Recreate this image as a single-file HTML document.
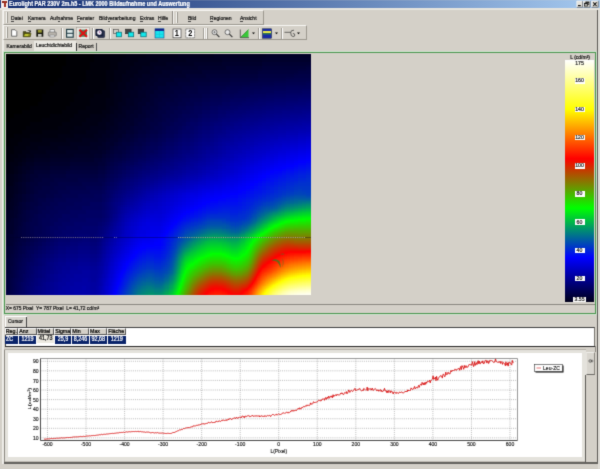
<!DOCTYPE html>
<html><head><meta charset="utf-8"><title>Eurolight PAR 230V 2m.h5 - LMK 2000 Bildaufnahme und Auswertung</title>
<style>
html,body{margin:0;padding:0}
body{width:600px;height:469px;overflow:hidden;background:#d4d0c8;position:relative;font-family:"Liberation Sans",sans-serif;font-size:5.25px;color:#141414;line-height:1;-webkit-text-stroke:0.2px}
div,span,svg{position:absolute;box-sizing:border-box}
.t{white-space:nowrap;transform:scaleY(1.22);transform-origin:0 50%}
#title{left:0;top:0;width:600px;height:8.2px;background:linear-gradient(90deg,#0a246a 0%,#a6caf0 100%)}
#title .t{left:9px;top:1.5px;color:#fff;font-weight:bold;font-size:5.48px}
.wb{top:1px;width:7px;height:7px;background:#d4d0c8;border:0.5px solid;border-color:#fff #404040 #404040 #fff}
.menu{top:16.4px;font-size:5.05px}
.menu u{text-decoration-thickness:0.35px;text-underline-offset:0.3px;text-decoration-color:#666}
.hm{left:6px;top:54px;overflow:hidden}
.chart{left:0;top:0}
.ct{font-family:"Liberation Sans",sans-serif;font-size:5.1px;fill:#111;stroke:#111;stroke-width:0.12px}
.cbl{left:574.5px;width:10px;height:5.6px;background:#fff;font-size:5.2px;text-align:center;line-height:5.8px;color:#222}
.sep{width:1px;background:#9c9890;box-shadow:1px 0 0 #fff}
.tab{font-size:5.0px}
.cell{top:335.8px;height:7.8px;background:#0a246a;color:#fff;font-size:5.4px;line-height:7.6px;text-align:center}
.hd{top:328.1px;height:6.8px;background:#d4d0c8;font-size:5.3px;line-height:5.6px;color:#000;border-right:0.6px solid #555;border-bottom:0.6px solid #555;border-left:0.5px solid #fff;border-top:0.5px solid #fff;padding-left:0.2px;white-space:nowrap}
#w{left:-8px;top:-8px;width:616px;height:485px;background:#d4d0c8;filter:url(#soft)}
#p{left:8px;top:8px;width:600px;height:469px}
.hd span,.cell span,.cbl span{position:static;display:block;transform:scaleY(1.2);line-height:1}
.cell,.cbl{display:flex;align-items:center;justify-content:center}
.cell span{transform:translateY(-0.45px) scaleY(1.2)}
.hd span{transform:translateY(0.2px) scaleY(1.15);margin-left:-0.4px}
.hd{display:flex;align-items:center;justify-content:flex-start}
</style></head><body>
<svg width="0" height="0" style="left:0;top:0"><defs><filter id="soft" x="0" y="0" width="100%" height="100%" color-interpolation-filters="sRGB"><feConvolveMatrix order="3" kernelMatrix="1 6 1 6 36 6 1 6 1" divisor="64" edgeMode="duplicate" preserveAlpha="true"/></filter></defs></svg>
<div id="w"><div id="p">

<!-- window frame bits -->
<div style="left:0;top:9px;width:1px;height:460px;background:#d4d0c8"></div>
<div style="left:2px;top:9px;width:1.8px;height:455px;background:#eeece8"></div>
<div style="left:597px;top:8.2px;width:1.4px;height:455.4px;background:#5c5a56"></div>
<div style="left:598.4px;top:8.2px;width:1.6px;height:461px;background:#e0ded8"></div>

<!-- title bar -->
<div id="title">
  <div style="left:1px;top:0.4px;width:7.2px;height:7.6px;background:#f8f0f0"></div>
  <div style="left:2.4px;top:1px;width:4.8px;height:1.5px;background:#8c2418"></div>
  <div style="left:3.9px;top:1px;width:1.8px;height:5.6px;background:#a03020"></div>
  <div class="t">Eurolight PAR 230V 2m.h5 - LMK 2000 Bildaufnahme und Auswertung</div>
</div>
<svg width="24" height="9" viewBox="576 0 24 9" style="left:576px;top:0">
  <rect x="576.8" y="1" width="5.8" height="6.2" fill="#e4e2dc"/><path d="M576.8 7.2h5.8v-6.2" stroke="#505050" stroke-width="0.7" fill="none"/><path d="M576.8 7.2v-6.2h5.8" stroke="#fff" stroke-width="0.6" fill="none"/>
  <rect x="578" y="5" width="2.8" height="1.1" fill="#111"/>
  <rect x="583.4" y="1" width="6.6" height="6.2" fill="#dcdad4"/><path d="M583.4 7.2h6.6v-6.2" stroke="#505050" stroke-width="0.7" fill="none"/><path d="M583.4 7.2v-6.2h6.6" stroke="#fff" stroke-width="0.6" fill="none"/>
  <rect x="585.8" y="2" width="3" height="2.6" fill="none" stroke="#111" stroke-width="0.7"/><rect x="585.8" y="1.9" width="3" height="0.9" fill="#111"/>
  <rect x="584.6" y="3.4" width="3" height="2.6" fill="#dcdad4" stroke="#111" stroke-width="0.7"/><rect x="584.6" y="3.3" width="3" height="0.9" fill="#111"/>
  <rect x="591.6" y="1" width="6.6" height="6.2" fill="#e4e2dc"/><path d="M591.6 7.2h6.6v-6.2" stroke="#505050" stroke-width="0.7" fill="none"/><path d="M591.6 7.2v-6.2h6.6" stroke="#fff" stroke-width="0.6" fill="none"/>
  <path d="M593.2 2.3l3.4 3.7M596.6 2.3l-3.4 3.7" stroke="#111" stroke-width="1.1"/>
</svg>
<!-- menu band -->
<div style="left:0;top:8.2px;width:600px;height:1.6px;background:#e6e4de"></div>
<div style="left:3.4px;top:10px;width:260.4px;height:14.6px;border:0.7px solid;border-color:#f6f5f2 #9c988f #9c988f #f6f5f2"></div>
<div style="left:5.6px;top:12px;width:0.9px;height:11px;background:#f8f8f4"></div><div style="left:6.5px;top:12px;width:0.8px;height:11px;background:#9a968e"></div>
<div style="left:172.4px;top:10.6px;width:0.8px;height:13.6px;background:#8e8a82"></div><div style="left:173.2px;top:10.6px;width:0.8px;height:13.6px;background:#f6f5f2"></div>
<div style="left:175.6px;top:12px;width:0.9px;height:11px;background:#f8f8f4"></div><div style="left:176.5px;top:12px;width:0.8px;height:11px;background:#9a968e"></div>
<!-- toolbar band -->
<div style="left:3.4px;top:24.8px;width:303.4px;height:15.6px;border:0.7px solid;border-color:#f6f5f2 #9c988f #9c988f #f6f5f2"></div>
<div style="left:5.6px;top:27px;width:0.9px;height:11.4px;background:#f8f8f4"></div><div style="left:6.5px;top:27px;width:0.8px;height:11.4px;background:#9a968e"></div>
<div class="t menu" style="left:11px">Datei</div>
<div class="t menu" style="left:28px">Kamera</div>
<div class="t menu" style="left:50px">Aufnahme</div>
<div class="t menu" style="left:77px">Fenster</div>
<div class="t menu" style="left:99px">Bildverarbeitung</div>
<div class="t menu" style="left:140px">Extras</div>
<div class="t menu" style="left:158px">Hilfe</div>
<div class="t menu" style="left:188px">Bild</div>
<div class="t menu" style="left:210px">Regionen</div>
<div class="t menu" style="left:240px">Ansicht</div>

<div style="left:11.2px;top:21.3px;width:3.3px;height:0.45px;background:#444"></div><div style="left:28.2px;top:21.3px;width:3.0px;height:0.45px;background:#444"></div><div style="left:57.8px;top:21.3px;width:2.4px;height:0.45px;background:#444"></div><div style="left:77.2px;top:21.3px;width:2.7px;height:0.45px;background:#444"></div><div style="left:107.6px;top:21.3px;width:2.1px;height:0.45px;background:#444"></div><div style="left:140.2px;top:21.3px;width:3.0px;height:0.45px;background:#444"></div><div style="left:158.2px;top:21.3px;width:3.3px;height:0.45px;background:#444"></div><div style="left:188.2px;top:21.3px;width:3.0px;height:0.45px;background:#444"></div><div style="left:210.2px;top:21.3px;width:3.3px;height:0.45px;background:#444"></div><div style="left:240.2px;top:21.3px;width:3.0px;height:0.45px;background:#444"></div>
<!-- toolbar -->
<!--ICONS-->
<svg width="310" height="16" viewBox="0 26 310 16" style="left:0;top:25.5px">
  <!-- new -->
  <path d="M11.6 29.7h3.4l1.8 1.8v4.7h-5.2z" fill="#fff" stroke="#3a3a3a" stroke-width="0.7"/>
  <!-- open -->
  <path d="M23.2 31.6h2.6l0.9 0.9h3.6v4.2H23.2z" fill="#4e4e12" stroke="#2a2a10" stroke-width="0.5"/>
  <path d="M24.6 33.6h6.6l-1.4 3.1H23.2z" fill="#8a8a18" stroke="#2a2a10" stroke-width="0.4"/>
  <path d="M25 34.3h3.6l-0.6 1.5h-3.6z" fill="#d0d838"/>
  <path d="M26.8 30.6q2-1.3 3.6 0.2l0.6-0.8v2h-2l0.7-0.7q-1.2-1-2.9-0.7z" fill="#333"/>
  <!-- save -->
  <rect x="36.3" y="29.5" width="7" height="7.2" fill="#1a1a10" />
  <rect x="37.8" y="30" width="4" height="2.6" fill="#9a9a30"/>
  <rect x="38" y="34" width="3.6" height="2.7" fill="#c8c8c0"/>
  <!-- print -->
  <path d="M50 32V29.5h4.5V32" fill="#eee" stroke="#666" stroke-width="0.6"/>
  <rect x="48.3" y="32" width="8" height="4" rx="0.8" fill="#b8b4ac" stroke="#666" stroke-width="0.6"/>
  <rect x="50" y="35" width="4.5" height="2" fill="#ddd" stroke="#666" stroke-width="0.4"/>
  <!-- sep -->
  <path d="M61.5 28v11" stroke="#a09c94" stroke-width="1"/><path d="M62.5 28v11" stroke="#fff" stroke-width="1"/>
  <!-- film -->
  <rect x="66.6" y="29.4" width="6.6" height="7.8" fill="#dfeaea" stroke="#1c3840" stroke-width="1.1"/>
  <path d="M66.6 33.3h6.6" stroke="#1c3840" stroke-width="1"/>
  <!-- red X pressed -->
  <rect x="76.5" y="27.6" width="13" height="12" fill="#e9e7e2" stroke="#9a968e" stroke-width="0.5"/>
  <rect x="79.4" y="29.6" width="7.6" height="7.2" fill="#4a8a62"/>
  <path d="M79.4 29.8L87 36.8M87 29.8L79.4 36.8" stroke="#e01010" stroke-width="2.1"/>
  <path d="M92.5 28v11" stroke="#a09c94" stroke-width="1"/><path d="M93.5 28v11" stroke="#fff" stroke-width="1"/>
  <!-- clock -->
  <rect x="97.6" y="30.6" width="7" height="7" rx="1" fill="#27304c" stroke="#10162c" stroke-width="0.6"/>
  <rect x="95.4" y="28.9" width="7.4" height="7" rx="1" fill="#141c38"/>
  <circle cx="99.4" cy="32.6" r="2.5" fill="#f6f4ff" stroke="#223" stroke-width="0.4"/>
  <path d="M99.4 31v1.7h1.2" stroke="#802060" stroke-width="0.5" fill="none"/>
  <path d="M109.5 28v11" stroke="#a09c94" stroke-width="1"/><path d="M110.5 28v11" stroke="#fff" stroke-width="1"/>
  <!-- cyan boxes -->
  <rect x="113.3" y="29.5" width="5" height="4" fill="#d4d0c8" stroke="#444" stroke-width="0.6"/>
  <rect x="116.3" y="32.2" width="5.2" height="4.6" fill="#12e8ec" stroke="#0a6a70" stroke-width="0.7"/>
  <rect x="125.6" y="29.2" width="5.5" height="4.5" fill="#444" stroke="#222" stroke-width="0.6"/>
  <rect x="128.3" y="32.2" width="5.4" height="4.6" fill="#12e8ec" stroke="#0a6a70" stroke-width="0.7"/>
  <rect x="138.2" y="29.2" width="5.5" height="4.5" fill="#444" stroke="#222" stroke-width="0.6"/>
  <rect x="140.8" y="32.2" width="5.4" height="4.6" fill="#12e8ec" stroke="#0a6a70" stroke-width="0.7"/>
  <!-- cyan window -->
  <rect x="155" y="28.8" width="9" height="9.2" fill="#18e4ee" stroke="#1a4a8a" stroke-width="0.6"/><path d="M159.5 31v7M155 34.4h9" stroke="#10c0d0" stroke-width="0.5"/>
  <rect x="155" y="28.8" width="9" height="2.1" fill="#14208a"/>
  <!-- 1 2 -->
  <rect x="173" y="29" width="8" height="8.8" fill="#fff" stroke="#444" stroke-width="0.7"/>
  <rect x="185.8" y="29" width="8.8" height="8.8" fill="#fff" stroke="#444" stroke-width="0.7" stroke-dasharray="1 0.5"/>
  <text transform="translate(176.9 36.1) scale(1 1.18)" text-anchor="middle" font-family="Liberation Sans, sans-serif" font-weight="bold" font-size="7.4" fill="#000">1</text>
  <text transform="translate(190.2 36.1) scale(1 1.18)" text-anchor="middle" font-family="Liberation Sans, sans-serif" font-weight="bold" font-size="7.4" fill="#000">2</text>
  <path d="M203.5 28v11" stroke="#a09c94" stroke-width="1"/><path d="M204.5 28v11" stroke="#fff" stroke-width="1"/>
  <path d="M206.5 28v11" stroke="#fff" stroke-width="1"/><path d="M207.5 28v11" stroke="#a09c94" stroke-width="1"/>
  <!-- magnifiers -->
  <circle cx="214.5" cy="32.2" r="2.5" fill="#e8e8e8" stroke="#444" stroke-width="0.7"/><path d="M216.4 34.2l3 3" stroke="#333" stroke-width="1.1"/>
  <path d="M213.3 32.2h2.4M214.5 31v2.4" stroke="#444" stroke-width="0.5"/>
  <circle cx="227.5" cy="32.2" r="2.5" fill="#e8e8e8" stroke="#444" stroke-width="0.7"/><path d="M229.4 34.2l3 3" stroke="#333" stroke-width="1.1"/>
  <!-- green triangle -->
  <path d="M240.5 37.5L248.5 29.5V37.5z" fill="#38c838"/>
  <path d="M240.3 29.5V37.7H249" stroke="#333" stroke-width="0.7" fill="none"/>
  <path d="M240.5 37.5L248.5 29.5" stroke="#1a7a1a" stroke-width="0.6"/>
  <path d="M252 32.5h3l-1.5 1.8z" fill="#000"/>
  <path d="M258.5 28v11" stroke="#a09c94" stroke-width="1"/><path d="M259.5 28v11" stroke="#fff" stroke-width="1"/>
  <!-- blue yellow -->
  <rect x="262.5" y="28.8" width="9" height="9.4" fill="#1a2aa8" stroke="#123" stroke-width="0.5"/>
  <rect x="263" y="31" width="8" height="2.2" fill="#e8e84a"/>
  <rect x="263" y="33.2" width="8" height="1.3" fill="#2a7a4a"/>
  <path d="M275 32.5h3l-1.5 1.8z" fill="#000"/>
  <path d="M281.5 28v11" stroke="#a09c94" stroke-width="1"/><path d="M282.5 28v11" stroke="#fff" stroke-width="1"/>
  <!-- squiggle -->
  <path d="M284.5 32.3h6.2M294 30.2q-3.2-0.2-3.3 2.4q0 4 2.4 4q1.7 0 1.7-1.6q0-1.6-1.9-1.5" stroke="#2a2a2a" stroke-width="0.65" fill="none"/>
  <path d="M297 32.5h3l-1.5 1.8z" fill="#000"/>
</svg>

<!-- tabs -->
<div style="left:33.5px;top:41.2px;width:42px;height:10px;background:#eae8e2"></div>
<div class="t tab" style="left:6.5px;top:43.6px">Kamerabild</div>
<div class="t tab" style="left:36px;top:42.8px">Leuchtdichtebild</div>
<div class="t tab" style="left:78.6px;top:43.6px">Report</div>
<div style="left:75.6px;top:42.5px;width:0.9px;height:8.5px;background:#333"></div>
<div style="left:95.6px;top:42.5px;width:0.9px;height:8.5px;background:#555"></div>

<!-- main panel -->
<div style="left:4.2px;top:52.1px;width:592px;height:261.8px;border:1.7px solid #4c9650;box-shadow:0 0 0 0.9px #cde6cd"></div>
<svg class="hm" width="305" height="241" viewBox="0 0 305 241">
<defs><filter id="cm" x="-20" y="-20" width="345" height="281" filterUnits="userSpaceOnUse" color-interpolation-filters="sRGB">
<feGaussianBlur stdDeviation="2"/>
<feComponentTransfer><feFuncR type="table" tableValues="0 0 0 1 1 1"/><feFuncG type="table" tableValues="0 0 1 0 1 1"/><feFuncB type="table" tableValues="0 1 0 0 0 1"/><feFuncA type="table" tableValues="1 1"/></feComponentTransfer>
</filter></defs>
<rect x="-20" y="-20" width="345" height="281" fill="#000"/>
<g filter="url(#cm)" shape-rendering="crispEdges"><path fill="#000000" d="M-12 -12h4v4h-4zM-8 -12h4v4h-4zM-4 -12h4v4h-4zM0 -12h4v4h-4zM4 -12h4v4h-4zM8 -12h4v4h-4zM12 -12h4v4h-4zM16 -12h4v4h-4zM20 -12h4v4h-4zM24 -12h4v4h-4zM28 -12h4v4h-4zM32 -12h4v4h-4zM36 -12h4v4h-4zM40 -12h4v4h-4zM44 -12h4v4h-4zM48 -12h4v4h-4zM52 -12h4v4h-4zM56 -12h4v4h-4zM-12 -8h4v4h-4zM-8 -8h4v4h-4zM-4 -8h4v4h-4zM0 -8h4v4h-4zM4 -8h4v4h-4zM8 -8h4v4h-4zM12 -8h4v4h-4zM16 -8h4v4h-4zM20 -8h4v4h-4zM24 -8h4v4h-4zM28 -8h4v4h-4zM32 -8h4v4h-4zM36 -8h4v4h-4zM40 -8h4v4h-4zM44 -8h4v4h-4zM48 -8h4v4h-4zM52 -8h4v4h-4zM56 -8h4v4h-4zM-12 -4h4v4h-4zM-8 -4h4v4h-4zM-4 -4h4v4h-4zM0 -4h4v4h-4zM4 -4h4v4h-4zM8 -4h4v4h-4zM12 -4h4v4h-4zM16 -4h4v4h-4zM20 -4h4v4h-4zM24 -4h4v4h-4zM28 -4h4v4h-4zM32 -4h4v4h-4zM36 -4h4v4h-4zM40 -4h4v4h-4zM44 -4h4v4h-4zM48 -4h4v4h-4zM52 -4h4v4h-4zM56 -4h4v4h-4zM-12 0h4v4h-4zM-8 0h4v4h-4zM-4 0h4v4h-4zM0 0h4v4h-4zM4 0h4v4h-4zM8 0h4v4h-4zM12 0h4v4h-4zM16 0h4v4h-4zM20 0h4v4h-4zM24 0h4v4h-4zM28 0h4v4h-4zM32 0h4v4h-4zM36 0h4v4h-4zM40 0h4v4h-4zM44 0h4v4h-4zM48 0h4v4h-4zM52 0h4v4h-4zM56 0h4v4h-4zM-12 4h4v4h-4zM-8 4h4v4h-4zM-4 4h4v4h-4zM0 4h4v4h-4zM4 4h4v4h-4zM8 4h4v4h-4zM12 4h4v4h-4zM16 4h4v4h-4zM20 4h4v4h-4zM24 4h4v4h-4zM28 4h4v4h-4zM32 4h4v4h-4zM36 4h4v4h-4zM40 4h4v4h-4zM44 4h4v4h-4zM48 4h4v4h-4zM52 4h4v4h-4zM56 4h4v4h-4zM-12 8h4v4h-4zM-8 8h4v4h-4zM-4 8h4v4h-4zM0 8h4v4h-4zM4 8h4v4h-4zM8 8h4v4h-4zM12 8h4v4h-4zM16 8h4v4h-4zM20 8h4v4h-4zM24 8h4v4h-4zM28 8h4v4h-4zM32 8h4v4h-4zM36 8h4v4h-4zM40 8h4v4h-4zM44 8h4v4h-4zM48 8h4v4h-4zM52 8h4v4h-4zM56 8h4v4h-4zM-12 12h4v4h-4zM-8 12h4v4h-4zM-4 12h4v4h-4zM0 12h4v4h-4zM4 12h4v4h-4zM8 12h4v4h-4zM12 12h4v4h-4zM16 12h4v4h-4zM20 12h4v4h-4zM24 12h4v4h-4zM28 12h4v4h-4zM32 12h4v4h-4zM36 12h4v4h-4zM40 12h4v4h-4zM44 12h4v4h-4zM48 12h4v4h-4zM52 12h4v4h-4zM-12 16h4v4h-4zM-8 16h4v4h-4zM-4 16h4v4h-4zM0 16h4v4h-4zM4 16h4v4h-4zM8 16h4v4h-4zM12 16h4v4h-4zM16 16h4v4h-4zM20 16h4v4h-4zM24 16h4v4h-4zM28 16h4v4h-4zM32 16h4v4h-4zM36 16h4v4h-4zM40 16h4v4h-4zM44 16h4v4h-4zM48 16h4v4h-4zM52 16h4v4h-4zM-12 20h4v4h-4zM-8 20h4v4h-4zM-4 20h4v4h-4zM0 20h4v4h-4zM4 20h4v4h-4zM8 20h4v4h-4zM12 20h4v4h-4zM16 20h4v4h-4zM20 20h4v4h-4zM24 20h4v4h-4zM28 20h4v4h-4zM32 20h4v4h-4zM36 20h4v4h-4zM40 20h4v4h-4zM44 20h4v4h-4zM48 20h4v4h-4zM52 20h4v4h-4zM-12 24h4v4h-4zM-8 24h4v4h-4zM-4 24h4v4h-4zM0 24h4v4h-4zM4 24h4v4h-4zM8 24h4v4h-4zM12 24h4v4h-4zM16 24h4v4h-4zM20 24h4v4h-4zM24 24h4v4h-4zM28 24h4v4h-4zM32 24h4v4h-4zM36 24h4v4h-4zM40 24h4v4h-4zM44 24h4v4h-4zM48 24h4v4h-4zM-12 28h4v4h-4zM-8 28h4v4h-4zM-4 28h4v4h-4zM0 28h4v4h-4zM4 28h4v4h-4zM8 28h4v4h-4zM12 28h4v4h-4zM16 28h4v4h-4zM20 28h4v4h-4zM24 28h4v4h-4zM28 28h4v4h-4zM32 28h4v4h-4zM36 28h4v4h-4zM40 28h4v4h-4zM44 28h4v4h-4zM-12 32h4v4h-4zM-8 32h4v4h-4zM-4 32h4v4h-4zM0 32h4v4h-4zM4 32h4v4h-4zM8 32h4v4h-4zM12 32h4v4h-4zM16 32h4v4h-4zM20 32h4v4h-4zM24 32h4v4h-4zM28 32h4v4h-4zM32 32h4v4h-4zM36 32h4v4h-4zM40 32h4v4h-4zM-12 36h4v4h-4zM-8 36h4v4h-4zM-4 36h4v4h-4zM0 36h4v4h-4zM4 36h4v4h-4zM8 36h4v4h-4zM12 36h4v4h-4zM16 36h4v4h-4zM20 36h4v4h-4zM24 36h4v4h-4zM28 36h4v4h-4zM32 36h4v4h-4zM36 36h4v4h-4zM-12 40h4v4h-4zM-8 40h4v4h-4zM-4 40h4v4h-4zM0 40h4v4h-4zM4 40h4v4h-4zM8 40h4v4h-4zM12 40h4v4h-4zM16 40h4v4h-4zM20 40h4v4h-4zM24 40h4v4h-4zM28 40h4v4h-4zM32 40h4v4h-4zM-12 44h4v4h-4zM-8 44h4v4h-4zM-4 44h4v4h-4zM0 44h4v4h-4zM4 44h4v4h-4zM8 44h4v4h-4zM12 44h4v4h-4zM16 44h4v4h-4zM20 44h4v4h-4zM24 44h4v4h-4zM28 44h4v4h-4zM32 44h4v4h-4zM-12 48h4v4h-4zM-8 48h4v4h-4zM-4 48h4v4h-4zM0 48h4v4h-4zM4 48h4v4h-4zM8 48h4v4h-4zM12 48h4v4h-4zM16 48h4v4h-4zM20 48h4v4h-4zM24 48h4v4h-4zM28 48h4v4h-4zM-12 52h4v4h-4zM-8 52h4v4h-4zM-4 52h4v4h-4zM0 52h4v4h-4zM4 52h4v4h-4zM8 52h4v4h-4zM12 52h4v4h-4zM16 52h4v4h-4zM20 52h4v4h-4zM-12 56h4v4h-4zM-8 56h4v4h-4zM-4 56h4v4h-4zM0 56h4v4h-4zM4 56h4v4h-4zM8 56h4v4h-4zM12 56h4v4h-4zM-12 60h4v4h-4zM-8 60h4v4h-4zM-4 60h4v4h-4zM0 60h4v4h-4zM4 60h4v4h-4zM-12 64h4v4h-4zM-8 64h4v4h-4zM-4 64h4v4h-4zM0 64h4v4h-4zM-12 68h4v4h-4zM-8 68h4v4h-4zM-4 68h4v4h-4z"/><path fill="#010101" d="M60 -12h4v4h-4zM64 -12h4v4h-4zM68 -12h4v4h-4zM72 -12h4v4h-4zM76 -12h4v4h-4zM80 -12h4v4h-4zM84 -12h4v4h-4zM88 -12h4v4h-4zM60 -8h4v4h-4zM64 -8h4v4h-4zM68 -8h4v4h-4zM72 -8h4v4h-4zM76 -8h4v4h-4zM80 -8h4v4h-4zM84 -8h4v4h-4zM88 -8h4v4h-4zM60 -4h4v4h-4zM64 -4h4v4h-4zM68 -4h4v4h-4zM72 -4h4v4h-4zM76 -4h4v4h-4zM80 -4h4v4h-4zM84 -4h4v4h-4zM88 -4h4v4h-4zM60 0h4v4h-4zM64 0h4v4h-4zM68 0h4v4h-4zM72 0h4v4h-4zM76 0h4v4h-4zM80 0h4v4h-4zM84 0h4v4h-4zM60 4h4v4h-4zM64 4h4v4h-4zM68 4h4v4h-4zM72 4h4v4h-4zM76 4h4v4h-4zM80 4h4v4h-4zM84 4h4v4h-4zM60 8h4v4h-4zM64 8h4v4h-4zM68 8h4v4h-4zM72 8h4v4h-4zM76 8h4v4h-4zM80 8h4v4h-4zM56 12h4v4h-4zM60 12h4v4h-4zM64 12h4v4h-4zM68 12h4v4h-4zM72 12h4v4h-4zM76 12h4v4h-4zM80 12h4v4h-4zM56 16h4v4h-4zM60 16h4v4h-4zM64 16h4v4h-4zM68 16h4v4h-4zM72 16h4v4h-4zM76 16h4v4h-4zM56 20h4v4h-4zM60 20h4v4h-4zM64 20h4v4h-4zM68 20h4v4h-4zM72 20h4v4h-4zM76 20h4v4h-4zM52 24h4v4h-4zM56 24h4v4h-4zM60 24h4v4h-4zM64 24h4v4h-4zM68 24h4v4h-4zM72 24h4v4h-4zM76 24h4v4h-4zM48 28h4v4h-4zM52 28h4v4h-4zM56 28h4v4h-4zM60 28h4v4h-4zM64 28h4v4h-4zM68 28h4v4h-4zM72 28h4v4h-4zM44 32h4v4h-4zM48 32h4v4h-4zM52 32h4v4h-4zM56 32h4v4h-4zM60 32h4v4h-4zM64 32h4v4h-4zM68 32h4v4h-4zM40 36h4v4h-4zM44 36h4v4h-4zM48 36h4v4h-4zM52 36h4v4h-4zM56 36h4v4h-4zM60 36h4v4h-4zM64 36h4v4h-4zM68 36h4v4h-4zM36 40h4v4h-4zM40 40h4v4h-4zM44 40h4v4h-4zM48 40h4v4h-4zM52 40h4v4h-4zM56 40h4v4h-4zM60 40h4v4h-4zM64 40h4v4h-4zM36 44h4v4h-4zM40 44h4v4h-4zM44 44h4v4h-4zM48 44h4v4h-4zM52 44h4v4h-4zM56 44h4v4h-4zM60 44h4v4h-4zM64 44h4v4h-4zM32 48h4v4h-4zM36 48h4v4h-4zM40 48h4v4h-4zM44 48h4v4h-4zM48 48h4v4h-4zM52 48h4v4h-4zM56 48h4v4h-4zM60 48h4v4h-4zM24 52h4v4h-4zM28 52h4v4h-4zM32 52h4v4h-4zM36 52h4v4h-4zM40 52h4v4h-4zM44 52h4v4h-4zM48 52h4v4h-4zM52 52h4v4h-4zM56 52h4v4h-4zM16 56h4v4h-4zM20 56h4v4h-4zM24 56h4v4h-4zM28 56h4v4h-4zM32 56h4v4h-4zM36 56h4v4h-4zM40 56h4v4h-4zM44 56h4v4h-4zM48 56h4v4h-4zM52 56h4v4h-4zM8 60h4v4h-4zM12 60h4v4h-4zM16 60h4v4h-4zM20 60h4v4h-4zM24 60h4v4h-4zM28 60h4v4h-4zM32 60h4v4h-4zM36 60h4v4h-4zM40 60h4v4h-4zM4 64h4v4h-4zM8 64h4v4h-4zM12 64h4v4h-4zM16 64h4v4h-4zM20 64h4v4h-4zM24 64h4v4h-4zM28 64h4v4h-4zM32 64h4v4h-4zM0 68h4v4h-4zM4 68h4v4h-4zM8 68h4v4h-4zM12 68h4v4h-4zM16 68h4v4h-4zM20 68h4v4h-4zM-12 72h4v4h-4zM-8 72h4v4h-4zM-4 72h4v4h-4zM0 72h4v4h-4zM4 72h4v4h-4zM8 72h4v4h-4zM12 72h4v4h-4zM16 72h4v4h-4zM-12 76h4v4h-4zM-8 76h4v4h-4zM-4 76h4v4h-4zM0 76h4v4h-4zM4 76h4v4h-4zM8 76h4v4h-4zM12 76h4v4h-4zM-12 80h4v4h-4zM-8 80h4v4h-4zM-4 80h4v4h-4zM0 80h4v4h-4zM4 80h4v4h-4zM-12 84h4v4h-4zM-8 84h4v4h-4zM-4 84h4v4h-4zM0 84h4v4h-4zM-12 88h4v4h-4zM-8 88h4v4h-4zM-4 88h4v4h-4zM0 88h4v4h-4zM-12 92h4v4h-4zM-8 92h4v4h-4zM-4 92h4v4h-4z"/><path fill="#020202" d="M92 -12h4v4h-4zM96 -12h4v4h-4zM100 -12h4v4h-4zM92 -8h4v4h-4zM96 -8h4v4h-4zM100 -8h4v4h-4zM92 -4h4v4h-4zM96 -4h4v4h-4zM100 -4h4v4h-4zM88 0h4v4h-4zM92 0h4v4h-4zM96 0h4v4h-4zM100 0h4v4h-4zM88 4h4v4h-4zM92 4h4v4h-4zM96 4h4v4h-4zM100 4h4v4h-4zM84 8h4v4h-4zM88 8h4v4h-4zM92 8h4v4h-4zM96 8h4v4h-4zM100 8h4v4h-4zM84 12h4v4h-4zM88 12h4v4h-4zM92 12h4v4h-4zM96 12h4v4h-4zM100 12h4v4h-4zM80 16h4v4h-4zM84 16h4v4h-4zM88 16h4v4h-4zM92 16h4v4h-4zM96 16h4v4h-4zM80 20h4v4h-4zM84 20h4v4h-4zM88 20h4v4h-4zM92 20h4v4h-4zM96 20h4v4h-4zM80 24h4v4h-4zM84 24h4v4h-4zM88 24h4v4h-4zM92 24h4v4h-4zM96 24h4v4h-4zM76 28h4v4h-4zM80 28h4v4h-4zM84 28h4v4h-4zM88 28h4v4h-4zM92 28h4v4h-4zM96 28h4v4h-4zM72 32h4v4h-4zM76 32h4v4h-4zM80 32h4v4h-4zM84 32h4v4h-4zM88 32h4v4h-4zM92 32h4v4h-4zM96 32h4v4h-4zM72 36h4v4h-4zM76 36h4v4h-4zM80 36h4v4h-4zM84 36h4v4h-4zM88 36h4v4h-4zM92 36h4v4h-4zM68 40h4v4h-4zM72 40h4v4h-4zM76 40h4v4h-4zM80 40h4v4h-4zM84 40h4v4h-4zM68 44h4v4h-4zM72 44h4v4h-4zM76 44h4v4h-4zM80 44h4v4h-4zM64 48h4v4h-4zM68 48h4v4h-4zM72 48h4v4h-4zM76 48h4v4h-4zM80 48h4v4h-4zM60 52h4v4h-4zM64 52h4v4h-4zM68 52h4v4h-4zM72 52h4v4h-4zM76 52h4v4h-4zM56 56h4v4h-4zM60 56h4v4h-4zM64 56h4v4h-4zM68 56h4v4h-4zM44 60h4v4h-4zM48 60h4v4h-4zM52 60h4v4h-4zM56 60h4v4h-4zM60 60h4v4h-4zM64 60h4v4h-4zM36 64h4v4h-4zM40 64h4v4h-4zM44 64h4v4h-4zM48 64h4v4h-4zM52 64h4v4h-4zM56 64h4v4h-4zM60 64h4v4h-4zM24 68h4v4h-4zM28 68h4v4h-4zM32 68h4v4h-4zM36 68h4v4h-4zM40 68h4v4h-4zM44 68h4v4h-4zM48 68h4v4h-4zM52 68h4v4h-4zM20 72h4v4h-4zM24 72h4v4h-4zM28 72h4v4h-4zM32 72h4v4h-4zM36 72h4v4h-4zM40 72h4v4h-4zM44 72h4v4h-4zM48 72h4v4h-4zM16 76h4v4h-4zM20 76h4v4h-4zM24 76h4v4h-4zM28 76h4v4h-4zM32 76h4v4h-4zM8 80h4v4h-4zM12 80h4v4h-4zM16 80h4v4h-4zM20 80h4v4h-4zM4 84h4v4h-4zM8 84h4v4h-4zM12 84h4v4h-4zM4 88h4v4h-4zM8 88h4v4h-4zM0 92h4v4h-4zM4 92h4v4h-4zM-12 96h4v4h-4zM-8 96h4v4h-4zM-4 96h4v4h-4zM0 96h4v4h-4zM4 96h4v4h-4zM-12 100h4v4h-4zM-8 100h4v4h-4zM-4 100h4v4h-4zM0 100h4v4h-4zM-12 104h4v4h-4zM-8 104h4v4h-4zM-4 104h4v4h-4zM0 104h4v4h-4zM-12 108h4v4h-4zM-8 108h4v4h-4zM-4 108h4v4h-4z"/><path fill="#030303" d="M104 -12h4v4h-4zM108 -12h4v4h-4zM112 -12h4v4h-4zM116 -12h4v4h-4zM104 -8h4v4h-4zM108 -8h4v4h-4zM112 -8h4v4h-4zM116 -8h4v4h-4zM104 -4h4v4h-4zM108 -4h4v4h-4zM112 -4h4v4h-4zM116 -4h4v4h-4zM104 0h4v4h-4zM108 0h4v4h-4zM112 0h4v4h-4zM116 0h4v4h-4zM104 4h4v4h-4zM108 4h4v4h-4zM112 4h4v4h-4zM104 8h4v4h-4zM108 8h4v4h-4zM104 12h4v4h-4zM108 12h4v4h-4zM100 16h4v4h-4zM104 16h4v4h-4zM100 20h4v4h-4zM104 20h4v4h-4zM100 24h4v4h-4zM104 24h4v4h-4zM100 28h4v4h-4zM100 32h4v4h-4zM96 36h4v4h-4zM100 36h4v4h-4zM88 40h4v4h-4zM92 40h4v4h-4zM96 40h4v4h-4zM100 40h4v4h-4zM84 44h4v4h-4zM88 44h4v4h-4zM92 44h4v4h-4zM96 44h4v4h-4zM84 48h4v4h-4zM88 48h4v4h-4zM92 48h4v4h-4zM96 48h4v4h-4zM80 52h4v4h-4zM84 52h4v4h-4zM88 52h4v4h-4zM92 52h4v4h-4zM96 52h4v4h-4zM72 56h4v4h-4zM76 56h4v4h-4zM80 56h4v4h-4zM84 56h4v4h-4zM88 56h4v4h-4zM92 56h4v4h-4zM68 60h4v4h-4zM72 60h4v4h-4zM76 60h4v4h-4zM80 60h4v4h-4zM64 64h4v4h-4zM68 64h4v4h-4zM72 64h4v4h-4zM76 64h4v4h-4zM56 68h4v4h-4zM60 68h4v4h-4zM64 68h4v4h-4zM68 68h4v4h-4zM72 68h4v4h-4zM52 72h4v4h-4zM56 72h4v4h-4zM60 72h4v4h-4zM64 72h4v4h-4zM36 76h4v4h-4zM40 76h4v4h-4zM44 76h4v4h-4zM48 76h4v4h-4zM52 76h4v4h-4zM56 76h4v4h-4zM60 76h4v4h-4zM24 80h4v4h-4zM28 80h4v4h-4zM32 80h4v4h-4zM36 80h4v4h-4zM40 80h4v4h-4zM44 80h4v4h-4zM48 80h4v4h-4zM16 84h4v4h-4zM20 84h4v4h-4zM24 84h4v4h-4zM28 84h4v4h-4zM32 84h4v4h-4zM12 88h4v4h-4zM16 88h4v4h-4zM20 88h4v4h-4zM8 92h4v4h-4zM12 92h4v4h-4zM16 92h4v4h-4zM8 96h4v4h-4zM12 96h4v4h-4zM4 100h4v4h-4zM8 100h4v4h-4zM4 104h4v4h-4zM0 108h4v4h-4zM-12 112h4v4h-4zM-8 112h4v4h-4zM-4 112h4v4h-4zM0 112h4v4h-4zM-12 116h4v4h-4zM-8 116h4v4h-4zM-4 116h4v4h-4zM0 116h4v4h-4zM-12 120h4v4h-4zM-8 120h4v4h-4zM-4 120h4v4h-4zM-12 124h4v4h-4zM-8 124h4v4h-4zM-4 124h4v4h-4z"/><path fill="#040404" d="M120 -12h4v4h-4zM124 -12h4v4h-4zM128 -12h4v4h-4zM132 -12h4v4h-4zM136 -12h4v4h-4zM140 -12h4v4h-4zM144 -12h4v4h-4zM120 -8h4v4h-4zM124 -8h4v4h-4zM128 -8h4v4h-4zM132 -8h4v4h-4zM136 -8h4v4h-4zM140 -8h4v4h-4zM144 -8h4v4h-4zM120 -4h4v4h-4zM124 -4h4v4h-4zM128 -4h4v4h-4zM132 -4h4v4h-4zM136 -4h4v4h-4zM140 -4h4v4h-4zM144 -4h4v4h-4zM120 0h4v4h-4zM124 0h4v4h-4zM128 0h4v4h-4zM132 0h4v4h-4zM136 0h4v4h-4zM116 4h4v4h-4zM120 4h4v4h-4zM124 4h4v4h-4zM128 4h4v4h-4zM112 8h4v4h-4zM116 8h4v4h-4zM120 8h4v4h-4zM124 8h4v4h-4zM112 12h4v4h-4zM116 12h4v4h-4zM120 12h4v4h-4zM108 16h4v4h-4zM112 16h4v4h-4zM116 16h4v4h-4zM108 20h4v4h-4zM112 20h4v4h-4zM108 24h4v4h-4zM112 24h4v4h-4zM104 28h4v4h-4zM108 28h4v4h-4zM104 32h4v4h-4zM108 32h4v4h-4zM104 36h4v4h-4zM104 40h4v4h-4zM100 44h4v4h-4zM104 44h4v4h-4zM100 48h4v4h-4zM104 48h4v4h-4zM100 52h4v4h-4zM96 56h4v4h-4zM100 56h4v4h-4zM84 60h4v4h-4zM88 60h4v4h-4zM92 60h4v4h-4zM96 60h4v4h-4zM80 64h4v4h-4zM84 64h4v4h-4zM88 64h4v4h-4zM92 64h4v4h-4zM76 68h4v4h-4zM80 68h4v4h-4zM84 68h4v4h-4zM88 68h4v4h-4zM68 72h4v4h-4zM72 72h4v4h-4zM76 72h4v4h-4zM80 72h4v4h-4zM64 76h4v4h-4zM68 76h4v4h-4zM72 76h4v4h-4zM76 76h4v4h-4zM52 80h4v4h-4zM56 80h4v4h-4zM60 80h4v4h-4zM64 80h4v4h-4zM36 84h4v4h-4zM40 84h4v4h-4zM44 84h4v4h-4zM48 84h4v4h-4zM52 84h4v4h-4zM56 84h4v4h-4zM24 88h4v4h-4zM28 88h4v4h-4zM32 88h4v4h-4zM36 88h4v4h-4zM40 88h4v4h-4zM20 92h4v4h-4zM24 92h4v4h-4zM28 92h4v4h-4zM16 96h4v4h-4zM20 96h4v4h-4zM12 100h4v4h-4zM16 100h4v4h-4zM8 104h4v4h-4zM12 104h4v4h-4zM4 108h4v4h-4zM8 108h4v4h-4zM4 112h4v4h-4zM4 116h4v4h-4zM0 120h4v4h-4zM0 124h4v4h-4zM-12 128h4v4h-4zM-8 128h4v4h-4zM-4 128h4v4h-4zM0 128h4v4h-4zM-12 132h4v4h-4zM-8 132h4v4h-4zM-4 132h4v4h-4zM-12 136h4v4h-4zM-8 136h4v4h-4zM-4 136h4v4h-4zM-12 140h4v4h-4zM-8 140h4v4h-4zM-4 140h4v4h-4z"/><path fill="#050505" d="M148 -12h4v4h-4zM152 -12h4v4h-4zM156 -12h4v4h-4zM160 -12h4v4h-4zM164 -12h4v4h-4zM168 -12h4v4h-4zM172 -12h4v4h-4zM176 -12h4v4h-4zM180 -12h4v4h-4zM148 -8h4v4h-4zM152 -8h4v4h-4zM156 -8h4v4h-4zM160 -8h4v4h-4zM164 -8h4v4h-4zM168 -8h4v4h-4zM172 -8h4v4h-4zM176 -8h4v4h-4zM180 -8h4v4h-4zM148 -4h4v4h-4zM152 -4h4v4h-4zM156 -4h4v4h-4zM160 -4h4v4h-4zM164 -4h4v4h-4zM168 -4h4v4h-4zM172 -4h4v4h-4zM176 -4h4v4h-4zM180 -4h4v4h-4zM140 0h4v4h-4zM144 0h4v4h-4zM148 0h4v4h-4zM152 0h4v4h-4zM156 0h4v4h-4zM160 0h4v4h-4zM164 0h4v4h-4zM168 0h4v4h-4zM132 4h4v4h-4zM136 4h4v4h-4zM140 4h4v4h-4zM144 4h4v4h-4zM148 4h4v4h-4zM128 8h4v4h-4zM132 8h4v4h-4zM136 8h4v4h-4zM140 8h4v4h-4zM124 12h4v4h-4zM128 12h4v4h-4zM132 12h4v4h-4zM120 16h4v4h-4zM124 16h4v4h-4zM128 16h4v4h-4zM116 20h4v4h-4zM120 20h4v4h-4zM124 20h4v4h-4zM116 24h4v4h-4zM120 24h4v4h-4zM112 28h4v4h-4zM116 28h4v4h-4zM112 32h4v4h-4zM116 32h4v4h-4zM108 36h4v4h-4zM112 36h4v4h-4zM108 40h4v4h-4zM112 40h4v4h-4zM108 44h4v4h-4zM112 44h4v4h-4zM108 48h4v4h-4zM104 52h4v4h-4zM108 52h4v4h-4zM104 56h4v4h-4zM100 60h4v4h-4zM96 64h4v4h-4zM100 64h4v4h-4zM92 68h4v4h-4zM96 68h4v4h-4zM84 72h4v4h-4zM88 72h4v4h-4zM92 72h4v4h-4zM96 72h4v4h-4zM80 76h4v4h-4zM84 76h4v4h-4zM88 76h4v4h-4zM68 80h4v4h-4zM72 80h4v4h-4zM76 80h4v4h-4zM80 80h4v4h-4zM84 80h4v4h-4zM60 84h4v4h-4zM64 84h4v4h-4zM68 84h4v4h-4zM72 84h4v4h-4zM44 88h4v4h-4zM48 88h4v4h-4zM52 88h4v4h-4zM56 88h4v4h-4zM60 88h4v4h-4zM32 92h4v4h-4zM36 92h4v4h-4zM40 92h4v4h-4zM44 92h4v4h-4zM48 92h4v4h-4zM24 96h4v4h-4zM28 96h4v4h-4zM32 96h4v4h-4zM36 96h4v4h-4zM20 100h4v4h-4zM24 100h4v4h-4zM16 104h4v4h-4zM12 108h4v4h-4zM8 112h4v4h-4zM8 116h4v4h-4zM4 120h4v4h-4zM4 124h4v4h-4zM4 128h4v4h-4zM0 132h4v4h-4zM0 136h4v4h-4zM0 140h4v4h-4zM-12 144h4v4h-4zM-8 144h4v4h-4zM-4 144h4v4h-4zM0 144h4v4h-4zM-12 148h4v4h-4zM-8 148h4v4h-4zM-4 148h4v4h-4z"/><path fill="#060606" d="M184 -12h4v4h-4zM188 -12h4v4h-4zM192 -12h4v4h-4zM196 -12h4v4h-4zM200 -12h4v4h-4zM204 -12h4v4h-4zM208 -12h4v4h-4zM212 -12h4v4h-4zM216 -12h4v4h-4zM220 -12h4v4h-4zM224 -12h4v4h-4zM228 -12h4v4h-4zM184 -8h4v4h-4zM188 -8h4v4h-4zM192 -8h4v4h-4zM196 -8h4v4h-4zM200 -8h4v4h-4zM204 -8h4v4h-4zM208 -8h4v4h-4zM212 -8h4v4h-4zM216 -8h4v4h-4zM220 -8h4v4h-4zM224 -8h4v4h-4zM228 -8h4v4h-4zM184 -4h4v4h-4zM188 -4h4v4h-4zM192 -4h4v4h-4zM196 -4h4v4h-4zM200 -4h4v4h-4zM204 -4h4v4h-4zM208 -4h4v4h-4zM212 -4h4v4h-4zM216 -4h4v4h-4zM220 -4h4v4h-4zM224 -4h4v4h-4zM228 -4h4v4h-4zM172 0h4v4h-4zM176 0h4v4h-4zM180 0h4v4h-4zM184 0h4v4h-4zM188 0h4v4h-4zM192 0h4v4h-4zM196 0h4v4h-4zM200 0h4v4h-4zM204 0h4v4h-4zM152 4h4v4h-4zM156 4h4v4h-4zM160 4h4v4h-4zM164 4h4v4h-4zM168 4h4v4h-4zM172 4h4v4h-4zM176 4h4v4h-4zM144 8h4v4h-4zM148 8h4v4h-4zM152 8h4v4h-4zM156 8h4v4h-4zM136 12h4v4h-4zM140 12h4v4h-4zM144 12h4v4h-4zM132 16h4v4h-4zM136 16h4v4h-4zM140 16h4v4h-4zM128 20h4v4h-4zM132 20h4v4h-4zM124 24h4v4h-4zM128 24h4v4h-4zM120 28h4v4h-4zM124 28h4v4h-4zM128 28h4v4h-4zM120 32h4v4h-4zM124 32h4v4h-4zM116 36h4v4h-4zM120 36h4v4h-4zM116 40h4v4h-4zM120 40h4v4h-4zM116 44h4v4h-4zM112 48h4v4h-4zM116 48h4v4h-4zM112 52h4v4h-4zM108 56h4v4h-4zM112 56h4v4h-4zM104 60h4v4h-4zM108 60h4v4h-4zM104 64h4v4h-4zM100 68h4v4h-4zM104 68h4v4h-4zM100 72h4v4h-4zM92 76h4v4h-4zM96 76h4v4h-4zM88 80h4v4h-4zM92 80h4v4h-4zM76 84h4v4h-4zM80 84h4v4h-4zM84 84h4v4h-4zM88 84h4v4h-4zM64 88h4v4h-4zM68 88h4v4h-4zM72 88h4v4h-4zM76 88h4v4h-4zM80 88h4v4h-4zM52 92h4v4h-4zM56 92h4v4h-4zM60 92h4v4h-4zM64 92h4v4h-4zM68 92h4v4h-4zM40 96h4v4h-4zM44 96h4v4h-4zM48 96h4v4h-4zM52 96h4v4h-4zM56 96h4v4h-4zM28 100h4v4h-4zM32 100h4v4h-4zM36 100h4v4h-4zM40 100h4v4h-4zM20 104h4v4h-4zM24 104h4v4h-4zM16 108h4v4h-4zM12 112h4v4h-4zM12 116h4v4h-4zM8 120h4v4h-4zM8 124h4v4h-4zM4 132h4v4h-4zM4 136h4v4h-4zM4 140h4v4h-4zM0 148h4v4h-4zM-12 152h4v4h-4zM-8 152h4v4h-4zM-4 152h4v4h-4zM0 152h4v4h-4zM-12 156h4v4h-4zM-8 156h4v4h-4zM-4 156h4v4h-4zM-12 160h4v4h-4zM-8 160h4v4h-4zM-4 160h4v4h-4z"/><path fill="#070707" d="M232 -12h4v4h-4zM236 -12h4v4h-4zM240 -12h4v4h-4zM244 -12h4v4h-4zM248 -12h4v4h-4zM252 -12h4v4h-4zM256 -12h4v4h-4zM260 -12h4v4h-4zM264 -12h4v4h-4zM268 -12h4v4h-4zM272 -12h4v4h-4zM276 -12h4v4h-4zM280 -12h4v4h-4zM284 -12h4v4h-4zM288 -12h4v4h-4zM292 -12h4v4h-4zM296 -12h4v4h-4zM232 -8h4v4h-4zM236 -8h4v4h-4zM240 -8h4v4h-4zM244 -8h4v4h-4zM248 -8h4v4h-4zM252 -8h4v4h-4zM256 -8h4v4h-4zM260 -8h4v4h-4zM264 -8h4v4h-4zM268 -8h4v4h-4zM272 -8h4v4h-4zM276 -8h4v4h-4zM280 -8h4v4h-4zM284 -8h4v4h-4zM288 -8h4v4h-4zM292 -8h4v4h-4zM296 -8h4v4h-4zM232 -4h4v4h-4zM236 -4h4v4h-4zM240 -4h4v4h-4zM244 -4h4v4h-4zM248 -4h4v4h-4zM252 -4h4v4h-4zM256 -4h4v4h-4zM260 -4h4v4h-4zM264 -4h4v4h-4zM268 -4h4v4h-4zM272 -4h4v4h-4zM276 -4h4v4h-4zM280 -4h4v4h-4zM284 -4h4v4h-4zM288 -4h4v4h-4zM292 -4h4v4h-4zM296 -4h4v4h-4zM208 0h4v4h-4zM212 0h4v4h-4zM216 0h4v4h-4zM220 0h4v4h-4zM224 0h4v4h-4zM228 0h4v4h-4zM232 0h4v4h-4zM236 0h4v4h-4zM240 0h4v4h-4zM244 0h4v4h-4zM248 0h4v4h-4zM252 0h4v4h-4zM256 0h4v4h-4zM180 4h4v4h-4zM184 4h4v4h-4zM188 4h4v4h-4zM192 4h4v4h-4zM196 4h4v4h-4zM200 4h4v4h-4zM204 4h4v4h-4zM208 4h4v4h-4zM212 4h4v4h-4zM160 8h4v4h-4zM164 8h4v4h-4zM168 8h4v4h-4zM172 8h4v4h-4zM176 8h4v4h-4zM180 8h4v4h-4zM184 8h4v4h-4zM148 12h4v4h-4zM152 12h4v4h-4zM156 12h4v4h-4zM160 12h4v4h-4zM164 12h4v4h-4zM144 16h4v4h-4zM148 16h4v4h-4zM152 16h4v4h-4zM136 20h4v4h-4zM140 20h4v4h-4zM144 20h4v4h-4zM132 24h4v4h-4zM136 24h4v4h-4zM140 24h4v4h-4zM132 28h4v4h-4zM136 28h4v4h-4zM128 32h4v4h-4zM132 32h4v4h-4zM124 36h4v4h-4zM128 36h4v4h-4zM124 40h4v4h-4zM128 40h4v4h-4zM120 44h4v4h-4zM124 44h4v4h-4zM120 48h4v4h-4zM124 48h4v4h-4zM116 52h4v4h-4zM120 52h4v4h-4zM116 56h4v4h-4zM112 60h4v4h-4zM116 60h4v4h-4zM108 64h4v4h-4zM112 64h4v4h-4zM108 68h4v4h-4zM104 72h4v4h-4zM108 72h4v4h-4zM100 76h4v4h-4zM104 76h4v4h-4zM96 80h4v4h-4zM100 80h4v4h-4zM92 84h4v4h-4zM96 84h4v4h-4zM84 88h4v4h-4zM88 88h4v4h-4zM92 88h4v4h-4zM72 92h4v4h-4zM76 92h4v4h-4zM80 92h4v4h-4zM84 92h4v4h-4zM88 92h4v4h-4zM60 96h4v4h-4zM64 96h4v4h-4zM68 96h4v4h-4zM72 96h4v4h-4zM76 96h4v4h-4zM80 96h4v4h-4zM44 100h4v4h-4zM48 100h4v4h-4zM52 100h4v4h-4zM56 100h4v4h-4zM60 100h4v4h-4zM64 100h4v4h-4zM28 104h4v4h-4zM32 104h4v4h-4zM36 104h4v4h-4zM40 104h4v4h-4zM20 108h4v4h-4zM24 108h4v4h-4zM16 112h4v4h-4zM20 112h4v4h-4zM16 116h4v4h-4zM12 120h4v4h-4zM12 124h4v4h-4zM8 128h4v4h-4zM8 132h4v4h-4zM8 136h4v4h-4zM4 144h4v4h-4zM4 148h4v4h-4zM4 152h4v4h-4zM0 156h4v4h-4zM0 160h4v4h-4zM-12 164h4v4h-4zM-8 164h4v4h-4zM-4 164h4v4h-4zM0 164h4v4h-4zM-12 168h4v4h-4zM-8 168h4v4h-4zM-4 168h4v4h-4zM-12 172h4v4h-4zM-8 172h4v4h-4zM-4 172h4v4h-4z"/><path fill="#080808" d="M300 -12h4v4h-4zM304 -12h4v4h-4zM308 -12h4v4h-4zM312 -12h4v4h-4zM316 -12h4v4h-4zM300 -8h4v4h-4zM304 -8h4v4h-4zM308 -8h4v4h-4zM312 -8h4v4h-4zM316 -8h4v4h-4zM300 -4h4v4h-4zM304 -4h4v4h-4zM308 -4h4v4h-4zM312 -4h4v4h-4zM316 -4h4v4h-4zM260 0h4v4h-4zM264 0h4v4h-4zM268 0h4v4h-4zM272 0h4v4h-4zM276 0h4v4h-4zM280 0h4v4h-4zM284 0h4v4h-4zM288 0h4v4h-4zM292 0h4v4h-4zM296 0h4v4h-4zM300 0h4v4h-4zM304 0h4v4h-4zM308 0h4v4h-4zM312 0h4v4h-4zM316 0h4v4h-4zM216 4h4v4h-4zM220 4h4v4h-4zM224 4h4v4h-4zM228 4h4v4h-4zM232 4h4v4h-4zM236 4h4v4h-4zM240 4h4v4h-4zM244 4h4v4h-4zM248 4h4v4h-4zM252 4h4v4h-4zM188 8h4v4h-4zM192 8h4v4h-4zM196 8h4v4h-4zM200 8h4v4h-4zM204 8h4v4h-4zM208 8h4v4h-4zM212 8h4v4h-4zM168 12h4v4h-4zM172 12h4v4h-4zM176 12h4v4h-4zM180 12h4v4h-4zM184 12h4v4h-4zM188 12h4v4h-4zM156 16h4v4h-4zM160 16h4v4h-4zM164 16h4v4h-4zM168 16h4v4h-4zM172 16h4v4h-4zM148 20h4v4h-4zM152 20h4v4h-4zM156 20h4v4h-4zM160 20h4v4h-4zM144 24h4v4h-4zM148 24h4v4h-4zM140 28h4v4h-4zM144 28h4v4h-4zM136 32h4v4h-4zM140 32h4v4h-4zM132 36h4v4h-4zM136 36h4v4h-4zM132 40h4v4h-4zM136 40h4v4h-4zM128 44h4v4h-4zM132 44h4v4h-4zM128 48h4v4h-4zM124 52h4v4h-4zM128 52h4v4h-4zM120 56h4v4h-4zM124 56h4v4h-4zM120 60h4v4h-4zM116 64h4v4h-4zM120 64h4v4h-4zM112 68h4v4h-4zM116 68h4v4h-4zM112 72h4v4h-4zM108 76h4v4h-4zM104 80h4v4h-4zM100 84h4v4h-4zM96 88h4v4h-4zM92 92h4v4h-4zM96 92h4v4h-4zM84 96h4v4h-4zM88 96h4v4h-4zM92 96h4v4h-4zM68 100h4v4h-4zM72 100h4v4h-4zM76 100h4v4h-4zM80 100h4v4h-4zM84 100h4v4h-4zM44 104h4v4h-4zM48 104h4v4h-4zM52 104h4v4h-4zM56 104h4v4h-4zM60 104h4v4h-4zM28 108h4v4h-4zM32 108h4v4h-4zM36 108h4v4h-4zM40 108h4v4h-4zM24 112h4v4h-4zM20 116h4v4h-4zM16 120h4v4h-4zM16 124h4v4h-4zM12 128h4v4h-4zM12 132h4v4h-4zM12 136h4v4h-4zM8 140h4v4h-4zM8 144h4v4h-4zM8 148h4v4h-4zM4 156h4v4h-4zM4 160h4v4h-4zM0 168h4v4h-4zM0 172h4v4h-4zM-12 176h4v4h-4zM-8 176h4v4h-4zM-4 176h4v4h-4zM0 176h4v4h-4zM-12 180h4v4h-4zM-8 180h4v4h-4zM-4 180h4v4h-4zM-12 184h4v4h-4zM-8 184h4v4h-4zM-4 184h4v4h-4zM-12 188h4v4h-4zM-8 188h4v4h-4z"/><path fill="#090909" d="M256 4h4v4h-4zM260 4h4v4h-4zM264 4h4v4h-4zM268 4h4v4h-4zM272 4h4v4h-4zM276 4h4v4h-4zM280 4h4v4h-4zM284 4h4v4h-4zM288 4h4v4h-4zM292 4h4v4h-4zM296 4h4v4h-4zM300 4h4v4h-4zM304 4h4v4h-4zM308 4h4v4h-4zM312 4h4v4h-4zM316 4h4v4h-4zM216 8h4v4h-4zM220 8h4v4h-4zM224 8h4v4h-4zM228 8h4v4h-4zM232 8h4v4h-4zM236 8h4v4h-4zM240 8h4v4h-4zM244 8h4v4h-4zM248 8h4v4h-4zM252 8h4v4h-4zM192 12h4v4h-4zM196 12h4v4h-4zM200 12h4v4h-4zM204 12h4v4h-4zM208 12h4v4h-4zM212 12h4v4h-4zM216 12h4v4h-4zM176 16h4v4h-4zM180 16h4v4h-4zM184 16h4v4h-4zM188 16h4v4h-4zM192 16h4v4h-4zM164 20h4v4h-4zM168 20h4v4h-4zM172 20h4v4h-4zM176 20h4v4h-4zM152 24h4v4h-4zM156 24h4v4h-4zM160 24h4v4h-4zM164 24h4v4h-4zM148 28h4v4h-4zM152 28h4v4h-4zM156 28h4v4h-4zM144 32h4v4h-4zM148 32h4v4h-4zM140 36h4v4h-4zM144 36h4v4h-4zM140 40h4v4h-4zM136 44h4v4h-4zM140 44h4v4h-4zM132 48h4v4h-4zM136 48h4v4h-4zM132 52h4v4h-4zM128 56h4v4h-4zM132 56h4v4h-4zM124 60h4v4h-4zM128 60h4v4h-4zM124 64h4v4h-4zM120 68h4v4h-4zM124 68h4v4h-4zM116 72h4v4h-4zM120 72h4v4h-4zM112 76h4v4h-4zM116 76h4v4h-4zM108 80h4v4h-4zM112 80h4v4h-4zM104 84h4v4h-4zM108 84h4v4h-4zM100 88h4v4h-4zM104 88h4v4h-4zM100 92h4v4h-4zM96 96h4v4h-4zM88 100h4v4h-4zM92 100h4v4h-4zM64 104h4v4h-4zM68 104h4v4h-4zM72 104h4v4h-4zM76 104h4v4h-4zM80 104h4v4h-4zM84 104h4v4h-4zM44 108h4v4h-4zM48 108h4v4h-4zM52 108h4v4h-4zM56 108h4v4h-4zM60 108h4v4h-4zM28 112h4v4h-4zM32 112h4v4h-4zM36 112h4v4h-4zM40 112h4v4h-4zM24 116h4v4h-4zM20 120h4v4h-4zM20 124h4v4h-4zM16 128h4v4h-4zM16 132h4v4h-4zM16 136h4v4h-4zM12 140h4v4h-4zM12 144h4v4h-4zM8 152h4v4h-4zM8 156h4v4h-4zM8 160h4v4h-4zM4 164h4v4h-4zM4 168h4v4h-4zM4 172h4v4h-4zM4 176h4v4h-4zM0 180h4v4h-4zM0 184h4v4h-4zM-4 188h4v4h-4zM0 188h4v4h-4zM-12 192h4v4h-4zM-8 192h4v4h-4zM-4 192h4v4h-4zM-12 196h4v4h-4zM-8 196h4v4h-4zM-4 196h4v4h-4zM-12 200h4v4h-4zM-8 200h4v4h-4zM-4 200h4v4h-4z"/><path fill="#0a0a0a" d="M256 8h4v4h-4zM260 8h4v4h-4zM264 8h4v4h-4zM268 8h4v4h-4zM272 8h4v4h-4zM276 8h4v4h-4zM280 8h4v4h-4zM284 8h4v4h-4zM288 8h4v4h-4zM292 8h4v4h-4zM296 8h4v4h-4zM300 8h4v4h-4zM304 8h4v4h-4zM308 8h4v4h-4zM312 8h4v4h-4zM316 8h4v4h-4zM220 12h4v4h-4zM224 12h4v4h-4zM228 12h4v4h-4zM232 12h4v4h-4zM236 12h4v4h-4zM240 12h4v4h-4zM244 12h4v4h-4zM248 12h4v4h-4zM252 12h4v4h-4zM196 16h4v4h-4zM200 16h4v4h-4zM204 16h4v4h-4zM208 16h4v4h-4zM212 16h4v4h-4zM216 16h4v4h-4zM220 16h4v4h-4zM180 20h4v4h-4zM184 20h4v4h-4zM188 20h4v4h-4zM192 20h4v4h-4zM196 20h4v4h-4zM168 24h4v4h-4zM172 24h4v4h-4zM176 24h4v4h-4zM180 24h4v4h-4zM160 28h4v4h-4zM164 28h4v4h-4zM168 28h4v4h-4zM152 32h4v4h-4zM156 32h4v4h-4zM160 32h4v4h-4zM148 36h4v4h-4zM152 36h4v4h-4zM156 36h4v4h-4zM144 40h4v4h-4zM148 40h4v4h-4zM144 44h4v4h-4zM140 48h4v4h-4zM144 48h4v4h-4zM136 52h4v4h-4zM140 52h4v4h-4zM136 56h4v4h-4zM132 60h4v4h-4zM136 60h4v4h-4zM128 64h4v4h-4zM132 64h4v4h-4zM128 68h4v4h-4zM124 72h4v4h-4zM120 76h4v4h-4zM124 76h4v4h-4zM116 80h4v4h-4zM112 84h4v4h-4zM108 88h4v4h-4zM104 92h4v4h-4zM100 96h4v4h-4zM96 100h4v4h-4zM88 104h4v4h-4zM92 104h4v4h-4zM64 108h4v4h-4zM68 108h4v4h-4zM72 108h4v4h-4zM76 108h4v4h-4zM80 108h4v4h-4zM84 108h4v4h-4zM88 108h4v4h-4zM44 112h4v4h-4zM48 112h4v4h-4zM52 112h4v4h-4zM56 112h4v4h-4zM60 112h4v4h-4zM28 116h4v4h-4zM32 116h4v4h-4zM36 116h4v4h-4zM40 116h4v4h-4zM24 120h4v4h-4zM28 120h4v4h-4zM24 124h4v4h-4zM20 128h4v4h-4zM20 132h4v4h-4zM20 136h4v4h-4zM16 140h4v4h-4zM16 144h4v4h-4zM12 148h4v4h-4zM12 152h4v4h-4zM12 156h4v4h-4zM8 164h4v4h-4zM8 168h4v4h-4zM8 172h4v4h-4zM4 180h4v4h-4zM4 184h4v4h-4zM4 188h4v4h-4zM0 192h4v4h-4zM0 196h4v4h-4zM0 200h4v4h-4zM-12 204h4v4h-4zM-8 204h4v4h-4zM-4 204h4v4h-4zM-12 208h4v4h-4zM-8 208h4v4h-4zM-4 208h4v4h-4zM-12 212h4v4h-4zM-8 212h4v4h-4zM-4 212h4v4h-4z"/><path fill="#0b0b0b" d="M256 12h4v4h-4zM260 12h4v4h-4zM264 12h4v4h-4zM268 12h4v4h-4zM272 12h4v4h-4zM276 12h4v4h-4zM280 12h4v4h-4zM284 12h4v4h-4zM288 12h4v4h-4zM292 12h4v4h-4zM296 12h4v4h-4zM224 16h4v4h-4zM228 16h4v4h-4zM232 16h4v4h-4zM236 16h4v4h-4zM240 16h4v4h-4zM244 16h4v4h-4zM248 16h4v4h-4zM200 20h4v4h-4zM204 20h4v4h-4zM208 20h4v4h-4zM212 20h4v4h-4zM216 20h4v4h-4zM220 20h4v4h-4zM184 24h4v4h-4zM188 24h4v4h-4zM192 24h4v4h-4zM196 24h4v4h-4zM200 24h4v4h-4zM172 28h4v4h-4zM176 28h4v4h-4zM180 28h4v4h-4zM184 28h4v4h-4zM164 32h4v4h-4zM168 32h4v4h-4zM172 32h4v4h-4zM160 36h4v4h-4zM164 36h4v4h-4zM152 40h4v4h-4zM156 40h4v4h-4zM160 40h4v4h-4zM148 44h4v4h-4zM152 44h4v4h-4zM148 48h4v4h-4zM144 52h4v4h-4zM148 52h4v4h-4zM140 56h4v4h-4zM144 56h4v4h-4zM140 60h4v4h-4zM136 64h4v4h-4zM132 68h4v4h-4zM136 68h4v4h-4zM128 72h4v4h-4zM132 72h4v4h-4zM128 76h4v4h-4zM120 80h4v4h-4zM124 80h4v4h-4zM116 84h4v4h-4zM120 84h4v4h-4zM112 88h4v4h-4zM108 92h4v4h-4zM104 96h4v4h-4zM100 100h4v4h-4zM96 104h4v4h-4zM92 108h4v4h-4zM96 108h4v4h-4zM64 112h4v4h-4zM68 112h4v4h-4zM72 112h4v4h-4zM76 112h4v4h-4zM80 112h4v4h-4zM84 112h4v4h-4zM88 112h4v4h-4zM44 116h4v4h-4zM48 116h4v4h-4zM52 116h4v4h-4zM56 116h4v4h-4zM32 120h4v4h-4zM36 120h4v4h-4zM40 120h4v4h-4zM28 124h4v4h-4zM32 124h4v4h-4zM24 128h4v4h-4zM28 128h4v4h-4zM24 132h4v4h-4zM24 136h4v4h-4zM20 140h4v4h-4zM20 144h4v4h-4zM16 148h4v4h-4zM16 152h4v4h-4zM12 160h4v4h-4zM12 164h4v4h-4zM12 168h4v4h-4zM8 176h4v4h-4zM8 180h4v4h-4zM8 184h4v4h-4zM4 192h4v4h-4zM4 196h4v4h-4zM0 204h4v4h-4zM0 208h4v4h-4zM0 212h4v4h-4zM-12 216h4v4h-4zM-8 216h4v4h-4zM-4 216h4v4h-4zM0 216h4v4h-4zM-12 220h4v4h-4zM-8 220h4v4h-4zM-4 220h4v4h-4zM-12 224h4v4h-4zM-8 224h4v4h-4zM-4 224h4v4h-4zM-12 228h4v4h-4zM-8 228h4v4h-4zM-4 228h4v4h-4zM-12 232h4v4h-4zM-8 232h4v4h-4zM-4 232h4v4h-4z"/><path fill="#0c0c0c" d="M300 12h4v4h-4zM304 12h4v4h-4zM308 12h4v4h-4zM312 12h4v4h-4zM316 12h4v4h-4zM252 16h4v4h-4zM256 16h4v4h-4zM260 16h4v4h-4zM264 16h4v4h-4zM268 16h4v4h-4zM272 16h4v4h-4zM276 16h4v4h-4zM280 16h4v4h-4zM284 16h4v4h-4zM288 16h4v4h-4zM224 20h4v4h-4zM228 20h4v4h-4zM232 20h4v4h-4zM236 20h4v4h-4zM240 20h4v4h-4zM244 20h4v4h-4zM248 20h4v4h-4zM204 24h4v4h-4zM208 24h4v4h-4zM212 24h4v4h-4zM216 24h4v4h-4zM220 24h4v4h-4zM188 28h4v4h-4zM192 28h4v4h-4zM196 28h4v4h-4zM200 28h4v4h-4zM176 32h4v4h-4zM180 32h4v4h-4zM184 32h4v4h-4zM188 32h4v4h-4zM168 36h4v4h-4zM172 36h4v4h-4zM176 36h4v4h-4zM164 40h4v4h-4zM168 40h4v4h-4zM156 44h4v4h-4zM160 44h4v4h-4zM164 44h4v4h-4zM152 48h4v4h-4zM156 48h4v4h-4zM152 52h4v4h-4zM148 56h4v4h-4zM144 60h4v4h-4zM148 60h4v4h-4zM140 64h4v4h-4zM144 64h4v4h-4zM140 68h4v4h-4zM136 72h4v4h-4zM140 72h4v4h-4zM132 76h4v4h-4zM136 76h4v4h-4zM128 80h4v4h-4zM124 84h4v4h-4zM116 88h4v4h-4zM120 88h4v4h-4zM112 92h4v4h-4zM116 92h4v4h-4zM108 96h4v4h-4zM112 96h4v4h-4zM104 100h4v4h-4zM100 104h4v4h-4zM92 112h4v4h-4zM96 112h4v4h-4zM60 116h4v4h-4zM64 116h4v4h-4zM68 116h4v4h-4zM72 116h4v4h-4zM76 116h4v4h-4zM80 116h4v4h-4zM84 116h4v4h-4zM88 116h4v4h-4zM44 120h4v4h-4zM48 120h4v4h-4zM52 120h4v4h-4zM56 120h4v4h-4zM36 124h4v4h-4zM40 124h4v4h-4zM44 124h4v4h-4zM32 128h4v4h-4zM36 128h4v4h-4zM40 128h4v4h-4zM28 132h4v4h-4zM32 132h4v4h-4zM28 136h4v4h-4zM24 140h4v4h-4zM24 144h4v4h-4zM20 148h4v4h-4zM20 152h4v4h-4zM16 156h4v4h-4zM16 160h4v4h-4zM16 164h4v4h-4zM12 172h4v4h-4zM12 176h4v4h-4zM12 180h4v4h-4zM8 188h4v4h-4zM8 192h4v4h-4zM4 200h4v4h-4zM4 204h4v4h-4zM4 208h4v4h-4zM0 220h4v4h-4zM0 224h4v4h-4zM0 228h4v4h-4zM0 232h4v4h-4zM-12 236h4v4h-4zM-8 236h4v4h-4zM-4 236h4v4h-4zM-12 240h4v4h-4zM-8 240h4v4h-4zM-4 240h4v4h-4zM-12 244h4v4h-4zM-8 244h4v4h-4zM-4 244h4v4h-4zM-12 248h4v4h-4zM-8 248h4v4h-4zM-4 248h4v4h-4zM-12 252h4v4h-4zM-8 252h4v4h-4zM-4 252h4v4h-4z"/><path fill="#0d0d0d" d="M292 16h4v4h-4zM296 16h4v4h-4zM300 16h4v4h-4zM304 16h4v4h-4zM308 16h4v4h-4zM312 16h4v4h-4zM316 16h4v4h-4zM252 20h4v4h-4zM256 20h4v4h-4zM260 20h4v4h-4zM264 20h4v4h-4zM268 20h4v4h-4zM272 20h4v4h-4zM276 20h4v4h-4zM280 20h4v4h-4zM284 20h4v4h-4zM224 24h4v4h-4zM228 24h4v4h-4zM232 24h4v4h-4zM236 24h4v4h-4zM240 24h4v4h-4zM244 24h4v4h-4zM248 24h4v4h-4zM204 28h4v4h-4zM208 28h4v4h-4zM212 28h4v4h-4zM216 28h4v4h-4zM220 28h4v4h-4zM192 32h4v4h-4zM196 32h4v4h-4zM200 32h4v4h-4zM180 36h4v4h-4zM184 36h4v4h-4zM188 36h4v4h-4zM172 40h4v4h-4zM176 40h4v4h-4zM180 40h4v4h-4zM168 44h4v4h-4zM172 44h4v4h-4zM160 48h4v4h-4zM164 48h4v4h-4zM168 48h4v4h-4zM156 52h4v4h-4zM160 52h4v4h-4zM152 56h4v4h-4zM156 56h4v4h-4zM152 60h4v4h-4zM148 64h4v4h-4zM152 64h4v4h-4zM144 68h4v4h-4zM148 68h4v4h-4zM144 72h4v4h-4zM140 76h4v4h-4zM132 80h4v4h-4zM136 80h4v4h-4zM128 84h4v4h-4zM124 88h4v4h-4zM120 92h4v4h-4zM116 96h4v4h-4zM108 100h4v4h-4zM112 100h4v4h-4zM104 104h4v4h-4zM100 108h4v4h-4zM92 116h4v4h-4zM96 116h4v4h-4zM60 120h4v4h-4zM64 120h4v4h-4zM68 120h4v4h-4zM72 120h4v4h-4zM76 120h4v4h-4zM80 120h4v4h-4zM84 120h4v4h-4zM88 120h4v4h-4zM48 124h4v4h-4zM52 124h4v4h-4zM56 124h4v4h-4zM60 124h4v4h-4zM64 124h4v4h-4zM68 124h4v4h-4zM44 128h4v4h-4zM48 128h4v4h-4zM36 132h4v4h-4zM40 132h4v4h-4zM44 132h4v4h-4zM32 136h4v4h-4zM36 136h4v4h-4zM40 136h4v4h-4zM28 140h4v4h-4zM32 140h4v4h-4zM36 140h4v4h-4zM28 144h4v4h-4zM24 148h4v4h-4zM28 148h4v4h-4zM24 152h4v4h-4zM20 156h4v4h-4zM20 160h4v4h-4zM20 164h4v4h-4zM16 168h4v4h-4zM16 172h4v4h-4zM16 176h4v4h-4zM16 180h4v4h-4zM12 184h4v4h-4zM16 184h4v4h-4zM12 188h4v4h-4zM8 196h4v4h-4zM8 200h4v4h-4zM4 212h4v4h-4zM4 216h4v4h-4zM4 220h4v4h-4zM0 236h4v4h-4zM0 240h4v4h-4zM0 244h4v4h-4zM0 248h4v4h-4zM0 252h4v4h-4z"/><path fill="#0e0e0e" d="M288 20h4v4h-4zM292 20h4v4h-4zM296 20h4v4h-4zM300 20h4v4h-4zM304 20h4v4h-4zM308 20h4v4h-4zM312 20h4v4h-4zM316 20h4v4h-4zM252 24h4v4h-4zM256 24h4v4h-4zM260 24h4v4h-4zM264 24h4v4h-4zM268 24h4v4h-4zM272 24h4v4h-4zM276 24h4v4h-4zM224 28h4v4h-4zM228 28h4v4h-4zM232 28h4v4h-4zM236 28h4v4h-4zM240 28h4v4h-4zM204 32h4v4h-4zM208 32h4v4h-4zM212 32h4v4h-4zM216 32h4v4h-4zM192 36h4v4h-4zM196 36h4v4h-4zM200 36h4v4h-4zM184 40h4v4h-4zM188 40h4v4h-4zM192 40h4v4h-4zM176 44h4v4h-4zM180 44h4v4h-4zM172 48h4v4h-4zM176 48h4v4h-4zM164 52h4v4h-4zM168 52h4v4h-4zM160 56h4v4h-4zM164 56h4v4h-4zM156 60h4v4h-4zM160 60h4v4h-4zM156 64h4v4h-4zM152 68h4v4h-4zM148 72h4v4h-4zM152 72h4v4h-4zM144 76h4v4h-4zM148 76h4v4h-4zM140 80h4v4h-4zM132 84h4v4h-4zM136 84h4v4h-4zM128 88h4v4h-4zM132 88h4v4h-4zM124 92h4v4h-4zM120 96h4v4h-4zM116 100h4v4h-4zM108 104h4v4h-4zM112 104h4v4h-4zM104 108h4v4h-4zM100 112h4v4h-4zM92 120h4v4h-4zM96 120h4v4h-4zM72 124h4v4h-4zM76 124h4v4h-4zM80 124h4v4h-4zM84 124h4v4h-4zM88 124h4v4h-4zM52 128h4v4h-4zM56 128h4v4h-4zM60 128h4v4h-4zM64 128h4v4h-4zM68 128h4v4h-4zM72 128h4v4h-4zM48 132h4v4h-4zM52 132h4v4h-4zM56 132h4v4h-4zM44 136h4v4h-4zM48 136h4v4h-4zM40 140h4v4h-4zM44 140h4v4h-4zM32 144h4v4h-4zM36 144h4v4h-4zM32 148h4v4h-4zM28 152h4v4h-4zM24 156h4v4h-4zM28 156h4v4h-4zM24 160h4v4h-4zM20 168h4v4h-4zM20 172h4v4h-4zM20 176h4v4h-4zM20 180h4v4h-4zM20 184h4v4h-4zM16 188h4v4h-4zM12 192h4v4h-4zM12 196h4v4h-4zM8 204h4v4h-4zM8 208h4v4h-4zM8 212h4v4h-4zM4 224h4v4h-4zM4 228h4v4h-4zM4 232h4v4h-4z"/><path fill="#0f0f0f" d="M280 24h4v4h-4zM284 24h4v4h-4zM288 24h4v4h-4zM292 24h4v4h-4zM296 24h4v4h-4zM300 24h4v4h-4zM304 24h4v4h-4zM308 24h4v4h-4zM312 24h4v4h-4zM316 24h4v4h-4zM244 28h4v4h-4zM248 28h4v4h-4zM252 28h4v4h-4zM256 28h4v4h-4zM260 28h4v4h-4zM264 28h4v4h-4zM220 32h4v4h-4zM224 32h4v4h-4zM228 32h4v4h-4zM232 32h4v4h-4zM204 36h4v4h-4zM208 36h4v4h-4zM212 36h4v4h-4zM196 40h4v4h-4zM200 40h4v4h-4zM184 44h4v4h-4zM188 44h4v4h-4zM192 44h4v4h-4zM180 48h4v4h-4zM184 48h4v4h-4zM172 52h4v4h-4zM176 52h4v4h-4zM168 56h4v4h-4zM172 56h4v4h-4zM164 60h4v4h-4zM168 60h4v4h-4zM160 64h4v4h-4zM164 64h4v4h-4zM156 68h4v4h-4zM160 68h4v4h-4zM156 72h4v4h-4zM152 76h4v4h-4zM144 80h4v4h-4zM148 80h4v4h-4zM140 84h4v4h-4zM136 88h4v4h-4zM128 92h4v4h-4zM132 92h4v4h-4zM124 96h4v4h-4zM120 100h4v4h-4zM116 104h4v4h-4zM108 108h4v4h-4zM104 112h4v4h-4zM100 116h4v4h-4zM92 124h4v4h-4zM96 124h4v4h-4zM76 128h4v4h-4zM80 128h4v4h-4zM84 128h4v4h-4zM88 128h4v4h-4zM92 128h4v4h-4zM60 132h4v4h-4zM64 132h4v4h-4zM68 132h4v4h-4zM72 132h4v4h-4zM76 132h4v4h-4zM52 136h4v4h-4zM56 136h4v4h-4zM60 136h4v4h-4zM48 140h4v4h-4zM52 140h4v4h-4zM40 144h4v4h-4zM44 144h4v4h-4zM36 148h4v4h-4zM40 148h4v4h-4zM32 152h4v4h-4zM36 152h4v4h-4zM32 156h4v4h-4zM28 160h4v4h-4zM24 164h4v4h-4zM28 164h4v4h-4zM24 168h4v4h-4zM28 168h4v4h-4zM24 172h4v4h-4zM24 176h4v4h-4zM24 180h4v4h-4zM24 184h4v4h-4zM20 188h4v4h-4zM16 192h4v4h-4zM16 196h4v4h-4zM12 200h4v4h-4zM12 204h4v4h-4zM8 216h4v4h-4zM8 220h4v4h-4zM4 236h4v4h-4zM4 240h4v4h-4zM4 244h4v4h-4zM4 248h4v4h-4zM4 252h4v4h-4z"/><path fill="#101010" d="M268 28h4v4h-4zM272 28h4v4h-4zM276 28h4v4h-4zM280 28h4v4h-4zM284 28h4v4h-4zM288 28h4v4h-4zM292 28h4v4h-4zM296 28h4v4h-4zM236 32h4v4h-4zM240 32h4v4h-4zM244 32h4v4h-4zM248 32h4v4h-4zM252 32h4v4h-4zM216 36h4v4h-4zM220 36h4v4h-4zM224 36h4v4h-4zM228 36h4v4h-4zM204 40h4v4h-4zM208 40h4v4h-4zM212 40h4v4h-4zM196 44h4v4h-4zM200 44h4v4h-4zM188 48h4v4h-4zM192 48h4v4h-4zM180 52h4v4h-4zM184 52h4v4h-4zM176 56h4v4h-4zM180 56h4v4h-4zM172 60h4v4h-4zM168 64h4v4h-4zM164 68h4v4h-4zM160 72h4v4h-4zM156 76h4v4h-4zM152 80h4v4h-4zM144 84h4v4h-4zM148 84h4v4h-4zM140 88h4v4h-4zM136 92h4v4h-4zM128 96h4v4h-4zM132 96h4v4h-4zM124 100h4v4h-4zM120 104h4v4h-4zM112 108h4v4h-4zM108 112h4v4h-4zM104 116h4v4h-4zM100 120h4v4h-4zM96 128h4v4h-4zM80 132h4v4h-4zM84 132h4v4h-4zM88 132h4v4h-4zM92 132h4v4h-4zM64 136h4v4h-4zM68 136h4v4h-4zM72 136h4v4h-4zM76 136h4v4h-4zM80 136h4v4h-4zM56 140h4v4h-4zM60 140h4v4h-4zM64 140h4v4h-4zM68 140h4v4h-4zM48 144h4v4h-4zM52 144h4v4h-4zM56 144h4v4h-4zM44 148h4v4h-4zM48 148h4v4h-4zM40 152h4v4h-4zM44 152h4v4h-4zM36 156h4v4h-4zM40 156h4v4h-4zM32 160h4v4h-4zM36 160h4v4h-4zM32 164h4v4h-4zM32 168h4v4h-4zM28 172h4v4h-4zM32 172h4v4h-4zM28 176h4v4h-4zM32 176h4v4h-4zM28 180h4v4h-4zM28 184h4v4h-4zM24 188h4v4h-4zM20 192h4v4h-4zM16 200h4v4h-4zM12 208h4v4h-4zM12 212h4v4h-4zM8 224h4v4h-4zM8 228h4v4h-4zM8 232h4v4h-4z"/><path fill="#111111" d="M300 28h4v4h-4zM304 28h4v4h-4zM308 28h4v4h-4zM312 28h4v4h-4zM316 28h4v4h-4zM256 32h4v4h-4zM260 32h4v4h-4zM264 32h4v4h-4zM268 32h4v4h-4zM272 32h4v4h-4zM276 32h4v4h-4zM232 36h4v4h-4zM236 36h4v4h-4zM240 36h4v4h-4zM244 36h4v4h-4zM216 40h4v4h-4zM220 40h4v4h-4zM224 40h4v4h-4zM204 44h4v4h-4zM208 44h4v4h-4zM212 44h4v4h-4zM196 48h4v4h-4zM200 48h4v4h-4zM188 52h4v4h-4zM192 52h4v4h-4zM184 56h4v4h-4zM176 60h4v4h-4zM180 60h4v4h-4zM172 64h4v4h-4zM176 64h4v4h-4zM168 68h4v4h-4zM172 68h4v4h-4zM164 72h4v4h-4zM168 72h4v4h-4zM160 76h4v4h-4zM164 76h4v4h-4zM156 80h4v4h-4zM152 84h4v4h-4zM144 88h4v4h-4zM148 88h4v4h-4zM140 92h4v4h-4zM136 96h4v4h-4zM128 100h4v4h-4zM132 100h4v4h-4zM124 104h4v4h-4zM116 108h4v4h-4zM112 112h4v4h-4zM108 116h4v4h-4zM104 120h4v4h-4zM100 124h4v4h-4zM96 132h4v4h-4zM84 136h4v4h-4zM88 136h4v4h-4zM92 136h4v4h-4zM72 140h4v4h-4zM76 140h4v4h-4zM80 140h4v4h-4zM84 140h4v4h-4zM60 144h4v4h-4zM64 144h4v4h-4zM68 144h4v4h-4zM72 144h4v4h-4zM52 148h4v4h-4zM56 148h4v4h-4zM60 148h4v4h-4zM64 148h4v4h-4zM48 152h4v4h-4zM52 152h4v4h-4zM56 152h4v4h-4zM44 156h4v4h-4zM48 156h4v4h-4zM40 160h4v4h-4zM44 160h4v4h-4zM36 164h4v4h-4zM40 164h4v4h-4zM36 168h4v4h-4zM40 168h4v4h-4zM36 172h4v4h-4zM36 176h4v4h-4zM32 180h4v4h-4zM36 180h4v4h-4zM32 184h4v4h-4zM28 188h4v4h-4zM24 192h4v4h-4zM20 196h4v4h-4zM20 200h4v4h-4zM16 204h4v4h-4zM16 208h4v4h-4zM12 216h4v4h-4zM12 220h4v4h-4zM12 224h4v4h-4zM8 236h4v4h-4zM8 240h4v4h-4zM8 244h4v4h-4zM8 248h4v4h-4zM8 252h4v4h-4z"/><path fill="#121212" d="M280 32h4v4h-4zM284 32h4v4h-4zM288 32h4v4h-4zM292 32h4v4h-4zM296 32h4v4h-4zM300 32h4v4h-4zM304 32h4v4h-4zM308 32h4v4h-4zM312 32h4v4h-4zM316 32h4v4h-4zM248 36h4v4h-4zM252 36h4v4h-4zM256 36h4v4h-4zM260 36h4v4h-4zM264 36h4v4h-4zM228 40h4v4h-4zM232 40h4v4h-4zM236 40h4v4h-4zM240 40h4v4h-4zM216 44h4v4h-4zM220 44h4v4h-4zM204 48h4v4h-4zM208 48h4v4h-4zM212 48h4v4h-4zM196 52h4v4h-4zM200 52h4v4h-4zM188 56h4v4h-4zM192 56h4v4h-4zM184 60h4v4h-4zM188 60h4v4h-4zM180 64h4v4h-4zM176 68h4v4h-4zM172 72h4v4h-4zM168 76h4v4h-4zM160 80h4v4h-4zM164 80h4v4h-4zM156 84h4v4h-4zM152 88h4v4h-4zM144 92h4v4h-4zM148 92h4v4h-4zM140 96h4v4h-4zM144 96h4v4h-4zM136 100h4v4h-4zM128 104h4v4h-4zM120 108h4v4h-4zM124 108h4v4h-4zM116 112h4v4h-4zM112 116h4v4h-4zM108 120h4v4h-4zM104 124h4v4h-4zM100 128h4v4h-4zM96 136h4v4h-4zM88 140h4v4h-4zM92 140h4v4h-4zM76 144h4v4h-4zM80 144h4v4h-4zM84 144h4v4h-4zM88 144h4v4h-4zM92 144h4v4h-4zM68 148h4v4h-4zM72 148h4v4h-4zM76 148h4v4h-4zM80 148h4v4h-4zM60 152h4v4h-4zM64 152h4v4h-4zM68 152h4v4h-4zM72 152h4v4h-4zM52 156h4v4h-4zM56 156h4v4h-4zM60 156h4v4h-4zM48 160h4v4h-4zM52 160h4v4h-4zM44 164h4v4h-4zM48 164h4v4h-4zM44 168h4v4h-4zM40 172h4v4h-4zM40 176h4v4h-4zM40 180h4v4h-4zM36 184h4v4h-4zM32 188h4v4h-4zM28 192h4v4h-4zM24 196h4v4h-4zM20 204h4v4h-4zM16 212h4v4h-4zM16 216h4v4h-4zM12 228h4v4h-4zM12 232h4v4h-4z"/><path fill="#131313" d="M268 36h4v4h-4zM272 36h4v4h-4zM276 36h4v4h-4zM280 36h4v4h-4zM284 36h4v4h-4zM288 36h4v4h-4zM292 36h4v4h-4zM244 40h4v4h-4zM248 40h4v4h-4zM252 40h4v4h-4zM256 40h4v4h-4zM224 44h4v4h-4zM228 44h4v4h-4zM232 44h4v4h-4zM236 44h4v4h-4zM216 48h4v4h-4zM220 48h4v4h-4zM204 52h4v4h-4zM208 52h4v4h-4zM196 56h4v4h-4zM200 56h4v4h-4zM192 60h4v4h-4zM184 64h4v4h-4zM188 64h4v4h-4zM180 68h4v4h-4zM176 72h4v4h-4zM172 76h4v4h-4zM168 80h4v4h-4zM160 84h4v4h-4zM164 84h4v4h-4zM156 88h4v4h-4zM152 92h4v4h-4zM148 96h4v4h-4zM140 100h4v4h-4zM132 104h4v4h-4zM136 104h4v4h-4zM128 108h4v4h-4zM120 112h4v4h-4zM116 116h4v4h-4zM112 120h4v4h-4zM108 124h4v4h-4zM104 128h4v4h-4zM100 132h4v4h-4zM96 140h4v4h-4zM96 144h4v4h-4zM84 148h4v4h-4zM88 148h4v4h-4zM92 148h4v4h-4zM76 152h4v4h-4zM80 152h4v4h-4zM84 152h4v4h-4zM88 152h4v4h-4zM92 152h4v4h-4zM64 156h4v4h-4zM68 156h4v4h-4zM72 156h4v4h-4zM76 156h4v4h-4zM56 160h4v4h-4zM60 160h4v4h-4zM64 160h4v4h-4zM68 160h4v4h-4zM52 164h4v4h-4zM56 164h4v4h-4zM60 164h4v4h-4zM48 168h4v4h-4zM52 168h4v4h-4zM44 172h4v4h-4zM48 172h4v4h-4zM44 176h4v4h-4zM44 180h4v4h-4zM40 184h4v4h-4zM36 188h4v4h-4zM32 192h4v4h-4zM28 196h4v4h-4zM24 200h4v4h-4zM24 204h4v4h-4zM20 208h4v4h-4zM20 212h4v4h-4zM16 220h4v4h-4zM16 224h4v4h-4zM12 236h4v4h-4zM12 240h4v4h-4zM12 244h4v4h-4zM12 248h4v4h-4zM12 252h4v4h-4z"/><path fill="#141414" d="M296 36h4v4h-4zM300 36h4v4h-4zM304 36h4v4h-4zM308 36h4v4h-4zM312 36h4v4h-4zM316 36h4v4h-4zM260 40h4v4h-4zM264 40h4v4h-4zM268 40h4v4h-4zM272 40h4v4h-4zM276 40h4v4h-4zM240 44h4v4h-4zM244 44h4v4h-4zM248 44h4v4h-4zM224 48h4v4h-4zM228 48h4v4h-4zM232 48h4v4h-4zM212 52h4v4h-4zM216 52h4v4h-4zM220 52h4v4h-4zM204 56h4v4h-4zM208 56h4v4h-4zM196 60h4v4h-4zM200 60h4v4h-4zM192 64h4v4h-4zM184 68h4v4h-4zM188 68h4v4h-4zM180 72h4v4h-4zM184 72h4v4h-4zM176 76h4v4h-4zM180 76h4v4h-4zM172 80h4v4h-4zM168 84h4v4h-4zM160 88h4v4h-4zM164 88h4v4h-4zM156 92h4v4h-4zM152 96h4v4h-4zM144 100h4v4h-4zM148 100h4v4h-4zM140 104h4v4h-4zM132 108h4v4h-4zM124 112h4v4h-4zM120 116h4v4h-4zM116 120h4v4h-4zM112 124h4v4h-4zM108 128h4v4h-4zM104 132h4v4h-4zM100 136h4v4h-4zM100 140h4v4h-4zM96 148h4v4h-4zM96 152h4v4h-4zM80 156h4v4h-4zM84 156h4v4h-4zM88 156h4v4h-4zM92 156h4v4h-4zM72 160h4v4h-4zM76 160h4v4h-4zM80 160h4v4h-4zM84 160h4v4h-4zM88 160h4v4h-4zM92 160h4v4h-4zM64 164h4v4h-4zM68 164h4v4h-4zM72 164h4v4h-4zM76 164h4v4h-4zM56 168h4v4h-4zM60 168h4v4h-4zM64 168h4v4h-4zM52 172h4v4h-4zM56 172h4v4h-4zM48 176h4v4h-4zM52 176h4v4h-4zM48 180h4v4h-4zM44 184h4v4h-4zM40 188h4v4h-4zM36 192h4v4h-4zM32 196h4v4h-4zM28 200h4v4h-4zM24 208h4v4h-4zM20 216h4v4h-4zM20 220h4v4h-4zM16 228h4v4h-4zM16 232h4v4h-4zM16 236h4v4h-4z"/><path fill="#151515" d="M280 40h4v4h-4zM284 40h4v4h-4zM288 40h4v4h-4zM292 40h4v4h-4zM296 40h4v4h-4zM300 40h4v4h-4zM304 40h4v4h-4zM308 40h4v4h-4zM312 40h4v4h-4zM316 40h4v4h-4zM252 44h4v4h-4zM256 44h4v4h-4zM260 44h4v4h-4zM264 44h4v4h-4zM236 48h4v4h-4zM240 48h4v4h-4zM244 48h4v4h-4zM224 52h4v4h-4zM228 52h4v4h-4zM212 56h4v4h-4zM216 56h4v4h-4zM204 60h4v4h-4zM208 60h4v4h-4zM196 64h4v4h-4zM200 64h4v4h-4zM192 68h4v4h-4zM188 72h4v4h-4zM184 76h4v4h-4zM176 80h4v4h-4zM180 80h4v4h-4zM172 84h4v4h-4zM168 88h4v4h-4zM160 92h4v4h-4zM164 92h4v4h-4zM156 96h4v4h-4zM152 100h4v4h-4zM144 104h4v4h-4zM136 108h4v4h-4zM128 112h4v4h-4zM132 112h4v4h-4zM124 116h4v4h-4zM120 120h4v4h-4zM108 132h4v4h-4zM104 136h4v4h-4zM100 144h4v4h-4zM96 156h4v4h-4zM96 160h4v4h-4zM80 164h4v4h-4zM84 164h4v4h-4zM88 164h4v4h-4zM92 164h4v4h-4zM68 168h4v4h-4zM72 168h4v4h-4zM76 168h4v4h-4zM80 168h4v4h-4zM84 168h4v4h-4zM88 168h4v4h-4zM60 172h4v4h-4zM64 172h4v4h-4zM68 172h4v4h-4zM72 172h4v4h-4zM56 176h4v4h-4zM60 176h4v4h-4zM64 176h4v4h-4zM52 180h4v4h-4zM56 180h4v4h-4zM48 184h4v4h-4zM44 188h4v4h-4zM40 192h4v4h-4zM36 196h4v4h-4zM32 200h4v4h-4zM28 204h4v4h-4zM28 208h4v4h-4zM24 212h4v4h-4zM24 216h4v4h-4zM20 224h4v4h-4zM20 228h4v4h-4zM16 240h4v4h-4zM16 244h4v4h-4zM16 248h4v4h-4zM16 252h4v4h-4z"/><path fill="#161616" d="M268 44h4v4h-4zM272 44h4v4h-4zM276 44h4v4h-4zM280 44h4v4h-4zM284 44h4v4h-4zM288 44h4v4h-4zM248 48h4v4h-4zM252 48h4v4h-4zM256 48h4v4h-4zM232 52h4v4h-4zM236 52h4v4h-4zM240 52h4v4h-4zM220 56h4v4h-4zM224 56h4v4h-4zM212 60h4v4h-4zM216 60h4v4h-4zM204 64h4v4h-4zM208 64h4v4h-4zM196 68h4v4h-4zM200 68h4v4h-4zM192 72h4v4h-4zM188 76h4v4h-4zM184 80h4v4h-4zM176 84h4v4h-4zM180 84h4v4h-4zM172 88h4v4h-4zM168 92h4v4h-4zM160 96h4v4h-4zM164 96h4v4h-4zM156 100h4v4h-4zM148 104h4v4h-4zM152 104h4v4h-4zM140 108h4v4h-4zM144 108h4v4h-4zM136 112h4v4h-4zM128 116h4v4h-4zM124 120h4v4h-4zM116 124h4v4h-4zM112 128h4v4h-4zM104 140h4v4h-4zM100 148h4v4h-4zM100 152h4v4h-4zM96 164h4v4h-4zM92 168h4v4h-4zM76 172h4v4h-4zM80 172h4v4h-4zM84 172h4v4h-4zM88 172h4v4h-4zM68 176h4v4h-4zM72 176h4v4h-4zM76 176h4v4h-4zM80 176h4v4h-4zM84 176h4v4h-4zM88 176h4v4h-4zM60 180h4v4h-4zM64 180h4v4h-4zM68 180h4v4h-4zM84 180h4v4h-4zM52 184h4v4h-4zM56 184h4v4h-4zM60 184h4v4h-4zM48 188h4v4h-4zM44 192h4v4h-4zM40 196h4v4h-4zM36 200h4v4h-4zM32 204h4v4h-4zM32 208h4v4h-4zM28 212h4v4h-4zM24 220h4v4h-4zM24 224h4v4h-4zM20 232h4v4h-4zM20 236h4v4h-4z"/><path fill="#171717" d="M292 44h4v4h-4zM296 44h4v4h-4zM300 44h4v4h-4zM304 44h4v4h-4zM308 44h4v4h-4zM312 44h4v4h-4zM316 44h4v4h-4zM260 48h4v4h-4zM264 48h4v4h-4zM268 48h4v4h-4zM272 48h4v4h-4zM276 48h4v4h-4zM244 52h4v4h-4zM248 52h4v4h-4zM252 52h4v4h-4zM228 56h4v4h-4zM232 56h4v4h-4zM236 56h4v4h-4zM220 60h4v4h-4zM212 64h4v4h-4zM204 68h4v4h-4zM196 72h4v4h-4zM200 72h4v4h-4zM192 76h4v4h-4zM188 80h4v4h-4zM184 84h4v4h-4zM176 88h4v4h-4zM180 88h4v4h-4zM172 92h4v4h-4zM168 96h4v4h-4zM160 100h4v4h-4zM164 100h4v4h-4zM156 104h4v4h-4zM148 108h4v4h-4zM140 112h4v4h-4zM132 116h4v4h-4zM128 120h4v4h-4zM120 124h4v4h-4zM116 128h4v4h-4zM112 132h4v4h-4zM108 136h4v4h-4zM104 144h4v4h-4zM100 156h4v4h-4zM100 160h4v4h-4zM96 168h4v4h-4zM92 172h4v4h-4zM72 180h4v4h-4zM76 180h4v4h-4zM80 180h4v4h-4zM88 180h4v4h-4zM64 184h4v4h-4zM68 184h4v4h-4zM72 184h4v4h-4zM84 184h4v4h-4zM88 184h4v4h-4zM52 188h4v4h-4zM56 188h4v4h-4zM60 188h4v4h-4zM48 192h4v4h-4zM44 196h4v4h-4zM40 200h4v4h-4zM36 204h4v4h-4zM36 208h4v4h-4zM32 212h4v4h-4zM28 216h4v4h-4zM28 220h4v4h-4zM24 228h4v4h-4zM24 232h4v4h-4zM20 240h4v4h-4zM20 244h4v4h-4zM20 248h4v4h-4zM20 252h4v4h-4z"/><path fill="#181818" d="M280 48h4v4h-4zM284 48h4v4h-4zM288 48h4v4h-4zM292 48h4v4h-4zM296 48h4v4h-4zM256 52h4v4h-4zM260 52h4v4h-4zM264 52h4v4h-4zM240 56h4v4h-4zM244 56h4v4h-4zM224 60h4v4h-4zM228 60h4v4h-4zM232 60h4v4h-4zM216 64h4v4h-4zM220 64h4v4h-4zM208 68h4v4h-4zM212 68h4v4h-4zM204 72h4v4h-4zM196 76h4v4h-4zM200 76h4v4h-4zM192 80h4v4h-4zM188 84h4v4h-4zM184 88h4v4h-4zM176 92h4v4h-4zM180 92h4v4h-4zM172 96h4v4h-4zM168 100h4v4h-4zM160 104h4v4h-4zM152 108h4v4h-4zM144 112h4v4h-4zM148 112h4v4h-4zM136 116h4v4h-4zM140 116h4v4h-4zM132 120h4v4h-4zM124 124h4v4h-4zM120 128h4v4h-4zM116 132h4v4h-4zM112 136h4v4h-4zM108 140h4v4h-4zM104 148h4v4h-4zM104 152h4v4h-4zM100 164h4v4h-4zM96 172h4v4h-4zM92 176h4v4h-4zM92 180h4v4h-4zM76 184h4v4h-4zM80 184h4v4h-4zM64 188h4v4h-4zM68 188h4v4h-4zM84 188h4v4h-4zM88 188h4v4h-4zM52 192h4v4h-4zM56 192h4v4h-4zM48 196h4v4h-4zM44 200h4v4h-4zM40 204h4v4h-4zM36 212h4v4h-4zM32 216h4v4h-4zM32 220h4v4h-4zM28 224h4v4h-4zM28 228h4v4h-4zM24 236h4v4h-4zM24 240h4v4h-4zM24 244h4v4h-4zM24 248h4v4h-4zM24 252h4v4h-4z"/><path fill="#191919" d="M300 48h4v4h-4zM304 48h4v4h-4zM308 48h4v4h-4zM312 48h4v4h-4zM316 48h4v4h-4zM268 52h4v4h-4zM272 52h4v4h-4zM276 52h4v4h-4zM280 52h4v4h-4zM284 52h4v4h-4zM248 56h4v4h-4zM252 56h4v4h-4zM256 56h4v4h-4zM236 60h4v4h-4zM240 60h4v4h-4zM224 64h4v4h-4zM228 64h4v4h-4zM216 68h4v4h-4zM220 68h4v4h-4zM208 72h4v4h-4zM212 72h4v4h-4zM204 76h4v4h-4zM196 80h4v4h-4zM200 80h4v4h-4zM192 84h4v4h-4zM188 88h4v4h-4zM184 92h4v4h-4zM176 96h4v4h-4zM180 96h4v4h-4zM172 100h4v4h-4zM164 104h4v4h-4zM156 108h4v4h-4zM160 108h4v4h-4zM152 112h4v4h-4zM144 116h4v4h-4zM136 120h4v4h-4zM128 124h4v4h-4zM124 128h4v4h-4zM120 132h4v4h-4zM116 136h4v4h-4zM112 140h4v4h-4zM108 144h4v4h-4zM104 156h4v4h-4zM100 168h4v4h-4zM96 176h4v4h-4zM92 184h4v4h-4zM72 188h4v4h-4zM76 188h4v4h-4zM80 188h4v4h-4zM60 192h4v4h-4zM64 192h4v4h-4zM68 192h4v4h-4zM84 192h4v4h-4zM88 192h4v4h-4zM52 196h4v4h-4zM56 196h4v4h-4zM48 200h4v4h-4zM44 204h4v4h-4zM40 208h4v4h-4zM40 212h4v4h-4zM36 216h4v4h-4zM36 220h4v4h-4zM32 224h4v4h-4zM32 228h4v4h-4zM28 232h4v4h-4zM28 236h4v4h-4z"/><path fill="#1a1a1a" d="M288 52h4v4h-4zM292 52h4v4h-4zM296 52h4v4h-4zM300 52h4v4h-4zM304 52h4v4h-4zM308 52h4v4h-4zM312 52h4v4h-4zM316 52h4v4h-4zM260 56h4v4h-4zM264 56h4v4h-4zM268 56h4v4h-4zM272 56h4v4h-4zM244 60h4v4h-4zM248 60h4v4h-4zM252 60h4v4h-4zM232 64h4v4h-4zM236 64h4v4h-4zM224 68h4v4h-4zM216 72h4v4h-4zM208 76h4v4h-4zM212 76h4v4h-4zM204 80h4v4h-4zM196 84h4v4h-4zM200 84h4v4h-4zM192 88h4v4h-4zM188 92h4v4h-4zM184 96h4v4h-4zM176 100h4v4h-4zM168 104h4v4h-4zM172 104h4v4h-4zM164 108h4v4h-4zM156 112h4v4h-4zM148 116h4v4h-4zM140 120h4v4h-4zM132 124h4v4h-4zM128 128h4v4h-4zM124 132h4v4h-4zM112 144h4v4h-4zM108 148h4v4h-4zM108 152h4v4h-4zM104 160h4v4h-4zM92 188h4v4h-4zM72 192h4v4h-4zM76 192h4v4h-4zM80 192h4v4h-4zM60 196h4v4h-4zM64 196h4v4h-4zM68 196h4v4h-4zM84 196h4v4h-4zM88 196h4v4h-4zM52 200h4v4h-4zM56 200h4v4h-4zM48 204h4v4h-4zM44 208h4v4h-4zM44 212h4v4h-4zM40 216h4v4h-4zM36 224h4v4h-4zM32 232h4v4h-4zM32 236h4v4h-4zM28 240h4v4h-4zM28 244h4v4h-4zM28 248h4v4h-4zM28 252h4v4h-4z"/><path fill="#1b1b1b" d="M276 56h4v4h-4zM280 56h4v4h-4zM284 56h4v4h-4zM288 56h4v4h-4zM292 56h4v4h-4zM256 60h4v4h-4zM260 60h4v4h-4zM264 60h4v4h-4zM240 64h4v4h-4zM244 64h4v4h-4zM248 64h4v4h-4zM228 68h4v4h-4zM232 68h4v4h-4zM220 72h4v4h-4zM224 72h4v4h-4zM216 76h4v4h-4zM208 80h4v4h-4zM204 84h4v4h-4zM196 88h4v4h-4zM200 88h4v4h-4zM192 92h4v4h-4zM188 96h4v4h-4zM180 100h4v4h-4zM184 100h4v4h-4zM176 104h4v4h-4zM168 108h4v4h-4zM160 112h4v4h-4zM164 112h4v4h-4zM152 116h4v4h-4zM156 116h4v4h-4zM144 120h4v4h-4zM148 120h4v4h-4zM136 124h4v4h-4zM132 128h4v4h-4zM120 136h4v4h-4zM116 140h4v4h-4zM112 148h4v4h-4zM108 156h4v4h-4zM104 164h4v4h-4zM100 172h4v4h-4zM96 180h4v4h-4zM92 192h4v4h-4zM72 196h4v4h-4zM76 196h4v4h-4zM80 196h4v4h-4zM60 200h4v4h-4zM64 200h4v4h-4zM68 200h4v4h-4zM84 200h4v4h-4zM88 200h4v4h-4zM52 204h4v4h-4zM56 204h4v4h-4zM48 208h4v4h-4zM44 216h4v4h-4zM40 220h4v4h-4zM40 224h4v4h-4zM36 228h4v4h-4zM36 232h4v4h-4zM32 240h4v4h-4zM32 244h4v4h-4zM32 248h4v4h-4zM32 252h4v4h-4z"/><path fill="#1c1c1c" d="M296 56h4v4h-4zM300 56h4v4h-4zM304 56h4v4h-4zM308 56h4v4h-4zM312 56h4v4h-4zM316 56h4v4h-4zM268 60h4v4h-4zM272 60h4v4h-4zM276 60h4v4h-4zM280 60h4v4h-4zM252 64h4v4h-4zM256 64h4v4h-4zM236 68h4v4h-4zM240 68h4v4h-4zM244 68h4v4h-4zM228 72h4v4h-4zM232 72h4v4h-4zM220 76h4v4h-4zM212 80h4v4h-4zM216 80h4v4h-4zM208 84h4v4h-4zM204 88h4v4h-4zM196 92h4v4h-4zM192 96h4v4h-4zM188 100h4v4h-4zM180 104h4v4h-4zM172 108h4v4h-4zM176 108h4v4h-4zM168 112h4v4h-4zM160 116h4v4h-4zM152 120h4v4h-4zM140 124h4v4h-4zM144 124h4v4h-4zM136 128h4v4h-4zM128 132h4v4h-4zM124 136h4v4h-4zM120 140h4v4h-4zM116 144h4v4h-4zM108 160h4v4h-4zM104 168h4v4h-4zM100 176h4v4h-4zM96 184h4v4h-4zM92 196h4v4h-4zM72 200h4v4h-4zM76 200h4v4h-4zM80 200h4v4h-4zM60 204h4v4h-4zM64 204h4v4h-4zM68 204h4v4h-4zM84 204h4v4h-4zM88 204h4v4h-4zM52 208h4v4h-4zM56 208h4v4h-4zM48 212h4v4h-4zM52 212h4v4h-4zM48 216h4v4h-4zM44 220h4v4h-4zM44 224h4v4h-4zM40 228h4v4h-4zM40 232h4v4h-4zM36 236h4v4h-4zM36 240h4v4h-4zM36 244h4v4h-4zM36 248h4v4h-4zM36 252h4v4h-4z"/><path fill="#1d1d1d" d="M284 60h4v4h-4zM288 60h4v4h-4zM292 60h4v4h-4zM296 60h4v4h-4zM260 64h4v4h-4zM264 64h4v4h-4zM268 64h4v4h-4zM272 64h4v4h-4zM248 68h4v4h-4zM252 68h4v4h-4zM236 72h4v4h-4zM240 72h4v4h-4zM224 76h4v4h-4zM228 76h4v4h-4zM220 80h4v4h-4zM212 84h4v4h-4zM208 88h4v4h-4zM200 92h4v4h-4zM204 92h4v4h-4zM196 96h4v4h-4zM192 100h4v4h-4zM184 104h4v4h-4zM188 104h4v4h-4zM180 108h4v4h-4zM172 112h4v4h-4zM164 116h4v4h-4zM156 120h4v4h-4zM148 124h4v4h-4zM140 128h4v4h-4zM132 132h4v4h-4zM128 136h4v4h-4zM124 140h4v4h-4zM116 148h4v4h-4zM112 152h4v4h-4zM108 164h4v4h-4zM104 172h4v4h-4zM100 180h4v4h-4zM96 188h4v4h-4zM92 200h4v4h-4zM72 204h4v4h-4zM76 204h4v4h-4zM80 204h4v4h-4zM60 208h4v4h-4zM64 208h4v4h-4zM68 208h4v4h-4zM84 208h4v4h-4zM88 208h4v4h-4zM56 212h4v4h-4zM60 212h4v4h-4zM52 216h4v4h-4zM48 220h4v4h-4zM48 224h4v4h-4zM44 228h4v4h-4zM44 232h4v4h-4zM40 236h4v4h-4zM40 240h4v4h-4zM40 244h4v4h-4zM40 248h4v4h-4zM40 252h4v4h-4z"/><path fill="#1e1e1e" d="M300 60h4v4h-4zM304 60h4v4h-4zM308 60h4v4h-4zM312 60h4v4h-4zM316 60h4v4h-4zM276 64h4v4h-4zM280 64h4v4h-4zM284 64h4v4h-4zM288 64h4v4h-4zM256 68h4v4h-4zM260 68h4v4h-4zM264 68h4v4h-4zM244 72h4v4h-4zM248 72h4v4h-4zM232 76h4v4h-4zM236 76h4v4h-4zM224 80h4v4h-4zM216 84h4v4h-4zM220 84h4v4h-4zM212 88h4v4h-4zM208 92h4v4h-4zM200 96h4v4h-4zM204 96h4v4h-4zM196 100h4v4h-4zM192 104h4v4h-4zM184 108h4v4h-4zM176 112h4v4h-4zM168 116h4v4h-4zM172 116h4v4h-4zM160 120h4v4h-4zM164 120h4v4h-4zM152 124h4v4h-4zM144 128h4v4h-4zM136 132h4v4h-4zM132 136h4v4h-4zM120 144h4v4h-4zM112 156h4v4h-4zM96 192h4v4h-4zM92 204h4v4h-4zM72 208h4v4h-4zM76 208h4v4h-4zM80 208h4v4h-4zM64 212h4v4h-4zM68 212h4v4h-4zM84 212h4v4h-4zM88 212h4v4h-4zM56 216h4v4h-4zM60 216h4v4h-4zM52 220h4v4h-4zM56 220h4v4h-4zM52 224h4v4h-4zM48 228h4v4h-4zM48 232h4v4h-4zM44 236h4v4h-4zM44 240h4v4h-4zM44 244h4v4h-4zM44 248h4v4h-4zM44 252h4v4h-4z"/><path fill="#1f1f1f" d="M292 64h4v4h-4zM296 64h4v4h-4zM300 64h4v4h-4zM304 64h4v4h-4zM308 64h4v4h-4zM312 64h4v4h-4zM316 64h4v4h-4zM268 68h4v4h-4zM272 68h4v4h-4zM276 68h4v4h-4zM252 72h4v4h-4zM256 72h4v4h-4zM260 72h4v4h-4zM240 76h4v4h-4zM244 76h4v4h-4zM228 80h4v4h-4zM232 80h4v4h-4zM224 84h4v4h-4zM216 88h4v4h-4zM212 92h4v4h-4zM208 96h4v4h-4zM200 100h4v4h-4zM196 104h4v4h-4zM188 108h4v4h-4zM180 112h4v4h-4zM184 112h4v4h-4zM176 116h4v4h-4zM168 120h4v4h-4zM156 124h4v4h-4zM148 128h4v4h-4zM140 132h4v4h-4zM128 140h4v4h-4zM124 144h4v4h-4zM120 148h4v4h-4zM116 152h4v4h-4zM112 160h4v4h-4zM108 168h4v4h-4zM104 176h4v4h-4zM100 184h4v4h-4zM96 196h4v4h-4zM92 208h4v4h-4zM72 212h4v4h-4zM76 212h4v4h-4zM80 212h4v4h-4zM64 216h4v4h-4zM68 216h4v4h-4zM72 216h4v4h-4zM84 216h4v4h-4zM88 216h4v4h-4zM60 220h4v4h-4zM64 220h4v4h-4zM84 220h4v4h-4zM88 220h4v4h-4zM56 224h4v4h-4zM60 224h4v4h-4zM84 224h4v4h-4zM88 224h4v4h-4zM52 228h4v4h-4zM56 228h4v4h-4zM52 232h4v4h-4zM48 236h4v4h-4zM48 240h4v4h-4zM48 244h4v4h-4zM48 248h4v4h-4zM48 252h4v4h-4z"/><path fill="#202020" d="M280 68h4v4h-4zM284 68h4v4h-4zM288 68h4v4h-4zM292 68h4v4h-4zM264 72h4v4h-4zM268 72h4v4h-4zM248 76h4v4h-4zM252 76h4v4h-4zM236 80h4v4h-4zM240 80h4v4h-4zM228 84h4v4h-4zM232 84h4v4h-4zM220 88h4v4h-4zM224 88h4v4h-4zM216 92h4v4h-4zM212 96h4v4h-4zM204 100h4v4h-4zM208 100h4v4h-4zM200 104h4v4h-4zM192 108h4v4h-4zM196 108h4v4h-4zM188 112h4v4h-4zM180 116h4v4h-4zM172 120h4v4h-4zM160 124h4v4h-4zM152 128h4v4h-4zM144 132h4v4h-4zM136 136h4v4h-4zM132 140h4v4h-4zM128 144h4v4h-4zM124 148h4v4h-4zM116 156h4v4h-4zM112 164h4v4h-4zM108 172h4v4h-4zM104 180h4v4h-4zM100 188h4v4h-4zM96 200h4v4h-4zM92 212h4v4h-4zM76 216h4v4h-4zM80 216h4v4h-4zM92 216h4v4h-4zM68 220h4v4h-4zM72 220h4v4h-4zM76 220h4v4h-4zM80 220h4v4h-4zM64 224h4v4h-4zM68 224h4v4h-4zM72 224h4v4h-4zM60 228h4v4h-4zM64 228h4v4h-4zM84 228h4v4h-4zM88 228h4v4h-4zM56 232h4v4h-4zM60 232h4v4h-4zM84 232h4v4h-4zM88 232h4v4h-4zM52 236h4v4h-4zM56 236h4v4h-4zM52 240h4v4h-4zM52 244h4v4h-4zM52 248h4v4h-4zM52 252h4v4h-4z"/><path fill="#212121" d="M296 68h4v4h-4zM300 68h4v4h-4zM304 68h4v4h-4zM308 68h4v4h-4zM312 68h4v4h-4zM316 68h4v4h-4zM272 72h4v4h-4zM276 72h4v4h-4zM280 72h4v4h-4zM284 72h4v4h-4zM256 76h4v4h-4zM260 76h4v4h-4zM264 76h4v4h-4zM244 80h4v4h-4zM248 80h4v4h-4zM236 84h4v4h-4zM228 88h4v4h-4zM220 92h4v4h-4zM216 96h4v4h-4zM212 100h4v4h-4zM204 104h4v4h-4zM200 108h4v4h-4zM192 112h4v4h-4zM184 116h4v4h-4zM188 116h4v4h-4zM176 120h4v4h-4zM164 124h4v4h-4zM168 124h4v4h-4zM156 128h4v4h-4zM148 132h4v4h-4zM140 136h4v4h-4zM136 140h4v4h-4zM120 152h4v4h-4zM112 168h4v4h-4zM108 176h4v4h-4zM104 184h4v4h-4zM100 192h4v4h-4zM96 204h4v4h-4zM96 208h4v4h-4zM92 220h4v4h-4zM76 224h4v4h-4zM80 224h4v4h-4zM68 228h4v4h-4zM72 228h4v4h-4zM76 228h4v4h-4zM80 228h4v4h-4zM64 232h4v4h-4zM68 232h4v4h-4zM72 232h4v4h-4zM80 232h4v4h-4zM60 236h4v4h-4zM64 236h4v4h-4zM84 236h4v4h-4zM88 236h4v4h-4zM56 240h4v4h-4zM60 240h4v4h-4zM64 240h4v4h-4zM84 240h4v4h-4zM88 240h4v4h-4zM56 244h4v4h-4zM60 244h4v4h-4zM64 244h4v4h-4zM84 244h4v4h-4zM88 244h4v4h-4zM56 248h4v4h-4zM60 248h4v4h-4zM64 248h4v4h-4zM84 248h4v4h-4zM88 248h4v4h-4zM56 252h4v4h-4zM60 252h4v4h-4zM64 252h4v4h-4zM84 252h4v4h-4zM88 252h4v4h-4z"/><path fill="#222222" d="M288 72h4v4h-4zM292 72h4v4h-4zM296 72h4v4h-4zM268 76h4v4h-4zM272 76h4v4h-4zM276 76h4v4h-4zM252 80h4v4h-4zM256 80h4v4h-4zM240 84h4v4h-4zM244 84h4v4h-4zM232 88h4v4h-4zM236 88h4v4h-4zM224 92h4v4h-4zM228 92h4v4h-4zM220 96h4v4h-4zM216 100h4v4h-4zM208 104h4v4h-4zM204 108h4v4h-4zM196 112h4v4h-4zM192 116h4v4h-4zM180 120h4v4h-4zM184 120h4v4h-4zM172 124h4v4h-4zM160 128h4v4h-4zM152 132h4v4h-4zM144 136h4v4h-4zM132 144h4v4h-4zM128 148h4v4h-4zM124 152h4v4h-4zM120 156h4v4h-4zM116 160h4v4h-4zM112 172h4v4h-4zM108 180h4v4h-4zM104 188h4v4h-4zM100 196h4v4h-4zM96 212h4v4h-4zM92 224h4v4h-4zM92 228h4v4h-4zM76 232h4v4h-4zM68 236h4v4h-4zM72 236h4v4h-4zM76 236h4v4h-4zM80 236h4v4h-4zM68 240h4v4h-4zM72 240h4v4h-4zM80 240h4v4h-4zM68 244h4v4h-4zM72 244h4v4h-4zM80 244h4v4h-4zM68 248h4v4h-4zM72 248h4v4h-4zM80 248h4v4h-4zM68 252h4v4h-4zM72 252h4v4h-4zM80 252h4v4h-4z"/><path fill="#232323" d="M300 72h4v4h-4zM304 72h4v4h-4zM308 72h4v4h-4zM312 72h4v4h-4zM316 72h4v4h-4zM280 76h4v4h-4zM284 76h4v4h-4zM288 76h4v4h-4zM260 80h4v4h-4zM264 80h4v4h-4zM268 80h4v4h-4zM248 84h4v4h-4zM252 84h4v4h-4zM240 88h4v4h-4zM244 88h4v4h-4zM232 92h4v4h-4zM224 96h4v4h-4zM220 100h4v4h-4zM212 104h4v4h-4zM208 108h4v4h-4zM200 112h4v4h-4zM196 116h4v4h-4zM188 120h4v4h-4zM176 124h4v4h-4zM164 128h4v4h-4zM156 132h4v4h-4zM148 136h4v4h-4zM140 140h4v4h-4zM136 144h4v4h-4zM132 148h4v4h-4zM128 152h4v4h-4zM116 164h4v4h-4zM112 176h4v4h-4zM100 200h4v4h-4zM96 216h4v4h-4zM92 232h4v4h-4zM92 236h4v4h-4zM76 240h4v4h-4zM76 244h4v4h-4zM76 248h4v4h-4zM76 252h4v4h-4z"/><path fill="#242424" d="M292 76h4v4h-4zM296 76h4v4h-4zM300 76h4v4h-4zM272 80h4v4h-4zM276 80h4v4h-4zM256 84h4v4h-4zM260 84h4v4h-4zM248 88h4v4h-4zM236 92h4v4h-4zM240 92h4v4h-4zM228 96h4v4h-4zM232 96h4v4h-4zM224 100h4v4h-4zM216 104h4v4h-4zM220 104h4v4h-4zM212 108h4v4h-4zM204 112h4v4h-4zM208 112h4v4h-4zM200 116h4v4h-4zM192 120h4v4h-4zM180 124h4v4h-4zM168 128h4v4h-4zM172 128h4v4h-4zM160 132h4v4h-4zM152 136h4v4h-4zM144 140h4v4h-4zM140 144h4v4h-4zM124 156h4v4h-4zM120 160h4v4h-4zM116 168h4v4h-4zM112 180h4v4h-4zM108 184h4v4h-4zM104 192h4v4h-4zM100 204h4v4h-4zM96 220h4v4h-4zM92 240h4v4h-4zM92 244h4v4h-4zM92 248h4v4h-4zM92 252h4v4h-4z"/><path fill="#252525" d="M304 76h4v4h-4zM308 76h4v4h-4zM312 76h4v4h-4zM316 76h4v4h-4zM280 80h4v4h-4zM284 80h4v4h-4zM288 80h4v4h-4zM264 84h4v4h-4zM268 84h4v4h-4zM252 88h4v4h-4zM256 88h4v4h-4zM244 92h4v4h-4zM236 96h4v4h-4zM228 100h4v4h-4zM224 104h4v4h-4zM216 108h4v4h-4zM212 112h4v4h-4zM204 116h4v4h-4zM196 120h4v4h-4zM184 124h4v4h-4zM188 124h4v4h-4zM176 128h4v4h-4zM164 132h4v4h-4zM156 136h4v4h-4zM148 140h4v4h-4zM144 144h4v4h-4zM136 148h4v4h-4zM132 152h4v4h-4zM128 156h4v4h-4zM124 160h4v4h-4zM120 164h4v4h-4zM116 172h4v4h-4zM108 188h4v4h-4zM104 196h4v4h-4zM100 208h4v4h-4zM96 224h4v4h-4zM96 228h4v4h-4z"/><path fill="#262626" d="M292 80h4v4h-4zM296 80h4v4h-4zM272 84h4v4h-4zM276 84h4v4h-4zM280 84h4v4h-4zM260 88h4v4h-4zM264 88h4v4h-4zM248 92h4v4h-4zM252 92h4v4h-4zM240 96h4v4h-4zM244 96h4v4h-4zM232 100h4v4h-4zM236 100h4v4h-4zM228 104h4v4h-4zM220 108h4v4h-4zM216 112h4v4h-4zM208 116h4v4h-4zM200 120h4v4h-4zM204 120h4v4h-4zM192 124h4v4h-4zM180 128h4v4h-4zM168 132h4v4h-4zM160 136h4v4h-4zM152 140h4v4h-4zM148 144h4v4h-4zM140 148h4v4h-4zM136 152h4v4h-4zM132 156h4v4h-4zM120 168h4v4h-4zM116 176h4v4h-4zM112 184h4v4h-4zM108 192h4v4h-4zM104 200h4v4h-4zM100 212h4v4h-4zM96 232h4v4h-4z"/><path fill="#272727" d="M300 80h4v4h-4zM304 80h4v4h-4zM308 80h4v4h-4zM312 80h4v4h-4zM316 80h4v4h-4zM284 84h4v4h-4zM288 84h4v4h-4zM268 88h4v4h-4zM272 88h4v4h-4zM256 92h4v4h-4zM260 92h4v4h-4zM248 96h4v4h-4zM240 100h4v4h-4zM232 104h4v4h-4zM224 108h4v4h-4zM220 112h4v4h-4zM212 116h4v4h-4zM208 120h4v4h-4zM196 124h4v4h-4zM184 128h4v4h-4zM172 132h4v4h-4zM176 132h4v4h-4zM164 136h4v4h-4zM156 140h4v4h-4zM152 144h4v4h-4zM144 148h4v4h-4zM148 148h4v4h-4zM140 152h4v4h-4zM128 160h4v4h-4zM124 164h4v4h-4zM120 172h4v4h-4zM116 180h4v4h-4zM112 188h4v4h-4zM108 196h4v4h-4zM104 204h4v4h-4zM100 216h4v4h-4zM100 220h4v4h-4zM96 236h4v4h-4zM96 240h4v4h-4zM96 244h4v4h-4zM96 248h4v4h-4zM96 252h4v4h-4z"/><path fill="#282828" d="M292 84h4v4h-4zM296 84h4v4h-4zM276 88h4v4h-4zM280 88h4v4h-4zM264 92h4v4h-4zM252 96h4v4h-4zM256 96h4v4h-4zM244 100h4v4h-4zM236 104h4v4h-4zM228 108h4v4h-4zM232 108h4v4h-4zM224 112h4v4h-4zM216 116h4v4h-4zM220 116h4v4h-4zM212 120h4v4h-4zM200 124h4v4h-4zM188 128h4v4h-4zM180 132h4v4h-4zM168 136h4v4h-4zM160 140h4v4h-4zM156 144h4v4h-4zM152 148h4v4h-4zM144 152h4v4h-4zM148 152h4v4h-4zM136 156h4v4h-4zM132 160h4v4h-4zM128 164h4v4h-4zM124 168h4v4h-4zM120 176h4v4h-4zM120 180h4v4h-4zM116 184h4v4h-4zM112 192h4v4h-4zM104 208h4v4h-4zM100 224h4v4h-4z"/><path fill="#292929" d="M300 84h4v4h-4zM304 84h4v4h-4zM308 84h4v4h-4zM312 84h4v4h-4zM316 84h4v4h-4zM284 88h4v4h-4zM288 88h4v4h-4zM268 92h4v4h-4zM272 92h4v4h-4zM260 96h4v4h-4zM248 100h4v4h-4zM252 100h4v4h-4zM240 104h4v4h-4zM244 104h4v4h-4zM236 108h4v4h-4zM228 112h4v4h-4zM224 116h4v4h-4zM216 120h4v4h-4zM204 124h4v4h-4zM208 124h4v4h-4zM192 128h4v4h-4zM196 128h4v4h-4zM184 132h4v4h-4zM172 136h4v4h-4zM164 140h4v4h-4zM160 144h4v4h-4zM156 148h4v4h-4zM152 152h4v4h-4zM140 156h4v4h-4zM144 156h4v4h-4zM136 160h4v4h-4zM128 168h4v4h-4zM124 172h4v4h-4zM124 176h4v4h-4zM116 188h4v4h-4zM108 200h4v4h-4zM104 212h4v4h-4zM100 228h4v4h-4z"/><path fill="#2a2a2a" d="M292 88h4v4h-4zM296 88h4v4h-4zM276 92h4v4h-4zM280 92h4v4h-4zM264 96h4v4h-4zM268 96h4v4h-4zM256 100h4v4h-4zM248 104h4v4h-4zM240 108h4v4h-4zM232 112h4v4h-4zM228 116h4v4h-4zM220 120h4v4h-4zM212 124h4v4h-4zM200 128h4v4h-4zM188 132h4v4h-4zM176 136h4v4h-4zM168 140h4v4h-4zM164 144h4v4h-4zM160 148h4v4h-4zM156 152h4v4h-4zM148 156h4v4h-4zM152 156h4v4h-4zM140 160h4v4h-4zM132 164h4v4h-4zM128 172h4v4h-4zM124 180h4v4h-4zM120 184h4v4h-4zM112 196h4v4h-4zM108 204h4v4h-4zM104 216h4v4h-4zM100 232h4v4h-4z"/><path fill="#2b2b2b" d="M300 88h4v4h-4zM304 88h4v4h-4zM308 88h4v4h-4zM312 88h4v4h-4zM316 88h4v4h-4zM284 92h4v4h-4zM288 92h4v4h-4zM272 96h4v4h-4zM276 96h4v4h-4zM260 100h4v4h-4zM264 100h4v4h-4zM252 104h4v4h-4zM244 108h4v4h-4zM236 112h4v4h-4zM232 116h4v4h-4zM224 120h4v4h-4zM216 124h4v4h-4zM204 128h4v4h-4zM192 132h4v4h-4zM180 136h4v4h-4zM172 140h4v4h-4zM168 144h4v4h-4zM164 148h4v4h-4zM160 152h4v4h-4zM156 156h4v4h-4zM144 160h4v4h-4zM148 160h4v4h-4zM152 160h4v4h-4zM136 164h4v4h-4zM132 168h4v4h-4zM128 176h4v4h-4zM120 188h4v4h-4zM116 192h4v4h-4zM112 200h4v4h-4zM108 208h4v4h-4zM104 220h4v4h-4zM100 236h4v4h-4zM100 240h4v4h-4zM100 244h4v4h-4zM100 248h4v4h-4zM100 252h4v4h-4z"/><path fill="#2c2c2c" d="M292 92h4v4h-4zM296 92h4v4h-4zM280 96h4v4h-4zM268 100h4v4h-4zM256 104h4v4h-4zM248 108h4v4h-4zM240 112h4v4h-4zM236 116h4v4h-4zM228 120h4v4h-4zM220 124h4v4h-4zM208 128h4v4h-4zM212 128h4v4h-4zM196 132h4v4h-4zM200 132h4v4h-4zM184 136h4v4h-4zM188 136h4v4h-4zM176 140h4v4h-4zM172 144h4v4h-4zM168 148h4v4h-4zM164 152h4v4h-4zM160 156h4v4h-4zM156 160h4v4h-4zM140 164h4v4h-4zM144 164h4v4h-4zM148 164h4v4h-4zM152 164h4v4h-4zM136 168h4v4h-4zM132 172h4v4h-4zM128 180h4v4h-4zM124 184h4v4h-4zM116 196h4v4h-4zM108 212h4v4h-4zM104 224h4v4h-4z"/><path fill="#2d2d2d" d="M300 92h4v4h-4zM304 92h4v4h-4zM308 92h4v4h-4zM312 92h4v4h-4zM316 92h4v4h-4zM284 96h4v4h-4zM288 96h4v4h-4zM272 100h4v4h-4zM276 100h4v4h-4zM260 104h4v4h-4zM264 104h4v4h-4zM252 108h4v4h-4zM244 112h4v4h-4zM240 116h4v4h-4zM232 120h4v4h-4zM224 124h4v4h-4zM228 124h4v4h-4zM216 128h4v4h-4zM204 132h4v4h-4zM192 136h4v4h-4zM180 140h4v4h-4zM176 144h4v4h-4zM172 148h4v4h-4zM156 164h4v4h-4zM140 168h4v4h-4zM144 168h4v4h-4zM148 168h4v4h-4zM152 168h4v4h-4zM136 172h4v4h-4zM140 172h4v4h-4zM132 176h4v4h-4zM136 176h4v4h-4zM124 188h4v4h-4zM120 192h4v4h-4zM112 204h4v4h-4zM108 216h4v4h-4zM104 228h4v4h-4z"/><path fill="#2e2e2e" d="M292 96h4v4h-4zM296 96h4v4h-4zM280 100h4v4h-4zM268 104h4v4h-4zM256 108h4v4h-4zM260 108h4v4h-4zM248 112h4v4h-4zM252 112h4v4h-4zM244 116h4v4h-4zM236 120h4v4h-4zM232 124h4v4h-4zM220 128h4v4h-4zM224 128h4v4h-4zM208 132h4v4h-4zM212 132h4v4h-4zM196 136h4v4h-4zM184 140h4v4h-4zM188 140h4v4h-4zM180 144h4v4h-4zM176 148h4v4h-4zM168 152h4v4h-4zM164 156h4v4h-4zM160 160h4v4h-4zM144 172h4v4h-4zM148 172h4v4h-4zM152 172h4v4h-4zM140 176h4v4h-4zM132 180h4v4h-4zM136 180h4v4h-4zM128 184h4v4h-4zM120 196h4v4h-4zM116 200h4v4h-4zM112 208h4v4h-4zM104 232h4v4h-4z"/><path fill="#2f2f2f" d="M300 96h4v4h-4zM304 96h4v4h-4zM308 96h4v4h-4zM312 96h4v4h-4zM316 96h4v4h-4zM284 100h4v4h-4zM288 100h4v4h-4zM272 104h4v4h-4zM276 104h4v4h-4zM264 108h4v4h-4zM256 112h4v4h-4zM248 116h4v4h-4zM240 120h4v4h-4zM236 124h4v4h-4zM228 128h4v4h-4zM216 132h4v4h-4zM200 136h4v4h-4zM204 136h4v4h-4zM192 140h4v4h-4zM184 144h4v4h-4zM180 148h4v4h-4zM172 152h4v4h-4zM168 156h4v4h-4zM164 160h4v4h-4zM160 164h4v4h-4zM156 168h4v4h-4zM144 176h4v4h-4zM148 176h4v4h-4zM152 176h4v4h-4zM140 180h4v4h-4zM132 184h4v4h-4zM128 188h4v4h-4zM124 192h4v4h-4zM116 204h4v4h-4zM112 212h4v4h-4zM108 220h4v4h-4zM104 236h4v4h-4zM104 240h4v4h-4zM104 244h4v4h-4zM104 248h4v4h-4zM104 252h4v4h-4z"/><path fill="#303030" d="M292 100h4v4h-4zM296 100h4v4h-4zM280 104h4v4h-4zM284 104h4v4h-4zM268 108h4v4h-4zM260 112h4v4h-4zM252 116h4v4h-4zM244 120h4v4h-4zM240 124h4v4h-4zM232 128h4v4h-4zM220 132h4v4h-4zM224 132h4v4h-4zM208 136h4v4h-4zM212 136h4v4h-4zM196 140h4v4h-4zM188 144h4v4h-4zM184 148h4v4h-4zM176 152h4v4h-4zM172 156h4v4h-4zM160 168h4v4h-4zM156 172h4v4h-4zM144 180h4v4h-4zM148 180h4v4h-4zM136 184h4v4h-4zM140 184h4v4h-4zM120 200h4v4h-4zM108 224h4v4h-4z"/><path fill="#313131" d="M300 100h4v4h-4zM304 100h4v4h-4zM308 100h4v4h-4zM312 100h4v4h-4zM316 100h4v4h-4zM288 104h4v4h-4zM272 108h4v4h-4zM276 108h4v4h-4zM264 112h4v4h-4zM256 116h4v4h-4zM248 120h4v4h-4zM244 124h4v4h-4zM236 128h4v4h-4zM228 132h4v4h-4zM216 136h4v4h-4zM220 136h4v4h-4zM200 140h4v4h-4zM204 140h4v4h-4zM192 144h4v4h-4zM188 148h4v4h-4zM180 152h4v4h-4zM168 160h4v4h-4zM164 164h4v4h-4zM156 176h4v4h-4zM152 180h4v4h-4zM144 184h4v4h-4zM132 188h4v4h-4zM128 192h4v4h-4zM124 196h4v4h-4zM116 208h4v4h-4zM112 216h4v4h-4zM108 228h4v4h-4z"/><path fill="#323232" d="M292 104h4v4h-4zM296 104h4v4h-4zM280 108h4v4h-4zM284 108h4v4h-4zM268 112h4v4h-4zM272 112h4v4h-4zM260 116h4v4h-4zM252 120h4v4h-4zM248 124h4v4h-4zM240 128h4v4h-4zM232 132h4v4h-4zM236 132h4v4h-4zM224 136h4v4h-4zM228 136h4v4h-4zM208 140h4v4h-4zM212 140h4v4h-4zM196 144h4v4h-4zM200 144h4v4h-4zM192 148h4v4h-4zM184 152h4v4h-4zM176 156h4v4h-4zM172 160h4v4h-4zM168 164h4v4h-4zM164 168h4v4h-4zM160 172h4v4h-4zM148 184h4v4h-4zM136 188h4v4h-4zM140 188h4v4h-4zM144 188h4v4h-4zM124 200h4v4h-4zM120 204h4v4h-4zM116 212h4v4h-4zM112 220h4v4h-4zM108 232h4v4h-4z"/><path fill="#333333" d="M300 104h4v4h-4zM304 104h4v4h-4zM308 104h4v4h-4zM312 104h4v4h-4zM316 104h4v4h-4zM288 108h4v4h-4zM276 112h4v4h-4zM264 116h4v4h-4zM256 120h4v4h-4zM252 124h4v4h-4zM244 128h4v4h-4zM240 132h4v4h-4zM232 136h4v4h-4zM216 140h4v4h-4zM220 140h4v4h-4zM204 144h4v4h-4zM208 144h4v4h-4zM196 148h4v4h-4zM188 152h4v4h-4zM180 156h4v4h-4zM156 180h4v4h-4zM152 184h4v4h-4zM148 188h4v4h-4zM152 188h4v4h-4zM132 192h4v4h-4zM136 192h4v4h-4zM128 196h4v4h-4zM108 236h4v4h-4z"/><path fill="#343434" d="M292 108h4v4h-4zM296 108h4v4h-4zM280 112h4v4h-4zM284 112h4v4h-4zM268 116h4v4h-4zM272 116h4v4h-4zM260 120h4v4h-4zM256 124h4v4h-4zM248 128h4v4h-4zM244 132h4v4h-4zM236 136h4v4h-4zM224 140h4v4h-4zM228 140h4v4h-4zM212 144h4v4h-4zM216 144h4v4h-4zM200 148h4v4h-4zM192 152h4v4h-4zM184 156h4v4h-4zM176 160h4v4h-4zM172 164h4v4h-4zM168 168h4v4h-4zM164 172h4v4h-4zM160 176h4v4h-4zM140 192h4v4h-4zM144 192h4v4h-4zM148 192h4v4h-4zM152 192h4v4h-4zM132 196h4v4h-4zM128 200h4v4h-4zM124 204h4v4h-4zM120 208h4v4h-4zM116 216h4v4h-4zM112 224h4v4h-4zM108 240h4v4h-4zM108 244h4v4h-4zM108 248h4v4h-4zM108 252h4v4h-4z"/><path fill="#353535" d="M300 108h4v4h-4zM304 108h4v4h-4zM308 108h4v4h-4zM312 108h4v4h-4zM316 108h4v4h-4zM288 112h4v4h-4zM276 116h4v4h-4zM264 120h4v4h-4zM268 120h4v4h-4zM260 124h4v4h-4zM252 128h4v4h-4zM248 132h4v4h-4zM240 136h4v4h-4zM232 140h4v4h-4zM236 140h4v4h-4zM220 144h4v4h-4zM224 144h4v4h-4zM228 144h4v4h-4zM204 148h4v4h-4zM208 148h4v4h-4zM196 152h4v4h-4zM188 156h4v4h-4zM180 160h4v4h-4zM156 184h4v4h-4zM156 188h4v4h-4zM136 196h4v4h-4zM120 212h4v4h-4zM112 228h4v4h-4z"/><path fill="#363636" d="M292 112h4v4h-4zM296 112h4v4h-4zM280 116h4v4h-4zM284 116h4v4h-4zM272 120h4v4h-4zM264 124h4v4h-4zM256 128h4v4h-4zM252 132h4v4h-4zM244 136h4v4h-4zM240 140h4v4h-4zM232 144h4v4h-4zM212 148h4v4h-4zM216 148h4v4h-4zM220 148h4v4h-4zM224 148h4v4h-4zM228 148h4v4h-4zM200 152h4v4h-4zM204 152h4v4h-4zM192 156h4v4h-4zM184 160h4v4h-4zM176 164h4v4h-4zM164 176h4v4h-4zM160 180h4v4h-4zM156 192h4v4h-4zM140 196h4v4h-4zM144 196h4v4h-4zM148 196h4v4h-4zM152 196h4v4h-4zM132 200h4v4h-4zM128 204h4v4h-4zM124 208h4v4h-4zM116 220h4v4h-4zM112 232h4v4h-4z"/><path fill="#373737" d="M300 112h4v4h-4zM304 112h4v4h-4zM308 112h4v4h-4zM312 112h4v4h-4zM316 112h4v4h-4zM288 116h4v4h-4zM276 120h4v4h-4zM268 124h4v4h-4zM260 128h4v4h-4zM264 128h4v4h-4zM256 132h4v4h-4zM248 136h4v4h-4zM252 136h4v4h-4zM244 140h4v4h-4zM236 144h4v4h-4zM232 148h4v4h-4zM208 152h4v4h-4zM212 152h4v4h-4zM196 156h4v4h-4zM188 160h4v4h-4zM180 164h4v4h-4zM172 168h4v4h-4zM168 172h4v4h-4zM160 184h4v4h-4zM136 200h4v4h-4zM148 200h4v4h-4zM152 200h4v4h-4zM120 216h4v4h-4zM116 224h4v4h-4z"/><path fill="#383838" d="M292 116h4v4h-4zM296 116h4v4h-4zM280 120h4v4h-4zM284 120h4v4h-4zM272 124h4v4h-4zM276 124h4v4h-4zM268 128h4v4h-4zM260 132h4v4h-4zM256 136h4v4h-4zM248 140h4v4h-4zM240 144h4v4h-4zM236 148h4v4h-4zM216 152h4v4h-4zM220 152h4v4h-4zM224 152h4v4h-4zM228 152h4v4h-4zM232 152h4v4h-4zM200 156h4v4h-4zM192 160h4v4h-4zM164 180h4v4h-4zM160 188h4v4h-4zM156 196h4v4h-4zM140 200h4v4h-4zM144 200h4v4h-4zM132 204h4v4h-4zM128 208h4v4h-4zM124 212h4v4h-4zM112 236h4v4h-4z"/><path fill="#393939" d="M300 116h4v4h-4zM304 116h4v4h-4zM308 116h4v4h-4zM312 116h4v4h-4zM316 116h4v4h-4zM288 120h4v4h-4zM280 124h4v4h-4zM272 128h4v4h-4zM264 132h4v4h-4zM260 136h4v4h-4zM252 140h4v4h-4zM244 144h4v4h-4zM240 148h4v4h-4zM236 152h4v4h-4zM204 156h4v4h-4zM208 156h4v4h-4zM224 156h4v4h-4zM228 156h4v4h-4zM184 164h4v4h-4zM176 168h4v4h-4zM172 172h4v4h-4zM168 176h4v4h-4zM160 192h4v4h-4zM156 200h4v4h-4zM136 204h4v4h-4zM148 204h4v4h-4zM152 204h4v4h-4zM120 220h4v4h-4zM116 228h4v4h-4zM112 240h4v4h-4zM112 244h4v4h-4zM112 248h4v4h-4zM112 252h4v4h-4z"/><path fill="#3a3a3a" d="M292 120h4v4h-4zM296 120h4v4h-4zM284 124h4v4h-4zM288 124h4v4h-4zM276 128h4v4h-4zM268 132h4v4h-4zM264 136h4v4h-4zM256 140h4v4h-4zM248 144h4v4h-4zM244 148h4v4h-4zM240 152h4v4h-4zM212 156h4v4h-4zM216 156h4v4h-4zM220 156h4v4h-4zM232 156h4v4h-4zM196 160h4v4h-4zM188 164h4v4h-4zM180 168h4v4h-4zM164 184h4v4h-4zM160 196h4v4h-4zM140 204h4v4h-4zM144 204h4v4h-4zM132 208h4v4h-4zM128 212h4v4h-4zM124 216h4v4h-4z"/><path fill="#3b3b3b" d="M300 120h4v4h-4zM304 120h4v4h-4zM308 120h4v4h-4zM312 120h4v4h-4zM316 120h4v4h-4zM292 124h4v4h-4zM296 124h4v4h-4zM280 128h4v4h-4zM284 128h4v4h-4zM272 132h4v4h-4zM276 132h4v4h-4zM268 136h4v4h-4zM260 140h4v4h-4zM252 144h4v4h-4zM236 156h4v4h-4zM200 160h4v4h-4zM224 160h4v4h-4zM228 160h4v4h-4zM192 164h4v4h-4zM168 180h4v4h-4zM164 188h4v4h-4zM156 204h4v4h-4zM136 208h4v4h-4zM148 208h4v4h-4zM152 208h4v4h-4zM120 224h4v4h-4zM116 232h4v4h-4z"/><path fill="#3c3c3c" d="M300 124h4v4h-4zM304 124h4v4h-4zM308 124h4v4h-4zM312 124h4v4h-4zM316 124h4v4h-4zM288 128h4v4h-4zM280 132h4v4h-4zM272 136h4v4h-4zM264 140h4v4h-4zM256 144h4v4h-4zM248 148h4v4h-4zM244 152h4v4h-4zM240 156h4v4h-4zM204 160h4v4h-4zM208 160h4v4h-4zM212 160h4v4h-4zM216 160h4v4h-4zM220 160h4v4h-4zM232 160h4v4h-4zM236 160h4v4h-4zM196 164h4v4h-4zM184 168h4v4h-4zM176 172h4v4h-4zM172 176h4v4h-4zM164 192h4v4h-4zM160 200h4v4h-4zM140 208h4v4h-4zM144 208h4v4h-4zM132 212h4v4h-4zM128 216h4v4h-4zM124 220h4v4h-4z"/><path fill="#3d3d3d" d="M292 128h4v4h-4zM296 128h4v4h-4zM300 128h4v4h-4zM304 128h4v4h-4zM308 128h4v4h-4zM312 128h4v4h-4zM316 128h4v4h-4zM284 132h4v4h-4zM276 136h4v4h-4zM268 140h4v4h-4zM260 144h4v4h-4zM252 148h4v4h-4zM224 164h4v4h-4zM228 164h4v4h-4zM232 164h4v4h-4zM188 168h4v4h-4zM168 184h4v4h-4zM156 208h4v4h-4zM136 212h4v4h-4zM148 212h4v4h-4zM152 212h4v4h-4zM120 228h4v4h-4zM116 236h4v4h-4z"/><path fill="#3e3e3e" d="M288 132h4v4h-4zM292 132h4v4h-4zM296 132h4v4h-4zM300 132h4v4h-4zM304 132h4v4h-4zM308 132h4v4h-4zM312 132h4v4h-4zM316 132h4v4h-4zM280 136h4v4h-4zM284 136h4v4h-4zM272 140h4v4h-4zM264 144h4v4h-4zM248 152h4v4h-4zM244 156h4v4h-4zM240 160h4v4h-4zM200 164h4v4h-4zM220 164h4v4h-4zM236 164h4v4h-4zM192 168h4v4h-4zM180 172h4v4h-4zM172 180h4v4h-4zM164 196h4v4h-4zM160 204h4v4h-4zM140 212h4v4h-4zM144 212h4v4h-4zM132 216h4v4h-4zM124 224h4v4h-4zM116 240h4v4h-4zM116 244h4v4h-4zM116 248h4v4h-4zM116 252h4v4h-4z"/><path fill="#3f3f3f" d="M288 136h4v4h-4zM296 136h4v4h-4zM300 136h4v4h-4zM304 136h4v4h-4zM308 136h4v4h-4zM312 136h4v4h-4zM316 136h4v4h-4zM276 140h4v4h-4zM256 148h4v4h-4zM204 164h4v4h-4zM208 164h4v4h-4zM212 164h4v4h-4zM216 164h4v4h-4zM228 168h4v4h-4zM184 172h4v4h-4zM176 176h4v4h-4zM168 188h4v4h-4zM164 200h4v4h-4zM160 208h4v4h-4zM156 212h4v4h-4zM152 216h4v4h-4zM128 220h4v4h-4zM120 232h4v4h-4z"/><path fill="#404040" d="M292 136h4v4h-4zM280 140h4v4h-4zM268 144h4v4h-4zM260 148h4v4h-4zM252 152h4v4h-4zM244 160h4v4h-4zM240 164h4v4h-4zM196 168h4v4h-4zM224 168h4v4h-4zM188 172h4v4h-4zM136 216h4v4h-4zM148 216h4v4h-4zM124 228h4v4h-4z"/><path fill="#414141" d="M284 140h4v4h-4zM300 140h4v4h-4zM304 140h4v4h-4zM308 140h4v4h-4zM312 140h4v4h-4zM316 140h4v4h-4zM272 144h4v4h-4zM264 148h4v4h-4zM248 156h4v4h-4zM220 168h4v4h-4zM232 168h4v4h-4zM180 176h4v4h-4zM172 184h4v4h-4zM168 192h4v4h-4zM164 204h4v4h-4zM160 212h4v4h-4zM140 216h4v4h-4zM144 216h4v4h-4zM156 216h4v4h-4zM132 220h4v4h-4zM152 220h4v4h-4zM128 224h4v4h-4zM120 236h4v4h-4z"/><path fill="#424242" d="M288 140h4v4h-4zM292 140h4v4h-4zM296 140h4v4h-4zM268 148h4v4h-4zM256 152h4v4h-4zM200 168h4v4h-4zM216 168h4v4h-4zM236 168h4v4h-4zM192 172h4v4h-4zM228 172h4v4h-4zM184 176h4v4h-4zM176 180h4v4h-4zM136 220h4v4h-4zM148 220h4v4h-4zM120 240h4v4h-4zM120 244h4v4h-4zM120 248h4v4h-4zM120 252h4v4h-4z"/><path fill="#434343" d="M276 144h4v4h-4zM260 152h4v4h-4zM252 156h4v4h-4zM244 164h4v4h-4zM204 168h4v4h-4zM208 168h4v4h-4zM212 168h4v4h-4zM224 172h4v4h-4zM172 188h4v4h-4zM168 196h4v4h-4zM164 208h4v4h-4zM160 216h4v4h-4zM124 232h4v4h-4z"/><path fill="#444444" d="M280 144h4v4h-4zM264 152h4v4h-4zM248 160h4v4h-4zM240 168h4v4h-4zM196 172h4v4h-4zM232 172h4v4h-4zM188 176h4v4h-4zM180 180h4v4h-4zM164 212h4v4h-4zM140 220h4v4h-4zM144 220h4v4h-4zM156 220h4v4h-4zM132 224h4v4h-4zM152 224h4v4h-4zM128 228h4v4h-4z"/><path fill="#454545" d="M284 144h4v4h-4zM272 148h4v4h-4zM220 172h4v4h-4zM176 184h4v4h-4zM136 224h4v4h-4zM148 224h4v4h-4zM124 236h4v4h-4z"/><path fill="#464646" d="M288 144h4v4h-4zM268 152h4v4h-4zM256 156h4v4h-4zM200 172h4v4h-4zM216 172h4v4h-4zM192 176h4v4h-4zM228 176h4v4h-4zM168 200h4v4h-4zM160 220h4v4h-4zM140 224h4v4h-4zM144 224h4v4h-4zM156 224h4v4h-4zM132 228h4v4h-4zM128 232h4v4h-4zM124 240h4v4h-4zM124 244h4v4h-4zM124 248h4v4h-4zM124 252h4v4h-4z"/><path fill="#474747" d="M292 144h4v4h-4zM296 144h4v4h-4zM300 144h4v4h-4zM304 144h4v4h-4zM308 144h4v4h-4zM312 144h4v4h-4zM316 144h4v4h-4zM276 148h4v4h-4zM252 160h4v4h-4zM248 164h4v4h-4zM204 172h4v4h-4zM208 172h4v4h-4zM212 172h4v4h-4zM236 172h4v4h-4zM224 176h4v4h-4zM184 180h4v4h-4zM172 192h4v4h-4zM164 216h4v4h-4zM148 228h4v4h-4zM152 228h4v4h-4z"/><path fill="#484848" d="M260 156h4v4h-4zM244 168h4v4h-4zM196 176h4v4h-4zM232 176h4v4h-4zM180 184h4v4h-4zM176 188h4v4h-4zM136 228h4v4h-4z"/><path fill="#494949" d="M280 148h4v4h-4zM272 152h4v4h-4zM220 176h4v4h-4zM188 180h4v4h-4zM168 204h4v4h-4zM140 228h4v4h-4zM144 228h4v4h-4zM156 228h4v4h-4zM132 232h4v4h-4zM128 236h4v4h-4z"/><path fill="#4a4a4a" d="M284 148h4v4h-4zM240 172h4v4h-4zM200 176h4v4h-4zM216 176h4v4h-4zM164 220h4v4h-4zM160 224h4v4h-4zM152 232h4v4h-4zM128 240h4v4h-4zM128 244h4v4h-4zM128 248h4v4h-4zM128 252h4v4h-4z"/><path fill="#4b4b4b" d="M288 148h4v4h-4zM264 156h4v4h-4zM256 160h4v4h-4zM252 164h4v4h-4zM204 176h4v4h-4zM208 176h4v4h-4zM212 176h4v4h-4zM184 184h4v4h-4zM172 196h4v4h-4zM168 208h4v4h-4zM136 232h4v4h-4zM148 232h4v4h-4z"/><path fill="#4c4c4c" d="M292 148h4v4h-4zM276 152h4v4h-4zM236 176h4v4h-4zM192 180h4v4h-4zM180 188h4v4h-4zM176 192h4v4h-4zM140 232h4v4h-4zM144 232h4v4h-4zM132 236h4v4h-4z"/><path fill="#4d4d4d" d="M296 148h4v4h-4zM268 156h4v4h-4zM248 168h4v4h-4zM228 180h4v4h-4zM168 212h4v4h-4zM160 228h4v4h-4zM156 232h4v4h-4zM136 236h4v4h-4zM132 240h4v4h-4zM132 244h4v4h-4zM132 248h4v4h-4zM132 252h4v4h-4z"/><path fill="#4e4e4e" d="M300 148h4v4h-4zM304 148h4v4h-4zM308 148h4v4h-4zM312 148h4v4h-4zM316 148h4v4h-4zM280 152h4v4h-4zM260 160h4v4h-4zM244 172h4v4h-4zM196 180h4v4h-4zM224 180h4v4h-4zM172 200h4v4h-4zM164 224h4v4h-4zM148 236h4v4h-4zM152 236h4v4h-4z"/><path fill="#4f4f4f" d="M284 152h4v4h-4zM220 180h4v4h-4zM188 184h4v4h-4zM168 216h4v4h-4zM140 236h4v4h-4zM144 236h4v4h-4zM136 240h4v4h-4zM136 244h4v4h-4zM136 248h4v4h-4zM136 252h4v4h-4z"/><path fill="#505050" d="M272 156h4v4h-4zM256 164h4v4h-4zM240 176h4v4h-4zM200 180h4v4h-4zM232 180h4v4h-4zM184 188h4v4h-4zM148 240h4v4h-4zM152 240h4v4h-4zM148 244h4v4h-4zM152 244h4v4h-4zM148 248h4v4h-4zM152 248h4v4h-4zM148 252h4v4h-4zM152 252h4v4h-4z"/><path fill="#515151" d="M288 152h4v4h-4zM212 180h4v4h-4zM216 180h4v4h-4zM180 192h4v4h-4zM176 196h4v4h-4zM164 228h4v4h-4zM160 232h4v4h-4zM156 236h4v4h-4zM140 240h4v4h-4zM144 240h4v4h-4zM140 244h4v4h-4zM144 244h4v4h-4zM140 248h4v4h-4zM144 248h4v4h-4zM140 252h4v4h-4zM144 252h4v4h-4z"/><path fill="#525252" d="M292 152h4v4h-4zM264 160h4v4h-4zM252 168h4v4h-4zM204 180h4v4h-4zM208 180h4v4h-4zM192 184h4v4h-4zM172 204h4v4h-4zM168 220h4v4h-4z"/><path fill="#535353" d="M296 152h4v4h-4zM276 156h4v4h-4zM248 172h4v4h-4zM228 184h4v4h-4zM188 188h4v4h-4zM156 240h4v4h-4zM156 244h4v4h-4zM156 248h4v4h-4zM156 252h4v4h-4z"/><path fill="#545454" d="M300 152h4v4h-4zM304 152h4v4h-4zM308 152h4v4h-4zM312 152h4v4h-4zM316 152h4v4h-4zM260 164h4v4h-4zM244 176h4v4h-4zM236 180h4v4h-4zM196 184h4v4h-4zM224 184h4v4h-4zM184 192h4v4h-4zM172 208h4v4h-4z"/><path fill="#555555" d="M280 156h4v4h-4zM268 160h4v4h-4zM220 184h4v4h-4zM164 232h4v4h-4zM160 236h4v4h-4z"/><path fill="#565656" d="M284 156h4v4h-4zM256 168h4v4h-4zM200 184h4v4h-4zM232 184h4v4h-4zM192 188h4v4h-4zM180 196h4v4h-4zM168 224h4v4h-4z"/><path fill="#575757" d="M272 160h4v4h-4zM208 184h4v4h-4zM212 184h4v4h-4zM216 184h4v4h-4zM176 200h4v4h-4zM172 212h4v4h-4zM160 240h4v4h-4zM160 244h4v4h-4zM160 248h4v4h-4zM160 252h4v4h-4z"/><path fill="#585858" d="M288 156h4v4h-4zM264 164h4v4h-4zM252 172h4v4h-4zM240 180h4v4h-4zM204 184h4v4h-4zM224 188h4v4h-4zM228 188h4v4h-4zM188 192h4v4h-4z"/><path fill="#595959" d="M292 156h4v4h-4zM196 188h4v4h-4zM220 188h4v4h-4zM184 196h4v4h-4zM168 228h4v4h-4zM164 236h4v4h-4z"/><path fill="#5a5a5a" d="M296 156h4v4h-4zM276 160h4v4h-4zM248 176h4v4h-4zM236 184h4v4h-4zM232 188h4v4h-4zM192 192h4v4h-4zM172 216h4v4h-4z"/><path fill="#5b5b5b" d="M300 156h4v4h-4zM304 156h4v4h-4zM308 156h4v4h-4zM312 156h4v4h-4zM316 156h4v4h-4zM260 168h4v4h-4zM200 188h4v4h-4zM212 188h4v4h-4zM216 188h4v4h-4zM228 192h4v4h-4zM180 200h4v4h-4zM176 204h4v4h-4zM164 240h4v4h-4zM164 244h4v4h-4zM164 248h4v4h-4zM164 252h4v4h-4z"/><path fill="#5c5c5c" d="M280 160h4v4h-4zM268 164h4v4h-4zM204 188h4v4h-4zM208 188h4v4h-4zM224 192h4v4h-4zM188 196h4v4h-4z"/><path fill="#5d5d5d" d="M256 172h4v4h-4zM244 180h4v4h-4zM196 192h4v4h-4zM172 220h4v4h-4zM168 232h4v4h-4z"/><path fill="#5e5e5e" d="M284 160h4v4h-4zM240 184h4v4h-4zM236 188h4v4h-4zM220 192h4v4h-4zM232 192h4v4h-4zM184 200h4v4h-4zM176 208h4v4h-4z"/><path fill="#5f5f5f" d="M288 160h4v4h-4zM272 164h4v4h-4zM252 176h4v4h-4zM200 192h4v4h-4zM216 192h4v4h-4zM192 196h4v4h-4zM228 196h4v4h-4z"/><path fill="#606060" d="M292 160h4v4h-4zM264 168h4v4h-4zM204 192h4v4h-4zM208 192h4v4h-4zM212 192h4v4h-4zM224 196h4v4h-4zM180 204h4v4h-4zM172 224h4v4h-4z"/><path fill="#616161" d="M296 160h4v4h-4zM300 160h4v4h-4zM240 188h4v4h-4zM236 192h4v4h-4zM196 196h4v4h-4zM232 196h4v4h-4zM188 200h4v4h-4zM176 212h4v4h-4zM168 236h4v4h-4z"/><path fill="#626262" d="M304 160h4v4h-4zM308 160h4v4h-4zM312 160h4v4h-4zM316 160h4v4h-4zM276 164h4v4h-4zM260 172h4v4h-4zM248 180h4v4h-4zM220 196h4v4h-4zM184 204h4v4h-4z"/><path fill="#636363" d="M268 168h4v4h-4zM244 184h4v4h-4zM200 196h4v4h-4zM216 196h4v4h-4zM192 200h4v4h-4zM228 200h4v4h-4zM180 208h4v4h-4zM172 228h4v4h-4zM168 240h4v4h-4zM168 244h4v4h-4zM168 248h4v4h-4zM168 252h4v4h-4z"/><path fill="#646464" d="M280 164h4v4h-4zM256 176h4v4h-4zM240 192h4v4h-4zM204 196h4v4h-4zM208 196h4v4h-4zM212 196h4v4h-4zM236 196h4v4h-4zM224 200h4v4h-4zM176 216h4v4h-4z"/><path fill="#656565" d="M284 164h4v4h-4zM196 200h4v4h-4zM232 200h4v4h-4zM188 204h4v4h-4z"/><path fill="#666666" d="M288 164h4v4h-4zM272 168h4v4h-4zM220 200h4v4h-4zM184 208h4v4h-4zM172 232h4v4h-4z"/><path fill="#676767" d="M292 164h4v4h-4zM296 164h4v4h-4zM264 172h4v4h-4zM252 180h4v4h-4zM244 188h4v4h-4zM240 196h4v4h-4zM200 200h4v4h-4zM216 200h4v4h-4zM236 200h4v4h-4zM192 204h4v4h-4zM228 204h4v4h-4zM180 212h4v4h-4zM176 220h4v4h-4z"/><path fill="#686868" d="M300 164h4v4h-4zM304 164h4v4h-4zM308 164h4v4h-4zM312 164h4v4h-4zM316 164h4v4h-4zM248 184h4v4h-4zM204 200h4v4h-4zM208 200h4v4h-4zM212 200h4v4h-4zM224 204h4v4h-4z"/><path fill="#696969" d="M276 168h4v4h-4zM260 176h4v4h-4zM196 204h4v4h-4zM232 204h4v4h-4zM188 208h4v4h-4zM176 224h4v4h-4z"/><path fill="#6a6a6a" d="M268 172h4v4h-4zM240 200h4v4h-4zM220 204h4v4h-4zM184 212h4v4h-4zM180 216h4v4h-4zM172 236h4v4h-4z"/><path fill="#6b6b6b" d="M280 168h4v4h-4zM244 192h4v4h-4zM200 204h4v4h-4zM236 204h4v4h-4zM228 208h4v4h-4z"/><path fill="#6c6c6c" d="M284 168h4v4h-4zM288 168h4v4h-4zM256 180h4v4h-4zM216 204h4v4h-4zM192 208h4v4h-4zM176 228h4v4h-4zM172 240h4v4h-4z"/><path fill="#6d6d6d" d="M292 168h4v4h-4zM296 168h4v4h-4zM272 172h4v4h-4zM248 188h4v4h-4zM204 204h4v4h-4zM208 204h4v4h-4zM212 204h4v4h-4zM224 208h4v4h-4zM232 208h4v4h-4zM188 212h4v4h-4zM180 220h4v4h-4zM172 244h4v4h-4zM172 248h4v4h-4zM172 252h4v4h-4z"/><path fill="#6e6e6e" d="M300 168h4v4h-4zM304 168h4v4h-4zM308 168h4v4h-4zM312 168h4v4h-4zM316 168h4v4h-4zM264 176h4v4h-4zM252 184h4v4h-4zM244 196h4v4h-4zM240 204h4v4h-4zM196 208h4v4h-4zM184 216h4v4h-4z"/><path fill="#6f6f6f" d="M220 208h4v4h-4zM236 208h4v4h-4z"/><path fill="#707070" d="M276 172h4v4h-4zM260 180h4v4h-4zM192 212h4v4h-4zM228 212h4v4h-4zM176 232h4v4h-4z"/><path fill="#717171" d="M268 176h4v4h-4zM200 208h4v4h-4zM232 212h4v4h-4zM180 224h4v4h-4z"/><path fill="#727272" d="M280 172h4v4h-4zM284 172h4v4h-4zM256 184h4v4h-4zM248 192h4v4h-4zM244 200h4v4h-4zM204 208h4v4h-4zM208 208h4v4h-4zM212 208h4v4h-4zM216 208h4v4h-4zM224 212h4v4h-4zM188 216h4v4h-4zM184 220h4v4h-4z"/><path fill="#737373" d="M288 172h4v4h-4zM292 172h4v4h-4zM296 172h4v4h-4zM300 172h4v4h-4zM252 188h4v4h-4zM240 208h4v4h-4zM196 212h4v4h-4z"/><path fill="#747474" d="M304 172h4v4h-4zM308 172h4v4h-4zM312 172h4v4h-4zM316 172h4v4h-4zM272 176h4v4h-4zM220 212h4v4h-4zM236 212h4v4h-4zM180 228h4v4h-4zM176 236h4v4h-4z"/><path fill="#757575" d="M264 180h4v4h-4zM192 216h4v4h-4zM228 216h4v4h-4z"/><path fill="#767676" d="M244 204h4v4h-4zM200 212h4v4h-4zM232 216h4v4h-4zM176 240h4v4h-4zM176 244h4v4h-4zM176 248h4v4h-4zM176 252h4v4h-4z"/><path fill="#777777" d="M276 176h4v4h-4zM260 184h4v4h-4zM248 196h4v4h-4zM216 212h4v4h-4zM240 212h4v4h-4zM224 216h4v4h-4zM188 220h4v4h-4zM184 224h4v4h-4z"/><path fill="#787878" d="M268 180h4v4h-4zM204 212h4v4h-4zM208 212h4v4h-4zM212 212h4v4h-4zM196 216h4v4h-4zM180 232h4v4h-4z"/><path fill="#797979" d="M280 176h4v4h-4zM284 176h4v4h-4zM288 176h4v4h-4zM292 176h4v4h-4zM296 176h4v4h-4zM300 176h4v4h-4zM304 176h4v4h-4zM308 176h4v4h-4zM312 176h4v4h-4zM316 176h4v4h-4zM256 188h4v4h-4zM252 192h4v4h-4zM236 216h4v4h-4z"/><path fill="#7a7a7a" d="M220 216h4v4h-4z"/><path fill="#7b7b7b" d="M272 180h4v4h-4zM244 208h4v4h-4zM192 220h4v4h-4zM184 228h4v4h-4z"/><path fill="#7c7c7c" d="M264 184h4v4h-4zM248 200h4v4h-4zM200 216h4v4h-4zM228 220h4v4h-4zM188 224h4v4h-4zM180 236h4v4h-4z"/><path fill="#7d7d7d" d="M276 180h4v4h-4zM292 180h4v4h-4zM216 216h4v4h-4zM240 216h4v4h-4zM232 220h4v4h-4z"/><path fill="#7e7e7e" d="M284 180h4v4h-4zM288 180h4v4h-4zM296 180h4v4h-4zM300 180h4v4h-4zM304 180h4v4h-4zM308 180h4v4h-4zM312 180h4v4h-4zM316 180h4v4h-4zM260 188h4v4h-4zM204 216h4v4h-4zM208 216h4v4h-4zM212 216h4v4h-4zM224 220h4v4h-4z"/><path fill="#7f7f7f" d="M280 180h4v4h-4zM268 184h4v4h-4zM256 192h4v4h-4zM252 196h4v4h-4zM196 220h4v4h-4zM180 240h4v4h-4zM180 244h4v4h-4zM180 248h4v4h-4zM180 252h4v4h-4z"/><path fill="#808080" d="M244 212h4v4h-4zM236 220h4v4h-4zM184 232h4v4h-4z"/><path fill="#818181" d="M248 204h4v4h-4zM220 220h4v4h-4zM192 224h4v4h-4z"/><path fill="#828282" d="M272 184h4v4h-4zM264 188h4v4h-4zM200 220h4v4h-4zM188 228h4v4h-4z"/><path fill="#838383" d="M288 184h4v4h-4zM292 184h4v4h-4zM296 184h4v4h-4zM300 184h4v4h-4zM240 220h4v4h-4zM228 224h4v4h-4z"/><path fill="#848484" d="M276 184h4v4h-4zM284 184h4v4h-4zM304 184h4v4h-4zM308 184h4v4h-4zM312 184h4v4h-4zM316 184h4v4h-4zM260 192h4v4h-4zM216 220h4v4h-4zM232 224h4v4h-4zM184 236h4v4h-4z"/><path fill="#858585" d="M280 184h4v4h-4zM256 196h4v4h-4zM252 200h4v4h-4zM204 220h4v4h-4zM208 220h4v4h-4zM212 220h4v4h-4zM196 224h4v4h-4zM224 224h4v4h-4z"/><path fill="#868686" d="M268 188h4v4h-4zM248 208h4v4h-4zM244 216h4v4h-4zM236 224h4v4h-4z"/><path fill="#878787" d="M192 228h4v4h-4zM188 232h4v4h-4zM184 240h4v4h-4zM184 244h4v4h-4zM184 248h4v4h-4zM184 252h4v4h-4z"/><path fill="#888888" d="M272 188h4v4h-4zM220 224h4v4h-4z"/><path fill="#898989" d="M264 192h4v4h-4zM200 224h4v4h-4zM228 228h4v4h-4z"/><path fill="#8a8a8a" d="M288 188h4v4h-4zM292 188h4v4h-4zM296 188h4v4h-4zM300 188h4v4h-4zM304 188h4v4h-4zM308 188h4v4h-4zM312 188h4v4h-4zM316 188h4v4h-4zM260 196h4v4h-4zM240 224h4v4h-4z"/><path fill="#8b8b8b" d="M276 188h4v4h-4zM284 188h4v4h-4zM252 204h4v4h-4zM248 212h4v4h-4zM216 224h4v4h-4zM232 228h4v4h-4z"/><path fill="#8c8c8c" d="M280 188h4v4h-4zM268 192h4v4h-4zM256 200h4v4h-4zM244 220h4v4h-4zM204 224h4v4h-4zM208 224h4v4h-4zM212 224h4v4h-4zM196 228h4v4h-4zM224 228h4v4h-4zM188 236h4v4h-4z"/><path fill="#8d8d8d" d="M236 228h4v4h-4zM192 232h4v4h-4z"/><path fill="#8f8f8f" d="M272 192h4v4h-4zM264 196h4v4h-4zM220 228h4v4h-4zM228 232h4v4h-4zM188 240h4v4h-4z"/><path fill="#909090" d="M260 200h4v4h-4zM200 228h4v4h-4zM240 228h4v4h-4zM188 244h4v4h-4zM188 248h4v4h-4zM188 252h4v4h-4z"/><path fill="#919191" d="M276 192h4v4h-4zM292 192h4v4h-4zM296 192h4v4h-4zM300 192h4v4h-4zM304 192h4v4h-4zM308 192h4v4h-4zM312 192h4v4h-4zM316 192h4v4h-4zM252 208h4v4h-4zM248 216h4v4h-4zM196 232h4v4h-4zM224 232h4v4h-4zM232 232h4v4h-4z"/><path fill="#929292" d="M284 192h4v4h-4zM288 192h4v4h-4zM268 196h4v4h-4zM256 204h4v4h-4zM244 224h4v4h-4zM204 228h4v4h-4zM212 228h4v4h-4zM216 228h4v4h-4zM192 236h4v4h-4z"/><path fill="#939393" d="M280 192h4v4h-4zM208 228h4v4h-4z"/><path fill="#949494" d="M264 200h4v4h-4zM220 232h4v4h-4zM236 232h4v4h-4z"/><path fill="#959595" d="M272 196h4v4h-4zM200 232h4v4h-4zM228 236h4v4h-4zM192 240h4v4h-4z"/><path fill="#969696" d="M260 204h4v4h-4zM252 212h4v4h-4zM196 236h4v4h-4zM192 244h4v4h-4zM192 248h4v4h-4zM192 252h4v4h-4z"/><path fill="#979797" d="M276 196h4v4h-4zM256 208h4v4h-4zM248 220h4v4h-4zM216 232h4v4h-4zM240 232h4v4h-4zM224 236h4v4h-4zM232 236h4v4h-4z"/><path fill="#989898" d="M268 200h4v4h-4zM204 232h4v4h-4zM208 232h4v4h-4zM212 232h4v4h-4z"/><path fill="#999999" d="M280 196h4v4h-4zM284 196h4v4h-4zM288 196h4v4h-4zM292 196h4v4h-4zM296 196h4v4h-4zM244 228h4v4h-4zM196 240h4v4h-4zM228 240h4v4h-4zM228 244h4v4h-4zM228 248h4v4h-4zM228 252h4v4h-4z"/><path fill="#9a9a9a" d="M300 196h4v4h-4zM304 196h4v4h-4zM308 196h4v4h-4zM312 196h4v4h-4zM316 196h4v4h-4zM264 204h4v4h-4zM200 236h4v4h-4zM220 236h4v4h-4zM236 236h4v4h-4zM224 240h4v4h-4zM196 244h4v4h-4zM196 248h4v4h-4zM196 252h4v4h-4z"/><path fill="#9b9b9b" d="M272 200h4v4h-4zM260 208h4v4h-4zM232 240h4v4h-4zM224 244h4v4h-4zM232 244h4v4h-4zM224 248h4v4h-4zM232 248h4v4h-4zM224 252h4v4h-4zM232 252h4v4h-4z"/><path fill="#9c9c9c" d="M256 212h4v4h-4zM252 216h4v4h-4zM204 236h4v4h-4zM216 236h4v4h-4z"/><path fill="#9d9d9d" d="M276 200h4v4h-4zM268 204h4v4h-4zM248 224h4v4h-4zM208 236h4v4h-4zM212 236h4v4h-4zM200 240h4v4h-4zM220 240h4v4h-4zM200 244h4v4h-4zM220 244h4v4h-4zM200 248h4v4h-4zM220 248h4v4h-4zM200 252h4v4h-4zM220 252h4v4h-4z"/><path fill="#9e9e9e" d="M240 236h4v4h-4zM236 240h4v4h-4zM236 244h4v4h-4zM236 248h4v4h-4zM236 252h4v4h-4z"/><path fill="#9f9f9f" d="M280 200h4v4h-4zM264 208h4v4h-4zM204 240h4v4h-4zM216 240h4v4h-4zM216 244h4v4h-4zM216 248h4v4h-4zM216 252h4v4h-4z"/><path fill="#a0a0a0" d="M284 200h4v4h-4zM260 212h4v4h-4zM244 232h4v4h-4zM208 240h4v4h-4zM212 240h4v4h-4zM204 244h4v4h-4zM208 244h4v4h-4zM212 244h4v4h-4zM204 248h4v4h-4zM208 248h4v4h-4zM212 248h4v4h-4zM204 252h4v4h-4zM208 252h4v4h-4zM212 252h4v4h-4z"/><path fill="#a1a1a1" d="M288 200h4v4h-4zM292 200h4v4h-4zM272 204h4v4h-4zM252 220h4v4h-4zM240 240h4v4h-4z"/><path fill="#a2a2a2" d="M296 200h4v4h-4zM300 200h4v4h-4zM304 200h4v4h-4zM308 200h4v4h-4zM312 200h4v4h-4zM316 200h4v4h-4zM268 208h4v4h-4zM256 216h4v4h-4zM240 244h4v4h-4zM240 248h4v4h-4zM240 252h4v4h-4z"/><path fill="#a3a3a3" d="M248 228h4v4h-4z"/><path fill="#a4a4a4" d="M276 204h4v4h-4zM264 212h4v4h-4z"/><path fill="#a6a6a6" d="M280 204h4v4h-4zM272 208h4v4h-4zM260 216h4v4h-4z"/><path fill="#a7a7a7" d="M284 204h4v4h-4zM252 224h4v4h-4zM244 236h4v4h-4z"/><path fill="#a8a8a8" d="M288 204h4v4h-4zM268 212h4v4h-4z"/><path fill="#a9a9a9" d="M292 204h4v4h-4zM256 220h4v4h-4z"/><path fill="#aaaaaa" d="M296 204h4v4h-4zM300 204h4v4h-4zM276 208h4v4h-4zM264 216h4v4h-4z"/><path fill="#ababab" d="M304 204h4v4h-4zM308 204h4v4h-4zM312 204h4v4h-4zM316 204h4v4h-4zM248 232h4v4h-4zM244 240h4v4h-4zM244 244h4v4h-4zM244 248h4v4h-4zM244 252h4v4h-4z"/><path fill="#acacac" d="M272 212h4v4h-4z"/><path fill="#adadad" d="M280 208h4v4h-4zM260 220h4v4h-4z"/><path fill="#aeaeae" d="M268 216h4v4h-4zM252 228h4v4h-4z"/><path fill="#afafaf" d="M284 208h4v4h-4zM256 224h4v4h-4z"/><path fill="#b0b0b0" d="M288 208h4v4h-4z"/><path fill="#b1b1b1" d="M292 208h4v4h-4zM276 212h4v4h-4z"/><path fill="#b2b2b2" d="M296 208h4v4h-4zM264 220h4v4h-4z"/><path fill="#b3b3b3" d="M300 208h4v4h-4zM304 208h4v4h-4zM308 208h4v4h-4zM312 208h4v4h-4zM316 208h4v4h-4zM272 216h4v4h-4zM248 236h4v4h-4z"/><path fill="#b4b4b4" d="M280 212h4v4h-4z"/><path fill="#b5b5b5" d="M260 224h4v4h-4z"/><path fill="#b6b6b6" d="M284 212h4v4h-4zM256 228h4v4h-4zM252 232h4v4h-4z"/><path fill="#b7b7b7" d="M268 220h4v4h-4zM248 240h4v4h-4z"/><path fill="#b8b8b8" d="M288 212h4v4h-4zM276 216h4v4h-4zM248 244h4v4h-4zM248 248h4v4h-4zM248 252h4v4h-4z"/><path fill="#b9b9b9" d="M292 212h4v4h-4z"/><path fill="#bababa" d="M296 212h4v4h-4z"/><path fill="#bbbbbb" d="M300 212h4v4h-4zM264 224h4v4h-4z"/><path fill="#bcbcbc" d="M304 212h4v4h-4zM308 212h4v4h-4zM312 212h4v4h-4zM316 212h4v4h-4zM280 216h4v4h-4z"/><path fill="#bdbdbd" d="M272 220h4v4h-4zM260 228h4v4h-4z"/><path fill="#bebebe" d="M284 216h4v4h-4zM252 236h4v4h-4z"/><path fill="#bfbfbf" d="M256 232h4v4h-4z"/><path fill="#c0c0c0" d="M288 216h4v4h-4z"/><path fill="#c1c1c1" d="M268 224h4v4h-4z"/><path fill="#c2c2c2" d="M292 216h4v4h-4zM276 220h4v4h-4z"/><path fill="#c3c3c3" d="M296 216h4v4h-4z"/><path fill="#c4c4c4" d="M300 216h4v4h-4zM264 228h4v4h-4zM252 240h4v4h-4zM252 244h4v4h-4zM252 248h4v4h-4zM252 252h4v4h-4z"/><path fill="#c5c5c5" d="M304 216h4v4h-4zM308 216h4v4h-4zM312 216h4v4h-4zM316 216h4v4h-4z"/><path fill="#c6c6c6" d="M280 220h4v4h-4z"/><path fill="#c7c7c7" d="M272 224h4v4h-4z"/><path fill="#c8c8c8" d="M284 220h4v4h-4zM260 232h4v4h-4z"/><path fill="#c9c9c9" d="M256 236h4v4h-4z"/><path fill="#cacaca" d="M288 220h4v4h-4z"/><path fill="#cbcbcb" d="M268 228h4v4h-4z"/><path fill="#cccccc" d="M292 220h4v4h-4zM276 224h4v4h-4z"/><path fill="#cdcdcd" d="M296 220h4v4h-4z"/><path fill="#cecece" d="M300 220h4v4h-4z"/><path fill="#cfcfcf" d="M304 220h4v4h-4zM308 220h4v4h-4zM312 220h4v4h-4zM316 220h4v4h-4zM256 240h4v4h-4zM256 244h4v4h-4zM256 248h4v4h-4zM256 252h4v4h-4z"/><path fill="#d0d0d0" d="M264 232h4v4h-4z"/><path fill="#d1d1d1" d="M280 224h4v4h-4zM272 228h4v4h-4z"/><path fill="#d2d2d2" d="M260 236h4v4h-4z"/><path fill="#d3d3d3" d="M284 224h4v4h-4z"/><path fill="#d5d5d5" d="M288 224h4v4h-4z"/><path fill="#d6d6d6" d="M292 224h4v4h-4z"/><path fill="#d7d7d7" d="M296 224h4v4h-4zM276 228h4v4h-4zM268 232h4v4h-4z"/><path fill="#d9d9d9" d="M300 224h4v4h-4zM304 224h4v4h-4zM308 224h4v4h-4zM312 224h4v4h-4zM316 224h4v4h-4zM260 240h4v4h-4zM260 244h4v4h-4zM260 248h4v4h-4zM260 252h4v4h-4z"/><path fill="#dbdbdb" d="M280 228h4v4h-4z"/><path fill="#dcdcdc" d="M264 236h4v4h-4z"/><path fill="#dddddd" d="M284 228h4v4h-4zM272 232h4v4h-4z"/><path fill="#dfdfdf" d="M288 228h4v4h-4z"/><path fill="#e1e1e1" d="M292 228h4v4h-4z"/><path fill="#e2e2e2" d="M296 228h4v4h-4z"/><path fill="#e3e3e3" d="M300 228h4v4h-4zM276 232h4v4h-4zM268 236h4v4h-4zM264 240h4v4h-4zM264 244h4v4h-4zM264 248h4v4h-4zM264 252h4v4h-4z"/><path fill="#e4e4e4" d="M304 228h4v4h-4zM308 228h4v4h-4zM312 228h4v4h-4zM316 228h4v4h-4z"/><path fill="#e7e7e7" d="M280 232h4v4h-4z"/><path fill="#e9e9e9" d="M284 232h4v4h-4zM272 236h4v4h-4z"/><path fill="#ebebeb" d="M288 232h4v4h-4zM268 240h4v4h-4zM268 244h4v4h-4zM268 248h4v4h-4zM268 252h4v4h-4z"/><path fill="#ececec" d="M292 232h4v4h-4z"/><path fill="#ededed" d="M296 232h4v4h-4z"/><path fill="#eeeeee" d="M300 232h4v4h-4z"/><path fill="#efefef" d="M304 232h4v4h-4zM308 232h4v4h-4zM312 232h4v4h-4zM316 232h4v4h-4zM276 236h4v4h-4z"/><path fill="#f1f1f1" d="M272 240h4v4h-4zM272 244h4v4h-4zM272 248h4v4h-4zM272 252h4v4h-4z"/><path fill="#f3f3f3" d="M280 236h4v4h-4z"/><path fill="#f5f5f5" d="M284 236h4v4h-4z"/><path fill="#f6f6f6" d="M288 236h4v4h-4zM276 240h4v4h-4z"/><path fill="#f7f7f7" d="M276 244h4v4h-4zM276 248h4v4h-4zM276 252h4v4h-4z"/><path fill="#f8f8f8" d="M292 236h4v4h-4zM296 236h4v4h-4z"/><path fill="#f9f9f9" d="M300 236h4v4h-4zM304 236h4v4h-4zM308 236h4v4h-4zM312 236h4v4h-4zM316 236h4v4h-4z"/><path fill="#fafafa" d="M280 240h4v4h-4z"/><path fill="#fbfbfb" d="M280 244h4v4h-4zM280 248h4v4h-4zM280 252h4v4h-4z"/><path fill="#fcfcfc" d="M284 240h4v4h-4zM284 244h4v4h-4zM284 248h4v4h-4zM284 252h4v4h-4z"/><path fill="#fdfdfd" d="M288 240h4v4h-4z"/><path fill="#fefefe" d="M288 244h4v4h-4zM288 248h4v4h-4zM288 252h4v4h-4z"/><path fill="#ffffff" d="M292 240h4v4h-4zM296 240h4v4h-4zM300 240h4v4h-4zM304 240h4v4h-4zM308 240h4v4h-4zM312 240h4v4h-4zM316 240h4v4h-4zM292 244h4v4h-4zM296 244h4v4h-4zM300 244h4v4h-4zM304 244h4v4h-4zM308 244h4v4h-4zM312 244h4v4h-4zM316 244h4v4h-4zM292 248h4v4h-4zM296 248h4v4h-4zM300 248h4v4h-4zM304 248h4v4h-4zM308 248h4v4h-4zM312 248h4v4h-4zM316 248h4v4h-4zM292 252h4v4h-4zM296 252h4v4h-4zM300 252h4v4h-4zM304 252h4v4h-4zM308 252h4v4h-4zM312 252h4v4h-4zM316 252h4v4h-4z"/></g>
<line x1="0" y1="183.5" x2="305" y2="183.5" stroke="#000028" stroke-width="0.6" opacity="0.55"/>
<line x1="15" y1="183.5" x2="98" y2="183.5" stroke="#c8b8c8" stroke-width="0.65" stroke-dasharray="1 0.8" opacity="0.8"/>
<line x1="108" y1="183.5" x2="111" y2="183.5" stroke="#c8c8e0" stroke-width="0.7" stroke-dasharray="1 0.8" opacity="0.7"/>
<line x1="172" y1="183.5" x2="299" y2="183.5" stroke="#ffffd0" stroke-width="0.6" stroke-dasharray="1.1 0.7" opacity="0.85"/>
<path d="M265.5 206.5q4-2.5 8 0.5q1.5 3.5 1 7q-1.5-5-4-6.5q-2.5-1-5-1z" fill="#3f7a1e" opacity="0.8"/><path d="M274 200.5q2.5-1.5 5-0.5q-2.5 0.8-5 0.5zM276.5 204q2 4 0 9.5q0.5-5-0-9.5z" fill="#4a7a20" opacity="0.7"/>
</svg>
<div style="left:6px;top:303.6px;width:589px;height:0.9px;background:#8a8780"></div>
<div class="t" style="left:5.8px;top:306.5px;font-size:4.9px;white-space:pre">X= 675 Pixel  Y= 787 Pixel  L= 41,72 cd/m²</div>
<div class="t" style="left:560px;width:30px;text-align:right;top:54.6px;font-size:5px">L (cd/m²)</div>
<div style="left:564.5px;top:60px;width:29.5px;height:242px;background:linear-gradient(180deg,#fff 0%,#ff0 20.4%,#f00 40.8%,#0f0 61.2%,#00f 81.7%,#00001a 100%)"></div>
<div class="cbl" style="top:78.3px"><span>160</span></div>
<div class="cbl" style="top:106.5px"><span>140</span></div>
<div class="cbl" style="top:134.7px"><span>120</span></div>
<div class="cbl" style="top:163.0px"><span>100</span></div>
<div class="cbl" style="top:191.2px"><span>80</span></div>
<div class="cbl" style="top:219.4px"><span>60</span></div>
<div class="cbl" style="top:247.7px"><span>40</span></div>
<div class="cbl" style="top:275.9px"><span>20</span></div>
<div class="cbl" style="top:61px;background:none"><span>175</span></div>
<div class="cbl" style="top:296.5px;left:573.4px;width:12.4px"><span>3.55</span></div>

<!-- cursor tab -->
<div style="left:4.5px;top:316px;width:22px;height:11px;background:#d8d5ce;border-left:0.6px solid #fff;border-top:0.6px solid #fff"></div>
<div style="left:26px;top:316.5px;width:0.9px;height:10px;background:#444"></div>
<div class="t tab" style="left:8px;top:318.6px">Cursor</div>

<!-- table -->
<div style="left:4.5px;top:327.3px;width:590.2px;height:19.4px;background:#fff;border:0.8px solid;border-color:#404040 #77746e #404040 #404040"></div>
<div style="left:5px;top:345.7px;width:589.6px;height:1.2px;background:#2a2a2a"></div>
<div class="hd" style="left:5px;width:13.4px"><span>Reg.</span></div>
<div class="hd" style="left:18.4px;width:18.4px"><span>Anz</span></div>
<div class="hd" style="left:36.8px;width:17.6px"><span>Mittel</span></div>
<div class="hd" style="left:54.4px;width:17px"><span>Sigma</span></div>
<div class="hd" style="left:71.4px;width:17.8px"><span>Min</span></div>
<div class="hd" style="left:89.2px;width:18.2px"><span>Max</span></div>
<div class="hd" style="left:107.4px;width:18.6px"><span>Fläche</span></div>
<div class="cell" style="left:5px;width:13px;justify-content:flex-start;padding-left:1px"><span>ZC</span></div>
<div class="cell" style="left:18.6px;width:17.8px"><span>1219</span></div>
<div class="cell" style="left:37.4px;width:16.6px;background:#ece9e0;color:#111;top:335.2px;height:8px"><span>41,73</span></div>
<div class="cell" style="left:55px;width:16.2px"><span>25,9</span></div>
<div class="cell" style="left:71.8px;width:17.2px"><span>8,246</span></div>
<div class="cell" style="left:89.6px;width:17.4px"><span>92,68</span></div>
<div class="cell" style="left:107.8px;width:18px"><span>1219</span></div>

<!-- chart panel -->
<div style="left:4px;top:349.4px;width:582.2px;height:114.2px;background:#e4e2dc"></div>
<div style="left:4px;top:349.4px;width:0.9px;height:114px;background:#8c8880"></div>
<div style="left:4px;top:349px;width:582px;height:0.7px;background:#b4b0a8"></div>
<div style="left:585.3px;top:375.4px;width:1px;height:88px;background:#5c5a56"></div>
<div style="left:5px;top:460.6px;width:580.4px;height:1.8px;background:#c2beb6"></div>
<div style="left:4px;top:462.4px;width:594.4px;height:1.2px;background:#64625e"></div>
<div style="left:8px;top:353px;width:574.4px;height:104px;background:#fff"></div>
<svg class="chart" width="600" height="469" viewBox="0 0 600 469">
<rect x="40.5" y="358.5" width="477.0" height="82.0" fill="#fff" stroke="none"/>
<path d="M47.50 358.5V440.5M86.04 358.5V440.5M124.58 358.5V440.5M163.12 358.5V440.5M201.66 358.5V440.5M240.20 358.5V440.5M278.74 358.5V440.5M317.28 358.5V440.5M355.82 358.5V440.5M394.36 358.5V440.5M432.90 358.5V440.5M471.44 358.5V440.5M509.98 358.5V440.5M40.5 437.90H517.5M40.5 428.32H517.5M40.5 418.74H517.5M40.5 409.16H517.5M40.5 399.58H517.5M40.5 390.00H517.5M40.5 380.42H517.5M40.5 370.84H517.5M40.5 361.26H517.5" stroke="#868686" stroke-width="0.55" stroke-dasharray="1 1.1" fill="none"/>
<polyline points="44.0,439.0 44.6,439.1 45.2,439.1 45.8,439.3 46.3,439.0 46.9,439.0 47.5,438.9 48.1,438.9 48.7,438.8 49.2,438.8 49.8,438.9 50.4,438.6 51.0,438.5 51.5,438.4 52.1,438.5 52.7,438.6 53.3,438.5 53.9,438.6 54.4,438.3 55.0,438.5 55.6,438.5 56.2,438.3 56.7,438.1 57.3,438.2 57.9,438.3 58.5,438.2 59.1,438.0 59.6,438.1 60.2,438.1 60.8,438.0 61.4,437.8 62.0,437.7 62.5,438.0 63.1,437.9 63.7,437.9 64.3,438.0 64.8,437.8 65.4,437.8 66.0,437.5 66.6,437.6 67.2,437.7 67.7,437.4 68.3,437.5 68.9,437.6 69.5,437.5 70.0,437.4 70.6,437.4 71.2,437.3 71.8,437.5 72.4,437.2 72.9,437.0 73.5,437.0 74.1,436.9 74.7,436.9 75.2,436.8 75.8,437.1 76.4,436.8 77.0,437.1 77.6,436.9 78.1,437.0 78.7,436.6 79.3,436.6 79.9,436.7 80.5,436.4 81.0,436.7 81.6,436.6 82.2,436.5 82.8,436.6 83.3,436.4 83.9,436.2 84.5,436.5 85.1,436.2 85.7,436.3 86.2,436.0 86.8,436.1 87.4,436.0 88.0,436.0 88.5,436.0 89.1,436.1 89.7,435.7 90.3,436.0 90.9,435.7 91.4,435.6 92.0,435.7 92.6,435.6 93.2,435.4 93.7,435.5 94.3,435.5 94.9,435.7 95.5,435.4 96.1,435.3 96.6,435.2 97.2,435.2 97.8,435.0 98.4,435.0 99.0,434.9 99.5,434.7 100.1,434.9 100.7,434.7 101.3,434.3 101.8,434.5 102.4,434.7 103.0,434.5 103.6,434.3 104.2,434.2 104.7,434.3 105.3,434.3 105.9,434.3 106.5,434.0 107.0,434.0 107.6,434.0 108.2,433.9 108.8,433.9 109.4,433.7 109.9,433.8 110.5,433.6 111.1,433.5 111.7,433.5 112.2,433.6 112.8,433.2 113.4,433.5 114.0,433.2 114.6,433.3 115.1,433.4 115.7,433.1 116.3,433.0 116.9,433.0 117.5,432.9 118.0,433.0 118.6,432.9 119.2,432.8 119.8,432.3 120.3,432.5 120.9,432.6 121.5,432.4 122.1,432.5 122.7,432.4 123.2,432.1 123.8,432.3 124.4,432.5 125.0,432.3 125.5,432.1 126.1,432.0 126.7,431.8 127.3,432.1 127.9,431.8 128.4,431.8 129.0,431.9 129.6,431.7 130.2,431.7 130.7,431.9 131.3,431.5 131.9,431.9 132.5,431.6 133.1,431.6 133.6,431.5 134.2,431.7 134.8,431.5 135.4,431.5 135.9,431.2 136.5,431.6 137.1,431.4 137.7,431.5 138.3,431.8 138.8,431.1 139.4,431.6 140.0,431.9 140.6,431.4 141.2,431.9 141.7,431.7 142.3,431.7 142.9,432.0 143.5,432.0 144.0,432.0 144.6,432.0 145.2,432.3 145.8,432.3 146.4,432.1 146.9,432.0 147.5,432.1 148.1,431.9 148.7,432.2 149.2,432.4 149.8,432.4 150.4,432.8 151.0,432.6 151.6,432.7 152.1,432.5 152.7,432.5 153.3,432.7 153.9,432.7 154.4,433.0 155.0,432.7 155.6,432.7 156.2,432.7 156.8,433.0 157.3,432.6 157.9,432.7 158.5,433.0 159.1,433.1 159.7,433.1 160.2,433.1 160.8,433.1 161.4,433.1 162.0,433.1 162.5,433.0 163.1,433.1 163.7,433.3 164.3,433.3 164.9,433.4 165.4,433.5 166.0,433.1 166.6,433.5 167.2,433.1 167.7,433.5 168.3,433.4 168.9,433.3 169.5,433.5 170.1,433.4 170.6,433.5 171.2,433.4 171.8,433.2 172.4,433.0 172.9,432.4 173.5,432.5 174.1,432.0 174.7,432.6 175.3,431.9 175.8,431.6 176.4,431.5 177.0,431.0 177.6,430.9 178.2,430.9 178.7,430.5 179.3,429.8 179.9,430.1 180.5,429.9 181.0,429.9 181.6,429.5 182.2,429.6 182.8,429.2 183.4,428.5 183.9,428.6 184.5,428.6 185.1,428.3 185.7,428.0 186.2,428.1 186.8,427.6 187.4,427.7 188.0,427.8 188.6,427.2 189.1,428.1 189.7,427.5 190.3,427.1 190.9,427.3 191.4,426.9 192.0,426.9 192.6,426.8 193.2,425.7 193.8,426.1 194.3,426.1 194.9,425.6 195.5,425.9 196.1,425.4 196.6,425.4 197.2,424.9 197.8,425.6 198.4,424.8 199.0,424.9 199.5,425.1 200.1,424.3 200.7,424.7 201.3,423.8 201.9,424.0 202.4,423.8 203.0,423.9 203.6,423.6 204.2,424.4 204.7,423.6 205.3,423.8 205.9,423.4 206.5,423.4 207.1,423.1 207.6,423.4 208.2,422.4 208.8,422.2 209.4,422.9 209.9,422.8 210.5,422.6 211.1,422.1 211.7,421.8 212.3,422.8 212.8,422.5 213.4,422.5 214.0,422.4 214.6,422.5 215.1,421.7 215.7,422.2 216.3,421.1 216.9,421.2 217.5,421.8 218.0,421.7 218.6,421.5 219.2,420.6 219.8,421.4 220.4,421.5 220.9,420.9 221.5,420.6 222.1,420.9 222.7,419.9 223.2,420.3 223.8,420.1 224.4,420.5 225.0,420.1 225.6,420.0 226.1,420.7 226.7,419.6 227.3,420.3 227.9,419.5 228.4,420.0 229.0,418.5 229.6,419.0 230.2,418.7 230.8,418.6 231.3,419.4 231.9,419.7 232.5,418.7 233.1,418.1 233.6,418.3 234.2,417.9 234.8,417.8 235.4,418.7 236.0,417.8 236.5,417.0 237.1,418.0 237.7,418.5 238.3,417.6 238.9,417.6 239.4,417.1 240.0,417.5 240.6,417.0 241.2,417.9 241.7,416.5 242.3,416.1 242.9,416.1 243.5,417.3 244.1,416.3 244.6,417.7 245.2,416.2 245.8,416.2 246.4,416.6 246.9,415.9 247.5,415.9 248.1,415.4 248.7,415.8 249.3,415.8 249.8,416.8 250.4,416.5 251.0,416.2 251.6,415.9 252.1,416.0 252.7,415.3 253.3,416.4 253.9,416.2 254.5,416.0 255.0,416.2 255.6,415.9 256.2,416.4 256.8,415.5 257.4,416.3 257.9,415.7 258.5,416.2 259.1,415.6 259.7,416.9 260.2,416.0 260.8,416.3 261.4,416.0 262.0,415.5 262.6,416.5 263.1,416.5 263.7,416.3 264.3,415.7 264.9,416.7 265.4,415.7 266.0,416.3 266.6,416.2 267.2,415.8 267.8,415.4 268.3,415.8 268.9,415.7 269.5,415.4 270.1,415.5 270.6,416.6 271.2,415.5 271.8,415.2 272.4,414.6 273.0,414.1 273.5,414.7 274.1,415.0 274.7,415.4 275.3,414.9 275.8,414.5 276.4,414.2 277.0,415.2 277.6,414.6 278.2,414.3 278.7,413.7 279.3,414.3 279.9,414.6 280.5,414.5 281.1,414.2 281.6,414.2 282.2,413.3 282.8,413.0 283.4,413.0 283.9,412.7 284.5,413.3 285.1,412.8 285.7,413.0 286.3,412.6 286.8,411.9 287.4,412.4 288.0,413.2 288.6,412.2 289.1,412.3 289.7,412.5 290.3,412.0 290.9,410.9 291.5,410.4 292.0,411.4 292.6,410.4 293.2,410.2 293.8,411.3 294.3,410.5 294.9,410.4 295.5,410.1 296.1,410.9 296.7,410.1 297.2,409.2 297.8,408.9 298.4,408.3 299.0,409.3 299.6,407.8 300.1,408.2 300.7,409.2 301.3,407.7 301.9,408.1 302.4,407.3 303.0,407.4 303.6,406.4 304.2,406.7 304.8,406.8 305.3,405.8 305.9,406.0 306.5,406.1 307.1,404.8 307.6,405.6 308.2,405.5 308.8,405.2 309.4,405.6 310.0,404.7 310.5,402.9 311.1,404.5 311.7,403.6 312.3,404.1 312.8,403.5 313.4,401.8 314.0,402.0 314.6,402.8 315.2,402.1 315.7,402.4 316.3,402.2 316.9,402.0 317.5,401.8 318.1,400.7 318.6,400.3 319.2,400.2 319.8,400.5 320.4,401.2 320.9,400.1 321.5,400.5 322.1,399.0 322.7,399.1 323.3,398.7 323.8,399.3 324.4,400.3 325.0,398.0 325.6,397.6 326.1,399.5 326.7,398.1 327.3,397.1 327.9,398.6 328.5,396.2 329.0,397.7 329.6,398.1 330.2,396.0 330.8,396.6 331.3,397.2 331.9,395.8 332.5,397.8 333.1,394.7 333.7,396.6 334.2,395.5 334.8,395.9 335.4,395.0 336.0,394.5 336.6,395.7 337.1,394.2 337.7,394.9 338.3,395.1 338.9,394.6 339.4,395.1 340.0,394.7 340.6,393.1 341.2,393.9 341.8,392.7 342.3,393.1 342.9,394.2 343.5,394.8 344.1,393.6 344.6,392.7 345.2,392.7 345.8,393.3 346.4,391.6 347.0,393.8 347.5,393.2 348.1,391.9 348.7,389.9 349.3,391.3 349.8,392.4 350.4,390.9 351.0,390.6 351.6,390.3 352.2,391.3 352.7,391.5 353.3,390.5 353.9,390.1 354.5,388.9 355.0,388.3 355.6,390.7 356.2,390.4 356.8,390.0 357.4,390.1 357.9,389.3 358.5,389.3 359.1,389.4 359.7,388.4 360.3,389.7 360.8,390.4 361.4,390.8 362.0,390.3 362.6,390.2 363.1,390.9 363.7,388.5 364.3,388.9 364.9,389.4 365.5,389.8 366.0,390.3 366.6,389.7 367.2,387.1 367.8,390.8 368.3,388.7 368.9,388.3 369.5,388.9 370.1,389.4 370.7,388.5 371.2,390.2 371.8,388.8 372.4,388.1 373.0,390.4 373.5,390.3 374.1,389.5 374.7,388.8 375.3,388.5 375.9,389.2 376.4,390.5 377.0,391.0 377.6,389.9 378.2,389.8 378.8,391.3 379.3,390.3 379.9,390.2 380.5,389.6 381.1,391.5 381.6,390.2 382.2,391.8 382.8,391.3 383.4,391.1 384.0,389.7 384.5,388.3 385.1,391.0 385.7,390.9 386.3,390.6 386.8,392.7 387.4,390.9 388.0,392.8 388.6,390.4 389.2,390.6 389.7,391.5 390.3,392.8 390.9,390.7 391.5,392.0 392.0,392.2 392.6,391.9 393.2,394.0 393.8,392.2 394.4,391.8 394.9,392.4 395.5,392.6 396.1,393.6 396.7,392.3 397.3,392.7 397.8,392.9 398.4,393.5 399.0,392.3 399.6,392.0 400.1,392.8 400.7,392.4 401.3,392.1 401.9,391.9 402.5,392.9 403.0,393.0 403.6,393.0 404.2,392.3 404.8,391.6 405.3,391.1 405.9,392.0 406.5,391.3 407.1,392.0 407.7,389.8 408.2,391.0 408.8,390.1 409.4,390.8 410.0,390.2 410.5,390.3 411.1,387.9 411.7,388.9 412.3,389.1 412.9,389.6 413.4,389.0 414.0,387.7 414.6,386.4 415.2,389.0 415.7,388.3 416.3,387.3 416.9,387.5 417.5,388.2 418.1,386.4 418.6,385.4 419.2,387.4 419.8,385.4 420.4,384.4 421.0,384.2 421.5,385.3 422.1,382.3 422.7,383.8 423.3,384.9 423.8,382.9 424.4,384.7 425.0,382.4 425.6,384.4 426.2,382.0 426.7,383.2 427.3,381.2 427.9,381.3 428.5,381.3 429.0,381.5 429.6,380.2 430.2,382.9 430.8,380.3 431.4,380.1 431.9,379.7 432.5,379.1 433.1,375.8 433.7,379.4 434.2,378.4 434.8,378.8 435.4,377.0 436.0,380.7 436.6,376.3 437.1,378.7 437.7,380.2 438.3,378.6 438.9,377.4 439.5,376.7 440.0,376.7 440.6,375.5 441.2,376.2 441.8,376.0 442.3,378.1 442.9,374.8 443.5,373.9 444.1,375.3 444.7,376.8 445.2,375.9 445.8,372.1 446.4,374.5 447.0,374.3 447.5,374.3 448.1,372.2 448.7,373.5 449.3,373.6 449.9,374.1 450.4,372.1 451.0,370.5 451.6,371.7 452.2,370.2 452.7,370.8 453.3,370.6 453.9,370.4 454.5,370.3 455.1,368.9 455.6,369.4 456.2,370.5 456.8,369.4 457.4,369.4 458.0,368.5 458.5,368.7 459.1,368.2 459.7,370.3 460.3,367.8 460.8,366.4 461.4,369.6 462.0,365.6 462.6,367.0 463.2,367.5 463.7,369.3 464.3,365.4 464.9,367.9 465.5,367.1 466.0,365.6 466.6,367.4 467.2,367.2 467.8,367.2 468.4,365.7 468.9,364.6 469.5,364.6 470.1,364.4 470.7,365.2 471.2,364.4 471.8,365.3 472.4,361.6 473.0,363.9 473.6,366.6 474.1,365.3 474.7,361.6 475.3,365.4 475.9,364.0 476.5,362.7 477.0,364.6 477.6,361.5 478.2,360.6 478.8,363.8 479.3,361.0 479.9,363.7 480.5,363.7 481.1,361.9 481.7,361.8 482.2,362.9 482.8,360.8 483.4,363.9 484.0,362.9 484.5,363.1 485.1,360.5 485.7,360.4 486.3,360.4 486.9,363.1 487.4,361.1 488.0,360.7 488.6,363.5 489.2,362.5 489.7,360.4 490.3,360.4 490.9,361.0 491.5,360.6 492.1,360.9 492.6,361.2 493.2,361.6 493.8,362.6 494.4,361.8 494.9,362.1 495.5,358.4 496.1,361.4 496.7,361.8 497.3,362.2 497.8,362.2 498.4,362.5 499.0,361.5 499.6,362.4 500.2,361.3 500.7,363.5 501.3,362.1 501.9,361.5 502.5,364.4 503.0,362.7 503.6,362.7 504.2,363.6 504.8,363.9 505.4,365.8 505.9,361.8 506.5,364.8 507.1,365.3 507.7,362.8 508.2,366.1 508.8,362.2 509.4,362.7 510.0,362.3 510.6,363.1 511.1,364.4 511.7,365.1 512.3,360.4 512.9,362.8 513.4,362.7" fill="none" stroke="#d81414" stroke-width="0.9" stroke-linejoin="round"/>
<path d="M40.5 358.5H517.5V440.5" stroke="#8c8c8c" stroke-width="0.9" fill="none"/>
<path d="M40.5 358.5V440.5H517.5" stroke="#333" stroke-width="0.9" fill="none"/>
<text transform="translate(38.6 440.0) scale(1 1.2)" text-anchor="end" class="ct">10</text>
<text transform="translate(38.6 430.4) scale(1 1.2)" text-anchor="end" class="ct">20</text>
<text transform="translate(38.6 420.8) scale(1 1.2)" text-anchor="end" class="ct">30</text>
<text transform="translate(38.6 411.3) scale(1 1.2)" text-anchor="end" class="ct">40</text>
<text transform="translate(38.6 401.7) scale(1 1.2)" text-anchor="end" class="ct">50</text>
<text transform="translate(38.6 392.1) scale(1 1.2)" text-anchor="end" class="ct">60</text>
<text transform="translate(38.6 382.5) scale(1 1.2)" text-anchor="end" class="ct">70</text>
<text transform="translate(38.6 372.9) scale(1 1.2)" text-anchor="end" class="ct">80</text>
<text transform="translate(38.6 363.4) scale(1 1.2)" text-anchor="end" class="ct">90</text>
<text transform="translate(47.5 446) scale(1 1.2)" text-anchor="middle" class="ct">-600</text>
<text transform="translate(86.0 446) scale(1 1.2)" text-anchor="middle" class="ct">-500</text>
<text transform="translate(124.6 446) scale(1 1.2)" text-anchor="middle" class="ct">-400</text>
<text transform="translate(163.1 446) scale(1 1.2)" text-anchor="middle" class="ct">-300</text>
<text transform="translate(201.7 446) scale(1 1.2)" text-anchor="middle" class="ct">-200</text>
<text transform="translate(240.2 446) scale(1 1.2)" text-anchor="middle" class="ct">-100</text>
<text transform="translate(278.7 446) scale(1 1.2)" text-anchor="middle" class="ct">0</text>
<text transform="translate(317.3 446) scale(1 1.2)" text-anchor="middle" class="ct">100</text>
<text transform="translate(355.8 446) scale(1 1.2)" text-anchor="middle" class="ct">200</text>
<text transform="translate(394.4 446) scale(1 1.2)" text-anchor="middle" class="ct">300</text>
<text transform="translate(432.9 446) scale(1 1.2)" text-anchor="middle" class="ct">400</text>
<text transform="translate(471.4 446) scale(1 1.2)" text-anchor="middle" class="ct">500</text>
<text transform="translate(510.0 446) scale(1 1.2)" text-anchor="middle" class="ct">600</text>
<text transform="translate(278.8 452.7) scale(0.96 1.2)" text-anchor="middle" class="ct">L(Pixel)</text>
<text transform="translate(30.6 398.6) scale(0.86 1.15) rotate(-90)" text-anchor="middle" class="ct">L(cd/m²)</text>
<rect x="535.5" y="365.5" width="28" height="7" fill="#000"/>
<rect x="534.5" y="364.5" width="28" height="7" fill="#fff" stroke="#333" stroke-width="0.6"/>
<line x1="536.5" y1="368" x2="541" y2="368" stroke="#e04040" stroke-width="0.7"/>
<text transform="translate(543 370.2) scale(1 1.2)" class="ct">Leu-ZC</text>
</svg>
<!-- right vertical tab -->
<div style="left:585.6px;top:352.4px;width:9.2px;height:23px;background:#d8d5ce;border:0.6px solid;border-color:#eeece8 #8c8880 #6c6a66 #e4e2dc"></div>
<svg width="6" height="6" viewBox="0 0 6 6" style="left:588px;top:358.2px"><circle cx="2.2" cy="3" r="1.3" fill="none" stroke="#333" stroke-width="0.6"/><circle cx="4" cy="3" r="1" fill="none" stroke="#333" stroke-width="0.5"/></svg>
<div style="left:594.6px;top:346px;width:0.8px;height:6px;background:#8c8880"></div>
</div></div>
</body></html>
